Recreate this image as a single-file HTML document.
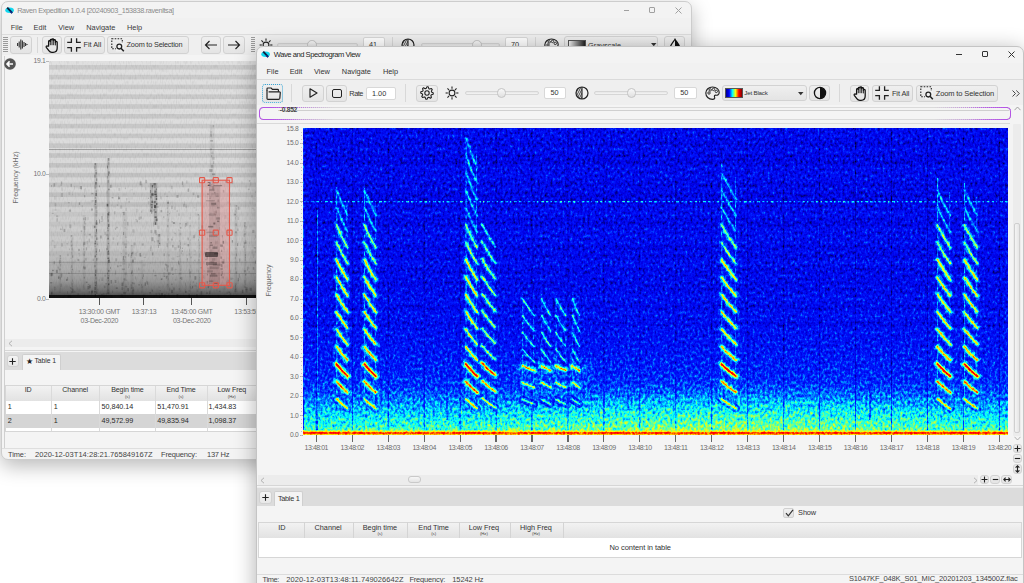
<!DOCTYPE html><html><head><meta charset="utf-8"><style>
html,body{margin:0;padding:0;}
body{width:1024px;height:583px;overflow:hidden;position:relative;background:#ffffff;font-family:"Liberation Sans",sans-serif;}
.t{position:absolute;line-height:1;white-space:nowrap;}
.r{position:absolute;display:block;}
</style></head><body>
<div class="r" style="left:0.5px;top:0.5px;width:691.5px;height:459.5px;border-radius:7px;background:#f3f3f3;box-shadow:0 6px 20px rgba(0,0,0,0.28);border:1px solid #cdcdcd;box-sizing:border-box;"></div>
<div class="r" style="left:1.50px;top:18.00px;width:689.00px;height:16.00px;background:#f1f1f1;"></div>
<div class="r" style="left:1.50px;top:34.00px;width:689.00px;height:1.00px;background:#dcdcdc;"></div>
<div class="r" style="left:1.50px;top:35.00px;width:689.00px;height:20.00px;background:#efefef;"></div>
<div class="r" style="left:1.50px;top:55.00px;width:689.00px;height:393.00px;background:#f4f4f4;"></div>
<div class="r" style="left:1.50px;top:448.00px;width:689.00px;height:1.00px;background:#dedede;"></div>
<svg class="r" style="left:5px;top:7px;" width="10" height="7" viewBox="0 0 10 7"><ellipse cx="4.6" cy="3.3" rx="4.3" ry="2.7" fill="#12d8f0"/><path d="M2.2,0.6 L7.2,5.8" stroke="#102040" stroke-width="1.9"/><path d="M5.5,4.2 L7,6.2" stroke="#0a2a8a" stroke-width="1.6"/></svg>
<div class="t" style="top:6.53px;font-size:7.3px;color:#8c8c8c;letter-spacing:-0.349px;left:17.20px;">Raven Expedition 1.0.4 [20240903_153838.ravenltsa]</div>
<div class="r" style="left:623.80px;top:9.60px;width:5.70px;height:1.00px;background:#a0a0a0;"></div>
<div class="r" style="left:649.00px;top:7.00px;width:6.00px;height:6.00px;background:transparent;border:1px solid #a0a0a0;border-radius:1px;box-sizing:border-box;"></div>
<svg class="r" style="left:675px;top:7px;" width="7" height="7" viewBox="0 0 7 7"><path d="M0.5,0.5 L6.5,6.5 M6.5,0.5 L0.5,6.5" stroke="#a0a0a0" stroke-width="1"/></svg>
<div class="t" style="top:23.68px;font-size:7.4px;color:#3a3a3a;left:10.80px;">File</div>
<div class="t" style="top:23.68px;font-size:7.4px;color:#3a3a3a;left:33.60px;">Edit</div>
<div class="t" style="top:23.68px;font-size:7.4px;color:#3a3a3a;left:58.30px;">View</div>
<div class="t" style="top:23.68px;font-size:7.4px;color:#3a3a3a;left:86.20px;">Navigate</div>
<div class="t" style="top:23.68px;font-size:7.4px;color:#3a3a3a;left:127.00px;">Help</div>
<svg class="r" style="left:3px;top:37px;" width="5" height="16" viewBox="0 0 5 16"><rect x="0" y="0" width="5" height="1" fill="#9a9a9a"/><rect x="0" y="2" width="5" height="1" fill="#9a9a9a"/><rect x="0" y="4" width="5" height="1" fill="#9a9a9a"/><rect x="0" y="6" width="5" height="1" fill="#9a9a9a"/><rect x="0" y="8" width="5" height="1" fill="#9a9a9a"/><rect x="0" y="10" width="5" height="1" fill="#9a9a9a"/><rect x="0" y="12" width="5" height="1" fill="#9a9a9a"/><rect x="0" y="14" width="5" height="1" fill="#9a9a9a"/></svg>
<div class="r" style="left:10.00px;top:36.00px;width:21.50px;height:17.50px;background:linear-gradient(#efefef,#e4e4e4);border:1px solid #d2d2d2;border-radius:3px;box-sizing:border-box;"></div>
<svg class="r" style="left:14.5px;top:39px;" width="13" height="11" viewBox="0 0 13 11"><path d="M1,5.5 V5.5 M2.6,4 V7 M4.2,2.5 V8.5 M5.8,0.5 V10.5 M7.4,1.5 V9.5 M9,3 V8 M10.6,4 V7 M12,5 V6" stroke="#333" stroke-width="1.1"/></svg>
<div class="r" style="left:37.00px;top:37.00px;width:1.00px;height:16.00px;background:#d8d8d8;"></div>
<div class="r" style="left:42.00px;top:36.00px;width:19.50px;height:17.50px;background:linear-gradient(#efefef,#e4e4e4);border:1px solid #d2d2d2;border-radius:3px;box-sizing:border-box;"></div>
<svg class="r" style="left:45px;top:37.5px;" width="14" height="15" viewBox="0 0 14 15"><path d="M3.6,8.2 L3.6,3.4 C3.6,2.3 5.3,2.3 5.3,3.4 L5.3,2.1 C5.3,1 7,1 7,2.1 L7,1.7 C7,0.6 8.7,0.6 8.7,1.7 L8.7,2.5 C8.7,1.4 10.4,1.4 10.4,2.5 L10.4,4.2 C10.4,3.2 12.2,3.2 12.2,4.3 L12.2,10 C12.2,12.6 10.5,14.3 8.1,14.3 L6.8,14.3 C5.4,14.3 4.5,13.7 3.8,12.7 L1.3,9.4 C0.7,8.5 1.7,7.5 2.6,8.2 Z" fill="none" stroke="#111" stroke-width="1.25" stroke-linejoin="round"/><path d="M5.3,3.2 V7.2 M7,2 V7.2 M8.7,2.4 V7.2 M10.4,4 V7.4" stroke="#111" stroke-width="0.9"/></svg>
<div class="r" style="left:63.50px;top:36.00px;width:41.00px;height:17.50px;background:linear-gradient(#efefef,#e4e4e4);border:1px solid #d2d2d2;border-radius:3px;box-sizing:border-box;"></div>
<svg class="r" style="left:66.5px;top:38px;" width="14" height="14" viewBox="0 0 14 14"><path d="M4.4,0.3 V4.4 H0.2 M9.6,0.3 V4.4 H13.8 M4.4,13.7 V9.6 H0.2 M9.6,13.7 V9.6 H13.8" fill="none" stroke="#222" stroke-width="1.3"/></svg>
<div class="t" style="top:41.13px;font-size:7.3px;color:#333;left:83.50px;">Fit All</div>
<div class="r" style="left:107.00px;top:36.00px;width:82.00px;height:17.50px;background:linear-gradient(#efefef,#e4e4e4);border:1px solid #d2d2d2;border-radius:3px;box-sizing:border-box;"></div>
<svg class="r" style="left:110.5px;top:38px;" width="14" height="14" viewBox="0 0 14 14"><rect x="0.8" y="0.8" width="10.5" height="10" fill="none" stroke="#222" stroke-width="1.1" stroke-dasharray="1.6 1.3"/><rect x="5" y="5" width="8" height="8.5" fill="#f0f0f0"/><circle cx="8.3" cy="8.6" r="2.4" fill="none" stroke="#222" stroke-width="1.3"/><path d="M10,10.3 L12.8,13.2" stroke="#222" stroke-width="1.6"/></svg>
<div class="t" style="top:41.13px;font-size:7.3px;color:#333;letter-spacing:-0.18px;left:126.60px;">Zoom to Selection</div>
<div class="r" style="left:200.50px;top:36.00px;width:20.50px;height:17.50px;background:linear-gradient(#efefef,#e4e4e4);border:1px solid #d2d2d2;border-radius:3px;box-sizing:border-box;"></div>
<svg class="r" style="left:203.5px;top:40px;" width="14" height="10" viewBox="0 0 14 10"><path d="M13,5 H1.5 M5.5,1 L1.5,5 L5.5,9" fill="none" stroke="#222" stroke-width="1.2"/></svg>
<div class="r" style="left:223.00px;top:36.00px;width:21.50px;height:17.50px;background:linear-gradient(#efefef,#e4e4e4);border:1px solid #d2d2d2;border-radius:3px;box-sizing:border-box;"></div>
<svg class="r" style="left:226.5px;top:40px;" width="14" height="10" viewBox="0 0 14 10"><path d="M1,5 H12.5 M8.5,1 L12.5,5 L8.5,9" fill="none" stroke="#222" stroke-width="1.2"/></svg>
<svg class="r" style="left:250.5px;top:37px;" width="5" height="16" viewBox="0 0 5 16"><rect x="0" y="0" width="4" height="1" fill="#9a9a9a"/><rect x="0" y="2" width="4" height="1" fill="#9a9a9a"/><rect x="0" y="4" width="4" height="1" fill="#9a9a9a"/><rect x="0" y="6" width="4" height="1" fill="#9a9a9a"/><rect x="0" y="8" width="4" height="1" fill="#9a9a9a"/><rect x="0" y="10" width="4" height="1" fill="#9a9a9a"/><rect x="0" y="12" width="4" height="1" fill="#9a9a9a"/><rect x="0" y="14" width="4" height="1" fill="#9a9a9a"/></svg>
<svg class="r" style="left:258.5px;top:37.5px;" width="14" height="14" viewBox="0 0 14 14"><circle cx="7" cy="7" r="2.9" fill="none" stroke="#222" stroke-width="1.1"/><path d="M11.20,7.00 L13.40,7.00" stroke="#222" stroke-width="1.1"/><path d="M9.97,9.97 L11.53,11.53" stroke="#222" stroke-width="1.1"/><path d="M7.00,11.20 L7.00,13.40" stroke="#222" stroke-width="1.1"/><path d="M4.03,9.97 L2.47,11.53" stroke="#222" stroke-width="1.1"/><path d="M2.80,7.00 L0.60,7.00" stroke="#222" stroke-width="1.1"/><path d="M4.03,4.03 L2.47,2.47" stroke="#222" stroke-width="1.1"/><path d="M7.00,2.80 L7.00,0.60" stroke="#222" stroke-width="1.1"/><path d="M9.97,4.03 L11.53,2.47" stroke="#222" stroke-width="1.1"/></svg>
<div class="r" style="left:277.00px;top:42.80px;width:81.00px;height:4.00px;background:linear-gradient(#e6e6e6,#f4f4f4);border:1px solid #d6d6d6;border-radius:3px;box-sizing:border-box;"></div>
<div class="r" style="left:307.20px;top:40.00px;width:9.60px;height:9.60px;background:linear-gradient(#f8f8f8,#e0e0e0);border:1px solid #c4c4c4;border-radius:50%;box-sizing:border-box;"></div>
<div class="r" style="left:363.00px;top:36.50px;width:22.00px;height:16.50px;background:#fff;border:1px solid #d8d8d8;border-radius:2px;box-sizing:border-box;"></div>
<div class="t" style="top:41.08px;font-size:7.3px;color:#333;left:369.00px;">41</div>
<div class="r" style="left:392.00px;top:37.00px;width:1.00px;height:16.00px;background:#d8d8d8;"></div>
<svg class="r" style="left:400.5px;top:37.5px;" width="14" height="14" viewBox="0 0 14 14"><defs><clipPath id="hc400.5"><path d="M7,1.3 A5.7,5.7 0 0 0 7,12.7 Z"/></clipPath></defs><circle cx="7" cy="7" r="6" fill="none" stroke="#222" stroke-width="1.2"/><path d="M7,1 V13" stroke="#222" stroke-width="1.1"/><g clip-path="url(#hc400.5)"><path d="M-2,13 L4,1" stroke="#222" stroke-width="0.8"/><path d="M0,13 L6,1" stroke="#222" stroke-width="0.8"/><path d="M2,13 L8,1" stroke="#222" stroke-width="0.8"/><path d="M4,13 L10,1" stroke="#222" stroke-width="0.8"/><path d="M6,13 L12,1" stroke="#222" stroke-width="0.8"/></g></svg>
<div class="r" style="left:420.60px;top:42.80px;width:79.40px;height:4.00px;background:linear-gradient(#e6e6e6,#f4f4f4);border:1px solid #d6d6d6;border-radius:3px;box-sizing:border-box;"></div>
<div class="r" style="left:472.20px;top:40.00px;width:9.60px;height:9.60px;background:linear-gradient(#f8f8f8,#e0e0e0);border:1px solid #c4c4c4;border-radius:50%;box-sizing:border-box;"></div>
<div class="r" style="left:505.00px;top:36.50px;width:22.50px;height:16.50px;background:#fff;border:1px solid #d8d8d8;border-radius:2px;box-sizing:border-box;"></div>
<div class="t" style="top:41.08px;font-size:7.3px;color:#333;left:511.00px;">70</div>
<div class="r" style="left:534.70px;top:37.00px;width:1.00px;height:16.00px;background:#d8d8d8;"></div>
<svg class="r" style="left:543.5px;top:38px;" width="15" height="14" viewBox="0 0 15 14"><path d="M7.5,1 C11.5,1 14.2,3.6 14.2,6.6 C14.2,8.8 12.4,9.4 11,9.2 C9.6,9 9,10 9.6,11.2 C10.2,12.6 9.2,13.3 7.5,13.3 C3.6,13.3 0.8,10.5 0.8,7 C0.8,3.6 3.8,1 7.5,1Z" fill="none" stroke="#222" stroke-width="1.15"/><circle cx="4" cy="7" r="1.2" fill="none" stroke="#222" stroke-width="0.9"/><circle cx="5.2" cy="3.9" r="1.2" fill="none" stroke="#222" stroke-width="0.9"/><circle cx="8.5" cy="3.4" r="1.2" fill="none" stroke="#222" stroke-width="0.9"/><circle cx="11.3" cy="5.4" r="1.2" fill="none" stroke="#222" stroke-width="0.9"/></svg>
<div class="r" style="left:564.00px;top:36.00px;width:94.00px;height:17.50px;background:linear-gradient(#efefef,#e4e4e4);border:1px solid #d2d2d2;border-radius:3px;box-sizing:border-box;"></div>
<div class="r" style="left:567.50px;top:39.50px;width:18.00px;height:11.00px;background:linear-gradient(90deg,#f4f4f4,#202020);border:1px solid #555;box-sizing:border-box;"></div>
<div class="t" style="top:41.93px;font-size:7.3px;color:#333;letter-spacing:0.017px;left:588.00px;">Grayscale</div>
<svg class="r" style="left:651px;top:43px;" width="6" height="4" viewBox="0 0 6 4"><path d="M0,0 H5.5 L2.75,3.2Z" fill="#333"/></svg>
<div class="r" style="left:663.70px;top:36.00px;width:21.00px;height:17.50px;background:linear-gradient(#efefef,#e4e4e4);border:1px solid #d2d2d2;border-radius:3px;box-sizing:border-box;"></div>
<svg class="r" style="left:668.5px;top:38px;" width="12" height="14" viewBox="0 0 12 14"><path d="M6,1.2 C4.8,3.4 1.4,6.6 1.4,9.3 C1.4,11.8 3.5,13.4 6,13.4 C8.5,13.4 10.6,11.8 10.6,9.3 C10.6,6.6 7.2,3.4 6,1.2Z" fill="none" stroke="#111" stroke-width="1.2"/><path d="M6,1.2 C7.2,3.4 10.6,6.6 10.6,9.3 C10.6,11.8 8.5,13.4 6,13.4Z" fill="#111"/></svg>
<div class="r" style="left:4.00px;top:56.00px;width:1.00px;height:392.00px;background:#d0d0d0;"></div>
<svg class="r" style="left:4px;top:58px;" width="12" height="12" viewBox="0 0 12 12"><circle cx="6" cy="6" r="5.8" fill="#555"/><path d="M9,6 H3.2 M5.6,3.4 L3,6 L5.6,8.6" fill="none" stroke="#fff" stroke-width="1.6"/></svg>
<div class="t" style="top:57.78px;font-size:6.8px;color:#747474;letter-spacing:-0.3px;right:978.50px;">19.1</div>
<div class="t" style="top:170.58px;font-size:6.8px;color:#747474;letter-spacing:-0.3px;right:978.50px;">10.0</div>
<div class="t" style="top:295.58px;font-size:6.8px;color:#747474;letter-spacing:-0.3px;right:978.50px;">0.0</div>
<div class="r" style="left:46.30px;top:60.80px;width:3.20px;height:0.90px;background:#b8b8b8;"></div>
<div class="r" style="left:46.30px;top:173.60px;width:3.20px;height:0.90px;background:#b8b8b8;"></div>
<div class="r" style="left:46.30px;top:298.60px;width:3.20px;height:0.90px;background:#b8b8b8;"></div>
<div class="t" style="top:174.18px;font-size:7.0px;color:#6a6a6a;letter-spacing:0.019px;left:-284.80px;width:600px;text-align:center;transform:rotate(-90deg);">Frequency (kHz)</div>
<svg class="r" style="left:49px;top:61px;" width="207" height="237" viewBox="0 0 207 237"><defs><linearGradient id="gg" x1="0" y1="0" x2="0" y2="1"><stop offset="0" stop-color="#e0e0e0"/><stop offset="0.35" stop-color="#dcdcdc"/><stop offset="0.5" stop-color="#d6d6d6"/><stop offset="0.78" stop-color="#c8c8c8"/><stop offset="0.86" stop-color="#b4b4b4"/><stop offset="0.93" stop-color="#969696"/><stop offset="0.97" stop-color="#707070"/><stop offset="1" stop-color="#404040"/></linearGradient><filter id="gn" x="0" y="0" width="1" height="1" color-interpolation-filters="sRGB"><feTurbulence type="fractalNoise" baseFrequency="0.8 0.25" numOctaves="1" seed="11" result="n"/><feColorMatrix in="n" type="matrix" values="0 0 0 0 0  0 0 0 0 0  0 0 0 0 0  -0.16 0 0 0 0.085" result="a"/><feComposite in="a" in2="SourceGraphic" operator="in"/></filter></defs><rect x="0" y="0" width="207" height="237" fill="url(#gg)"/><rect x="0" y="4.0" width="207" height="4.6" fill="#000" fill-opacity="0.095"/><rect x="0" y="13.8" width="207" height="4.6" fill="#000" fill-opacity="0.095"/><rect x="0" y="23.6" width="207" height="4.6" fill="#000" fill-opacity="0.095"/><rect x="0" y="33.4" width="207" height="4.6" fill="#000" fill-opacity="0.095"/><rect x="0" y="43.2" width="207" height="4.6" fill="#000" fill-opacity="0.095"/><rect x="0" y="53.0" width="207" height="4.6" fill="#000" fill-opacity="0.095"/><rect x="0" y="62.8" width="207" height="4.6" fill="#000" fill-opacity="0.095"/><rect x="0" y="72.6" width="207" height="4.6" fill="#000" fill-opacity="0.095"/><rect x="0" y="82.4" width="207" height="4.6" fill="#000" fill-opacity="0.095"/><rect x="0" y="92.2" width="207" height="4.6" fill="#000" fill-opacity="0.095"/><rect x="0" y="102.0" width="207" height="4.6" fill="#000" fill-opacity="0.095"/><rect x="0" y="111.8" width="207" height="4.6" fill="#000" fill-opacity="0.095"/><rect x="0" y="121.6" width="207" height="4.6" fill="#000" fill-opacity="0.095"/><rect x="0" y="131.4" width="207" height="4.6" fill="#000" fill-opacity="0.095"/><rect x="0" y="141.2" width="207" height="4.6" fill="#000" fill-opacity="0.095"/><rect x="0" y="151.0" width="207" height="4.6" fill="#000" fill-opacity="0.045"/><rect x="0" y="160.8" width="207" height="4.6" fill="#000" fill-opacity="0.045"/><rect x="0" y="170.6" width="207" height="4.6" fill="#000" fill-opacity="0.045"/><rect x="0" y="180.4" width="207" height="4.6" fill="#000" fill-opacity="0.045"/><rect x="0" y="190.2" width="207" height="4.6" fill="#000" fill-opacity="0.045"/><rect x="0" y="200.0" width="207" height="4.6" fill="#000" fill-opacity="0.045"/><rect x="0" y="88" width="207" height="0.9" fill="#000" fill-opacity="0.3"/><rect x="0" y="201" width="207" height="0.8" fill="#000" fill-opacity="0.15"/><rect x="0" y="212" width="207" height="0.8" fill="#000" fill-opacity="0.2"/><rect x="0" y="234" width="207" height="3" fill="#111"/><rect x="45.3" y="102" width="3.0" height="131" fill="#000" fill-opacity="0.11"/><rect x="45.7" y="102.0" width="1.1" height="2.3" fill="#000" fill-opacity="0.31"/><rect x="45.2" y="105.3" width="1.3" height="2.8" fill="#000" fill-opacity="0.16"/><rect x="46.1" y="108.8" width="1.6" height="1.1" fill="#000" fill-opacity="0.16"/><rect x="46.3" y="110.8" width="1.8" height="2.6" fill="#000" fill-opacity="0.20"/><rect x="45.5" y="113.6" width="0.9" height="2.9" fill="#000" fill-opacity="0.34"/><rect x="47.0" y="117.4" width="1.4" height="2.6" fill="#000" fill-opacity="0.21"/><rect x="46.0" y="120.9" width="1.8" height="2.7" fill="#000" fill-opacity="0.30"/><rect x="45.8" y="123.6" width="0.9" height="1.5" fill="#000" fill-opacity="0.13"/><rect x="45.6" y="125.5" width="1.2" height="2.3" fill="#000" fill-opacity="0.17"/><rect x="46.8" y="129.2" width="1.0" height="2.3" fill="#000" fill-opacity="0.15"/><rect x="46.4" y="132.0" width="1.5" height="3.0" fill="#000" fill-opacity="0.34"/><rect x="45.7" y="136.2" width="1.2" height="1.5" fill="#000" fill-opacity="0.16"/><rect x="45.8" y="139.0" width="1.6" height="2.8" fill="#000" fill-opacity="0.36"/><rect x="45.6" y="142.5" width="1.5" height="1.5" fill="#000" fill-opacity="0.26"/><rect x="45.8" y="145.4" width="2.0" height="1.8" fill="#000" fill-opacity="0.13"/><rect x="45.8" y="147.2" width="1.8" height="1.2" fill="#000" fill-opacity="0.12"/><rect x="46.5" y="149.0" width="2.0" height="3.0" fill="#000" fill-opacity="0.10"/><rect x="46.5" y="153.1" width="1.1" height="2.4" fill="#000" fill-opacity="0.13"/><rect x="47.1" y="159.3" width="1.0" height="1.5" fill="#000" fill-opacity="0.34"/><rect x="46.8" y="161.3" width="1.0" height="2.3" fill="#000" fill-opacity="0.25"/><rect x="45.2" y="164.8" width="1.2" height="2.1" fill="#000" fill-opacity="0.36"/><rect x="47.1" y="168.1" width="0.9" height="2.7" fill="#000" fill-opacity="0.37"/><rect x="46.5" y="170.9" width="1.7" height="2.0" fill="#000" fill-opacity="0.14"/><rect x="45.7" y="173.6" width="1.8" height="2.1" fill="#000" fill-opacity="0.16"/><rect x="47.2" y="176.5" width="1.2" height="2.5" fill="#000" fill-opacity="0.28"/><rect x="45.9" y="179.6" width="1.1" height="2.0" fill="#000" fill-opacity="0.26"/><rect x="45.5" y="182.0" width="1.6" height="1.4" fill="#000" fill-opacity="0.35"/><rect x="45.4" y="184.7" width="1.6" height="1.1" fill="#000" fill-opacity="0.14"/><rect x="46.5" y="187.3" width="1.7" height="2.1" fill="#000" fill-opacity="0.15"/><rect x="46.6" y="189.6" width="1.4" height="1.9" fill="#000" fill-opacity="0.29"/><rect x="46.9" y="192.9" width="1.2" height="1.2" fill="#000" fill-opacity="0.17"/><rect x="45.7" y="194.4" width="1.1" height="1.9" fill="#000" fill-opacity="0.36"/><rect x="47.4" y="197.0" width="0.9" height="2.7" fill="#000" fill-opacity="0.33"/><rect x="45.3" y="204.2" width="1.3" height="2.0" fill="#000" fill-opacity="0.21"/><rect x="45.9" y="213.2" width="1.0" height="2.1" fill="#000" fill-opacity="0.37"/><rect x="46.5" y="216.2" width="0.9" height="2.1" fill="#000" fill-opacity="0.24"/><rect x="45.5" y="221.0" width="1.6" height="1.4" fill="#000" fill-opacity="0.13"/><rect x="45.9" y="223.7" width="1.5" height="1.5" fill="#000" fill-opacity="0.26"/><rect x="45.4" y="226.0" width="1.7" height="2.9" fill="#000" fill-opacity="0.21"/><rect x="45.1" y="229.9" width="1.7" height="1.6" fill="#000" fill-opacity="0.23"/><rect x="45.8" y="233.0" width="1.1" height="3.0" fill="#000" fill-opacity="0.36"/><rect x="57.8" y="97" width="2.8" height="136" fill="#000" fill-opacity="0.13"/><rect x="59.3" y="97.0" width="1.0" height="2.8" fill="#000" fill-opacity="0.35"/><rect x="59.4" y="100.7" width="0.8" height="3.0" fill="#000" fill-opacity="0.22"/><rect x="58.0" y="104.6" width="0.9" height="2.9" fill="#000" fill-opacity="0.30"/><rect x="59.3" y="110.4" width="1.3" height="2.3" fill="#000" fill-opacity="0.40"/><rect x="59.3" y="112.9" width="0.8" height="1.8" fill="#000" fill-opacity="0.33"/><rect x="57.7" y="115.1" width="1.2" height="2.5" fill="#000" fill-opacity="0.14"/><rect x="58.5" y="118.9" width="1.6" height="2.8" fill="#000" fill-opacity="0.17"/><rect x="59.1" y="127.7" width="1.6" height="1.5" fill="#000" fill-opacity="0.25"/><rect x="57.7" y="142.8" width="1.6" height="2.6" fill="#000" fill-opacity="0.41"/><rect x="59.3" y="150.8" width="1.1" height="1.0" fill="#000" fill-opacity="0.44"/><rect x="58.4" y="152.2" width="1.8" height="2.3" fill="#000" fill-opacity="0.43"/><rect x="57.9" y="154.7" width="1.8" height="2.9" fill="#000" fill-opacity="0.16"/><rect x="58.5" y="158.3" width="1.4" height="2.5" fill="#000" fill-opacity="0.25"/><rect x="58.9" y="163.1" width="1.5" height="2.9" fill="#000" fill-opacity="0.34"/><rect x="58.3" y="166.5" width="1.1" height="1.1" fill="#000" fill-opacity="0.40"/><rect x="58.4" y="168.7" width="1.2" height="1.6" fill="#000" fill-opacity="0.22"/><rect x="58.7" y="173.4" width="1.1" height="2.8" fill="#000" fill-opacity="0.12"/><rect x="58.4" y="176.6" width="1.5" height="1.9" fill="#000" fill-opacity="0.27"/><rect x="58.8" y="181.9" width="1.3" height="1.3" fill="#000" fill-opacity="0.23"/><rect x="58.1" y="184.5" width="1.0" height="2.5" fill="#000" fill-opacity="0.13"/><rect x="59.1" y="189.4" width="1.0" height="1.8" fill="#000" fill-opacity="0.28"/><rect x="58.9" y="191.6" width="1.6" height="2.3" fill="#000" fill-opacity="0.16"/><rect x="58.3" y="196.7" width="1.6" height="1.1" fill="#000" fill-opacity="0.38"/><rect x="59.0" y="198.8" width="1.8" height="3.0" fill="#000" fill-opacity="0.32"/><rect x="59.0" y="209.2" width="1.4" height="1.5" fill="#000" fill-opacity="0.29"/><rect x="58.2" y="211.7" width="1.1" height="1.5" fill="#000" fill-opacity="0.23"/><rect x="58.8" y="214.0" width="1.5" height="1.3" fill="#000" fill-opacity="0.14"/><rect x="58.6" y="215.9" width="1.0" height="2.1" fill="#000" fill-opacity="0.42"/><rect x="59.1" y="222.4" width="1.2" height="1.8" fill="#000" fill-opacity="0.40"/><rect x="58.6" y="228.2" width="1.0" height="2.2" fill="#000" fill-opacity="0.13"/><rect x="58.7" y="231.0" width="1.0" height="2.4" fill="#000" fill-opacity="0.16"/><rect x="73.7" y="151" width="4.0" height="81" fill="#000" fill-opacity="0.06"/><rect x="73.3" y="151.0" width="2.0" height="1.1" fill="#000" fill-opacity="0.15"/><rect x="74.0" y="152.3" width="1.6" height="1.9" fill="#000" fill-opacity="0.10"/><rect x="75.4" y="158.3" width="0.8" height="1.5" fill="#000" fill-opacity="0.20"/><rect x="75.7" y="166.4" width="1.1" height="1.0" fill="#000" fill-opacity="0.13"/><rect x="75.9" y="175.6" width="2.3" height="1.1" fill="#000" fill-opacity="0.11"/><rect x="75.1" y="182.3" width="3.0" height="2.2" fill="#000" fill-opacity="0.10"/><rect x="76.0" y="185.2" width="1.6" height="1.7" fill="#000" fill-opacity="0.17"/><rect x="75.9" y="191.3" width="2.4" height="2.4" fill="#000" fill-opacity="0.09"/><rect x="75.5" y="194.9" width="1.8" height="2.1" fill="#000" fill-opacity="0.09"/><rect x="73.6" y="198.2" width="2.7" height="2.7" fill="#000" fill-opacity="0.12"/><rect x="73.4" y="201.8" width="2.7" height="1.8" fill="#000" fill-opacity="0.08"/><rect x="73.0" y="207.5" width="2.9" height="1.6" fill="#000" fill-opacity="0.16"/><rect x="74.5" y="217.3" width="2.0" height="2.2" fill="#000" fill-opacity="0.16"/><rect x="73.9" y="220.0" width="1.4" height="2.4" fill="#000" fill-opacity="0.08"/><rect x="75.9" y="224.9" width="2.4" height="1.4" fill="#000" fill-opacity="0.13"/><rect x="74.1" y="226.7" width="1.3" height="1.2" fill="#000" fill-opacity="0.05"/><rect x="74.3" y="231.1" width="2.7" height="2.4" fill="#000" fill-opacity="0.18"/><rect x="21.8" y="174" width="2.5" height="57" fill="#000" fill-opacity="0.06"/><rect x="21.9" y="174.0" width="0.9" height="1.9" fill="#000" fill-opacity="0.19"/><rect x="22.8" y="176.7" width="0.9" height="2.6" fill="#000" fill-opacity="0.06"/><rect x="21.7" y="179.5" width="1.5" height="2.1" fill="#000" fill-opacity="0.16"/><rect x="22.3" y="182.6" width="1.2" height="2.6" fill="#000" fill-opacity="0.12"/><rect x="22.5" y="186.4" width="1.2" height="3.0" fill="#000" fill-opacity="0.16"/><rect x="21.9" y="190.8" width="1.3" height="1.4" fill="#000" fill-opacity="0.08"/><rect x="22.1" y="192.4" width="1.2" height="1.0" fill="#000" fill-opacity="0.08"/><rect x="23.0" y="194.4" width="1.3" height="2.4" fill="#000" fill-opacity="0.17"/><rect x="22.3" y="204.2" width="0.9" height="2.7" fill="#000" fill-opacity="0.16"/><rect x="22.7" y="207.7" width="1.3" height="1.6" fill="#000" fill-opacity="0.19"/><rect x="22.5" y="210.0" width="0.8" height="2.0" fill="#000" fill-opacity="0.10"/><rect x="23.0" y="218.5" width="0.8" height="2.3" fill="#000" fill-opacity="0.12"/><rect x="22.6" y="221.8" width="1.2" height="2.8" fill="#000" fill-opacity="0.12"/><rect x="22.9" y="224.8" width="1.3" height="1.7" fill="#000" fill-opacity="0.10"/><rect x="22.2" y="230.3" width="1.0" height="2.1" fill="#000" fill-opacity="0.20"/><rect x="33.8" y="154" width="2.5" height="75" fill="#000" fill-opacity="0.06"/><rect x="34.3" y="157.0" width="0.9" height="2.1" fill="#000" fill-opacity="0.16"/><rect x="35.0" y="160.0" width="1.2" height="2.5" fill="#000" fill-opacity="0.12"/><rect x="34.5" y="165.8" width="1.2" height="1.5" fill="#000" fill-opacity="0.06"/><rect x="35.1" y="168.7" width="0.9" height="2.8" fill="#000" fill-opacity="0.12"/><rect x="35.0" y="172.6" width="1.4" height="2.0" fill="#000" fill-opacity="0.09"/><rect x="34.3" y="181.2" width="1.5" height="2.6" fill="#000" fill-opacity="0.17"/><rect x="34.2" y="187.3" width="1.2" height="2.0" fill="#000" fill-opacity="0.13"/><rect x="34.8" y="190.1" width="0.9" height="1.9" fill="#000" fill-opacity="0.14"/><rect x="34.6" y="192.3" width="1.3" height="2.6" fill="#000" fill-opacity="0.17"/><rect x="34.6" y="199.3" width="1.2" height="2.0" fill="#000" fill-opacity="0.18"/><rect x="33.9" y="205.1" width="1.3" height="2.4" fill="#000" fill-opacity="0.12"/><rect x="34.7" y="215.7" width="1.3" height="1.8" fill="#000" fill-opacity="0.18"/><rect x="117.8" y="139" width="2.5" height="90" fill="#000" fill-opacity="0.05"/><rect x="118.5" y="140.5" width="1.2" height="1.7" fill="#000" fill-opacity="0.15"/><rect x="117.8" y="146.3" width="1.0" height="1.9" fill="#000" fill-opacity="0.15"/><rect x="118.2" y="149.6" width="1.1" height="2.4" fill="#000" fill-opacity="0.13"/><rect x="117.9" y="152.9" width="1.4" height="1.8" fill="#000" fill-opacity="0.10"/><rect x="118.5" y="157.8" width="1.5" height="3.0" fill="#000" fill-opacity="0.09"/><rect x="118.0" y="164.1" width="1.4" height="2.2" fill="#000" fill-opacity="0.15"/><rect x="118.6" y="177.2" width="1.1" height="2.3" fill="#000" fill-opacity="0.15"/><rect x="118.6" y="204.3" width="1.3" height="2.1" fill="#000" fill-opacity="0.13"/><rect x="117.8" y="207.6" width="1.0" height="2.9" fill="#000" fill-opacity="0.16"/><rect x="119.1" y="211.3" width="0.8" height="2.8" fill="#000" fill-opacity="0.17"/><rect x="118.0" y="214.6" width="1.5" height="1.8" fill="#000" fill-opacity="0.11"/><rect x="118.7" y="216.6" width="1.1" height="2.8" fill="#000" fill-opacity="0.15"/><rect x="118.3" y="222.8" width="1.1" height="1.8" fill="#000" fill-opacity="0.17"/><rect x="118.8" y="224.7" width="1.5" height="1.7" fill="#000" fill-opacity="0.06"/><rect x="185.6" y="144" width="2.8" height="87" fill="#000" fill-opacity="0.07"/><rect x="187.2" y="144.0" width="0.9" height="1.8" fill="#000" fill-opacity="0.15"/><rect x="187.1" y="146.8" width="0.8" height="2.3" fill="#000" fill-opacity="0.11"/><rect x="185.7" y="149.3" width="1.6" height="2.1" fill="#000" fill-opacity="0.10"/><rect x="185.3" y="152.7" width="1.7" height="1.7" fill="#000" fill-opacity="0.22"/><rect x="186.8" y="154.6" width="1.0" height="1.3" fill="#000" fill-opacity="0.06"/><rect x="185.9" y="155.9" width="1.1" height="2.6" fill="#000" fill-opacity="0.07"/><rect x="186.6" y="162.3" width="0.9" height="2.6" fill="#000" fill-opacity="0.24"/><rect x="186.2" y="170.3" width="1.5" height="2.0" fill="#000" fill-opacity="0.23"/><rect x="186.3" y="186.7" width="1.1" height="1.9" fill="#000" fill-opacity="0.14"/><rect x="187.0" y="192.6" width="0.9" height="2.7" fill="#000" fill-opacity="0.21"/><rect x="185.8" y="196.1" width="1.1" height="2.2" fill="#000" fill-opacity="0.13"/><rect x="185.8" y="206.3" width="1.5" height="2.2" fill="#000" fill-opacity="0.08"/><rect x="185.9" y="222.3" width="1.5" height="1.5" fill="#000" fill-opacity="0.12"/><rect x="185.8" y="223.9" width="1.2" height="2.7" fill="#000" fill-opacity="0.18"/><rect x="186.1" y="226.6" width="1.2" height="2.5" fill="#000" fill-opacity="0.13"/><rect x="185.8" y="230.2" width="0.9" height="2.6" fill="#000" fill-opacity="0.09"/><rect x="194.8" y="161" width="2.5" height="66" fill="#000" fill-opacity="0.06"/><rect x="195.3" y="161.0" width="1.3" height="2.3" fill="#000" fill-opacity="0.12"/><rect x="195.1" y="163.8" width="1.1" height="2.5" fill="#000" fill-opacity="0.15"/><rect x="195.6" y="167.0" width="1.1" height="2.3" fill="#000" fill-opacity="0.05"/><rect x="195.3" y="169.8" width="1.0" height="1.4" fill="#000" fill-opacity="0.05"/><rect x="195.4" y="172.3" width="1.3" height="1.4" fill="#000" fill-opacity="0.18"/><rect x="195.3" y="181.6" width="0.8" height="1.8" fill="#000" fill-opacity="0.17"/><rect x="195.4" y="187.2" width="1.2" height="2.7" fill="#000" fill-opacity="0.11"/><rect x="195.6" y="190.4" width="0.9" height="1.7" fill="#000" fill-opacity="0.07"/><rect x="195.8" y="192.8" width="1.3" height="2.8" fill="#000" fill-opacity="0.17"/><rect x="195.8" y="196.0" width="1.2" height="1.3" fill="#000" fill-opacity="0.15"/><rect x="195.7" y="197.5" width="1.3" height="2.5" fill="#000" fill-opacity="0.12"/><rect x="195.2" y="207.5" width="1.0" height="1.1" fill="#000" fill-opacity="0.06"/><rect x="196.1" y="209.4" width="0.8" height="1.6" fill="#000" fill-opacity="0.06"/><rect x="195.5" y="218.9" width="1.4" height="2.8" fill="#000" fill-opacity="0.10"/><rect x="196.2" y="222.4" width="0.9" height="1.3" fill="#000" fill-opacity="0.10"/><rect x="195.4" y="224.8" width="1.0" height="2.0" fill="#000" fill-opacity="0.12"/><rect x="81.5" y="184" width="3.0" height="48" fill="#000" fill-opacity="0.06"/><rect x="82.2" y="184.0" width="1.1" height="1.3" fill="#000" fill-opacity="0.10"/><rect x="81.5" y="194.3" width="1.5" height="2.7" fill="#000" fill-opacity="0.10"/><rect x="83.1" y="198.5" width="1.5" height="2.4" fill="#000" fill-opacity="0.10"/><rect x="81.9" y="211.4" width="1.0" height="1.7" fill="#000" fill-opacity="0.19"/><rect x="83.2" y="213.9" width="0.9" height="1.5" fill="#000" fill-opacity="0.07"/><rect x="82.6" y="221.1" width="1.8" height="1.8" fill="#000" fill-opacity="0.17"/><rect x="81.7" y="223.1" width="1.6" height="1.9" fill="#000" fill-opacity="0.12"/><rect x="81.9" y="225.4" width="1.4" height="2.5" fill="#000" fill-opacity="0.17"/><rect x="83.0" y="228.6" width="1.9" height="2.7" fill="#000" fill-opacity="0.12"/><rect x="82.7" y="231.7" width="2.0" height="1.8" fill="#000" fill-opacity="0.17"/><rect x="129.8" y="169" width="2.5" height="62" fill="#000" fill-opacity="0.05"/><rect x="130.8" y="171.8" width="1.4" height="2.1" fill="#000" fill-opacity="0.08"/><rect x="129.9" y="179.0" width="0.8" height="1.9" fill="#000" fill-opacity="0.10"/><rect x="131.2" y="181.3" width="0.8" height="3.0" fill="#000" fill-opacity="0.13"/><rect x="131.0" y="185.3" width="1.0" height="2.6" fill="#000" fill-opacity="0.12"/><rect x="130.0" y="188.1" width="0.8" height="2.4" fill="#000" fill-opacity="0.08"/><rect x="129.8" y="194.6" width="1.0" height="1.2" fill="#000" fill-opacity="0.09"/><rect x="130.4" y="197.0" width="1.4" height="1.9" fill="#000" fill-opacity="0.05"/><rect x="130.6" y="199.7" width="1.1" height="1.5" fill="#000" fill-opacity="0.07"/><rect x="129.6" y="201.8" width="1.5" height="2.3" fill="#000" fill-opacity="0.10"/><rect x="130.1" y="211.9" width="1.4" height="1.5" fill="#000" fill-opacity="0.12"/><rect x="129.8" y="227.1" width="0.9" height="1.6" fill="#000" fill-opacity="0.14"/><rect x="9.8" y="194" width="2.5" height="38" fill="#000" fill-opacity="0.05"/><rect x="10.9" y="194.0" width="1.0" height="2.5" fill="#000" fill-opacity="0.14"/><rect x="10.7" y="197.0" width="1.4" height="1.2" fill="#000" fill-opacity="0.14"/><rect x="11.1" y="198.8" width="1.1" height="2.9" fill="#000" fill-opacity="0.10"/><rect x="10.9" y="203.0" width="1.2" height="2.5" fill="#000" fill-opacity="0.10"/><rect x="10.1" y="207.5" width="1.3" height="2.2" fill="#000" fill-opacity="0.05"/><rect x="10.6" y="216.2" width="1.4" height="2.3" fill="#000" fill-opacity="0.15"/><rect x="91.8" y="199" width="2.5" height="33" fill="#000" fill-opacity="0.05"/><rect x="93.0" y="216.2" width="1.2" height="1.7" fill="#000" fill-opacity="0.14"/><rect x="92.0" y="223.0" width="0.9" height="2.0" fill="#000" fill-opacity="0.13"/><rect x="92.4" y="225.0" width="1.4" height="2.1" fill="#000" fill-opacity="0.11"/><rect x="100.8" y="122" width="3.5" height="29" fill="#000" fill-opacity="0.16"/><rect x="102.8" y="124.1" width="1.4" height="1.9" fill="#000" fill-opacity="0.43"/><rect x="101.1" y="129.0" width="1.0" height="2.8" fill="#000" fill-opacity="0.25"/><rect x="102.3" y="132.3" width="2.4" height="2.4" fill="#000" fill-opacity="0.45"/><rect x="101.5" y="135.1" width="1.0" height="2.3" fill="#000" fill-opacity="0.36"/><rect x="102.4" y="139.7" width="1.8" height="2.3" fill="#000" fill-opacity="0.37"/><rect x="101.7" y="143.2" width="1.9" height="1.1" fill="#000" fill-opacity="0.40"/><rect x="102.0" y="145.4" width="1.6" height="1.8" fill="#000" fill-opacity="0.29"/><rect x="101.0" y="148.7" width="2.0" height="2.0" fill="#000" fill-opacity="0.22"/><rect x="102.2" y="150.8" width="1.1" height="1.9" fill="#000" fill-opacity="0.29"/><rect x="104.8" y="122" width="3.5" height="42" fill="#000" fill-opacity="0.16"/><rect x="104.3" y="122.0" width="2.5" height="2.5" fill="#000" fill-opacity="0.31"/><rect x="105.2" y="125.3" width="1.3" height="1.6" fill="#000" fill-opacity="0.23"/><rect x="106.8" y="127.4" width="1.2" height="1.8" fill="#000" fill-opacity="0.25"/><rect x="105.4" y="129.6" width="2.1" height="2.2" fill="#000" fill-opacity="0.35"/><rect x="105.3" y="132.5" width="2.4" height="1.6" fill="#000" fill-opacity="0.49"/><rect x="106.6" y="134.5" width="1.6" height="1.7" fill="#000" fill-opacity="0.40"/><rect x="106.7" y="136.9" width="1.5" height="2.1" fill="#000" fill-opacity="0.42"/><rect x="104.9" y="140.1" width="1.8" height="1.7" fill="#000" fill-opacity="0.37"/><rect x="107.1" y="142.0" width="1.3" height="2.0" fill="#000" fill-opacity="0.40"/><rect x="105.0" y="144.1" width="2.2" height="3.0" fill="#000" fill-opacity="0.48"/><rect x="104.5" y="148.2" width="1.7" height="1.4" fill="#000" fill-opacity="0.24"/><rect x="105.6" y="150.1" width="1.8" height="1.9" fill="#000" fill-opacity="0.30"/><rect x="105.5" y="155.4" width="2.2" height="1.6" fill="#000" fill-opacity="0.41"/><rect x="106.7" y="157.5" width="1.9" height="2.6" fill="#000" fill-opacity="0.38"/><rect x="106.0" y="161.3" width="0.8" height="2.5" fill="#000" fill-opacity="0.49"/><rect x="108.5" y="173" width="3.0" height="12" fill="#000" fill-opacity="0.10"/><rect x="109.3" y="173.0" width="1.7" height="2.6" fill="#000" fill-opacity="0.18"/><rect x="108.3" y="179.0" width="1.9" height="2.4" fill="#000" fill-opacity="0.15"/><rect x="109.9" y="181.8" width="1.3" height="1.3" fill="#000" fill-opacity="0.29"/><rect x="108.9" y="184.4" width="1.0" height="2.5" fill="#000" fill-opacity="0.20"/><rect x="160.8" y="64" width="4.5" height="60" fill="#000" fill-opacity="0.06"/><rect x="163.8" y="64.0" width="1.3" height="2.1" fill="#000" fill-opacity="0.11"/><rect x="161.5" y="70.1" width="1.3" height="2.4" fill="#000" fill-opacity="0.14"/><rect x="161.2" y="72.8" width="1.6" height="2.9" fill="#000" fill-opacity="0.17"/><rect x="161.3" y="79.1" width="2.6" height="1.5" fill="#000" fill-opacity="0.22"/><rect x="160.9" y="87.3" width="2.1" height="1.9" fill="#000" fill-opacity="0.14"/><rect x="162.1" y="90.6" width="2.5" height="2.4" fill="#000" fill-opacity="0.09"/><rect x="162.2" y="94.0" width="0.9" height="2.1" fill="#000" fill-opacity="0.17"/><rect x="163.4" y="96.2" width="2.3" height="2.5" fill="#000" fill-opacity="0.12"/><rect x="164.0" y="100.2" width="1.3" height="2.8" fill="#000" fill-opacity="0.10"/><rect x="161.9" y="103.9" width="2.4" height="2.8" fill="#000" fill-opacity="0.17"/><rect x="160.3" y="108.1" width="3.2" height="2.8" fill="#000" fill-opacity="0.21"/><rect x="163.0" y="112.4" width="3.3" height="1.8" fill="#000" fill-opacity="0.21"/><rect x="164.1" y="115.6" width="1.1" height="1.0" fill="#000" fill-opacity="0.10"/><rect x="162.6" y="118.1" width="3.3" height="2.1" fill="#000" fill-opacity="0.13"/><rect x="161.1" y="120.4" width="2.0" height="1.2" fill="#000" fill-opacity="0.08"/><rect x="160.4" y="122.8" width="2.8" height="2.6" fill="#000" fill-opacity="0.20"/><rect x="148.9" y="154" width="2.2" height="75" fill="#000" fill-opacity="0.05"/><rect x="149.4" y="156.8" width="0.9" height="2.3" fill="#000" fill-opacity="0.07"/><rect x="149.5" y="166.4" width="1.0" height="1.2" fill="#000" fill-opacity="0.14"/><rect x="149.2" y="168.7" width="1.2" height="1.6" fill="#000" fill-opacity="0.11"/><rect x="149.6" y="170.7" width="1.1" height="1.3" fill="#000" fill-opacity="0.09"/><rect x="149.9" y="175.7" width="1.1" height="1.4" fill="#000" fill-opacity="0.06"/><rect x="149.0" y="177.8" width="1.0" height="2.4" fill="#000" fill-opacity="0.10"/><rect x="149.6" y="181.0" width="0.9" height="2.1" fill="#000" fill-opacity="0.06"/><rect x="149.9" y="183.4" width="1.0" height="2.2" fill="#000" fill-opacity="0.10"/><rect x="149.9" y="186.4" width="1.0" height="1.9" fill="#000" fill-opacity="0.12"/><rect x="150.2" y="192.4" width="0.8" height="1.1" fill="#000" fill-opacity="0.14"/><rect x="149.8" y="193.6" width="1.0" height="2.9" fill="#000" fill-opacity="0.13"/><rect x="149.3" y="197.9" width="1.2" height="2.3" fill="#000" fill-opacity="0.14"/><rect x="149.0" y="209.1" width="0.8" height="2.5" fill="#000" fill-opacity="0.08"/><rect x="150.1" y="215.8" width="0.9" height="1.5" fill="#000" fill-opacity="0.12"/><rect x="149.9" y="217.5" width="1.1" height="2.6" fill="#000" fill-opacity="0.05"/><rect x="149.7" y="220.4" width="1.0" height="1.2" fill="#000" fill-opacity="0.05"/><rect x="150.0" y="222.7" width="0.9" height="1.8" fill="#000" fill-opacity="0.06"/><rect x="139.9" y="164" width="2.2" height="67" fill="#000" fill-opacity="0.04"/><rect x="140.8" y="164.0" width="0.9" height="1.6" fill="#000" fill-opacity="0.07"/><rect x="140.8" y="178.2" width="1.0" height="1.8" fill="#000" fill-opacity="0.08"/><rect x="140.2" y="188.4" width="0.9" height="2.1" fill="#000" fill-opacity="0.10"/><rect x="140.1" y="191.9" width="1.1" height="2.7" fill="#000" fill-opacity="0.07"/><rect x="141.0" y="203.9" width="1.2" height="2.9" fill="#000" fill-opacity="0.06"/><rect x="140.1" y="208.3" width="1.0" height="2.0" fill="#000" fill-opacity="0.11"/><rect x="140.3" y="211.1" width="1.0" height="2.6" fill="#000" fill-opacity="0.07"/><rect x="140.4" y="214.5" width="1.2" height="2.0" fill="#000" fill-opacity="0.11"/><rect x="141.1" y="220.4" width="0.9" height="1.4" fill="#000" fill-opacity="0.09"/><rect x="140.9" y="222.5" width="1.0" height="1.3" fill="#000" fill-opacity="0.08"/><rect x="141.0" y="224.8" width="1.1" height="2.4" fill="#000" fill-opacity="0.09"/><rect x="133.2" y="186.7" width="0.8" height="1.2" fill="#000" fill-opacity="0.21"/><rect x="138.7" y="127.5" width="1.4" height="3.3" fill="#000" fill-opacity="0.21"/><rect x="146.7" y="221.7" width="1.5" height="1.0" fill="#000" fill-opacity="0.11"/><rect x="138.4" y="176.6" width="1.5" height="2.8" fill="#000" fill-opacity="0.14"/><rect x="114.6" y="236.9" width="1.5" height="1.0" fill="#000" fill-opacity="0.09"/><rect x="4.5" y="122.2" width="1.7" height="3.4" fill="#000" fill-opacity="0.20"/><rect x="23.0" y="133.2" width="1.0" height="1.3" fill="#000" fill-opacity="0.08"/><rect x="168.9" y="188.7" width="1.4" height="1.8" fill="#000" fill-opacity="0.11"/><rect x="117.4" y="203.4" width="1.1" height="4.0" fill="#000" fill-opacity="0.18"/><rect x="135.7" y="142.9" width="1.9" height="3.6" fill="#000" fill-opacity="0.06"/><rect x="114.9" y="206.5" width="0.8" height="1.2" fill="#000" fill-opacity="0.07"/><rect x="90.4" y="192.1" width="1.6" height="3.4" fill="#000" fill-opacity="0.21"/><rect x="109.8" y="232.6" width="1.1" height="1.1" fill="#000" fill-opacity="0.21"/><rect x="99.0" y="136.7" width="0.9" height="1.1" fill="#000" fill-opacity="0.23"/><rect x="117.1" y="134.9" width="2.1" height="1.1" fill="#000" fill-opacity="0.10"/><rect x="121.9" y="124.8" width="1.8" height="3.3" fill="#000" fill-opacity="0.12"/><rect x="34.5" y="233.7" width="2.0" height="1.7" fill="#000" fill-opacity="0.12"/><rect x="69.3" y="135.3" width="1.0" height="3.3" fill="#000" fill-opacity="0.24"/><rect x="104.2" y="161.6" width="0.9" height="3.9" fill="#000" fill-opacity="0.13"/><rect x="71.2" y="144.4" width="2.1" height="3.3" fill="#000" fill-opacity="0.12"/><rect x="7.1" y="154.3" width="2.2" height="1.8" fill="#000" fill-opacity="0.14"/><rect x="194.9" y="209.1" width="1.8" height="2.3" fill="#000" fill-opacity="0.17"/><rect x="128.4" y="233.2" width="1.8" height="3.4" fill="#000" fill-opacity="0.06"/><rect x="147.6" y="228.3" width="1.8" height="2.9" fill="#000" fill-opacity="0.10"/><rect x="2.1" y="231.8" width="1.3" height="1.9" fill="#000" fill-opacity="0.09"/><rect x="39.6" y="230.0" width="1.6" height="2.3" fill="#000" fill-opacity="0.12"/><rect x="73.9" y="236.3" width="1.6" height="1.3" fill="#000" fill-opacity="0.10"/><rect x="61.1" y="205.8" width="0.9" height="2.2" fill="#000" fill-opacity="0.22"/><rect x="202.5" y="133.9" width="1.0" height="2.7" fill="#000" fill-opacity="0.12"/><rect x="63.0" y="229.5" width="0.9" height="2.5" fill="#000" fill-opacity="0.13"/><rect x="100.8" y="201.7" width="1.2" height="1.2" fill="#000" fill-opacity="0.09"/><rect x="123.3" y="175.6" width="0.9" height="1.6" fill="#000" fill-opacity="0.10"/><rect x="69.4" y="126.9" width="1.9" height="2.9" fill="#000" fill-opacity="0.11"/><rect x="169.0" y="211.4" width="2.2" height="3.6" fill="#000" fill-opacity="0.07"/><rect x="196.1" y="212.9" width="1.2" height="1.6" fill="#000" fill-opacity="0.23"/><rect x="61.0" y="123.7" width="1.5" height="3.1" fill="#000" fill-opacity="0.16"/><rect x="78.5" y="220.7" width="1.4" height="3.4" fill="#000" fill-opacity="0.06"/><rect x="123.0" y="183.9" width="1.8" height="2.6" fill="#000" fill-opacity="0.15"/><rect x="96.1" y="126.2" width="1.4" height="3.1" fill="#000" fill-opacity="0.10"/><rect x="169.7" y="166.1" width="1.4" height="3.4" fill="#000" fill-opacity="0.14"/><rect x="50.9" y="174.5" width="1.8" height="3.0" fill="#000" fill-opacity="0.20"/><rect x="205.1" y="233.9" width="1.4" height="2.4" fill="#000" fill-opacity="0.14"/><rect x="143.5" y="131.5" width="1.9" height="2.6" fill="#000" fill-opacity="0.11"/><rect x="111.6" y="135.5" width="0.9" height="2.9" fill="#000" fill-opacity="0.19"/><rect x="74.1" y="171.1" width="0.9" height="2.9" fill="#000" fill-opacity="0.24"/><rect x="83.3" y="168.3" width="2.2" height="3.3" fill="#000" fill-opacity="0.13"/><rect x="54.3" y="236.8" width="1.5" height="2.5" fill="#000" fill-opacity="0.16"/><rect x="92.8" y="182.4" width="1.9" height="2.2" fill="#000" fill-opacity="0.16"/><rect x="72.1" y="192.0" width="0.9" height="1.1" fill="#000" fill-opacity="0.12"/><rect x="24.9" y="124.8" width="1.0" height="3.8" fill="#000" fill-opacity="0.10"/><rect x="43.6" y="197.6" width="1.5" height="2.4" fill="#000" fill-opacity="0.13"/><rect x="66.7" y="165.5" width="1.9" height="1.9" fill="#000" fill-opacity="0.06"/><rect x="134.5" y="142.7" width="1.0" height="3.0" fill="#000" fill-opacity="0.24"/><rect x="36.9" y="220.6" width="1.6" height="1.5" fill="#000" fill-opacity="0.23"/><rect x="84.4" y="221.7" width="1.7" height="1.6" fill="#000" fill-opacity="0.13"/><rect x="127.5" y="236.2" width="1.6" height="1.6" fill="#000" fill-opacity="0.12"/><rect x="43.4" y="164.4" width="1.9" height="3.3" fill="#000" fill-opacity="0.05"/><rect x="180.6" y="232.2" width="1.3" height="1.6" fill="#000" fill-opacity="0.13"/><rect x="178.7" y="218.8" width="1.7" height="2.6" fill="#000" fill-opacity="0.16"/><rect x="121.9" y="177.5" width="2.0" height="2.0" fill="#000" fill-opacity="0.16"/><rect x="146.4" y="148.2" width="1.7" height="1.9" fill="#000" fill-opacity="0.06"/><rect x="25.3" y="229.9" width="1.1" height="1.9" fill="#000" fill-opacity="0.18"/><rect x="87.2" y="190.7" width="1.3" height="1.4" fill="#000" fill-opacity="0.08"/><rect x="143.8" y="174.2" width="2.2" height="2.9" fill="#000" fill-opacity="0.15"/><rect x="29.9" y="193.4" width="1.4" height="1.9" fill="#000" fill-opacity="0.05"/><rect x="3.0" y="208.8" width="1.9" height="1.4" fill="#000" fill-opacity="0.23"/><rect x="103.0" y="191.4" width="1.4" height="3.1" fill="#000" fill-opacity="0.21"/><rect x="18.0" y="193.5" width="1.9" height="1.1" fill="#000" fill-opacity="0.10"/><rect x="111.7" y="217.6" width="1.4" height="1.5" fill="#000" fill-opacity="0.19"/><rect x="114.2" y="155.4" width="1.0" height="1.3" fill="#000" fill-opacity="0.20"/><rect x="76.6" y="146.7" width="0.9" height="3.5" fill="#000" fill-opacity="0.18"/><rect x="204.9" y="186.2" width="2.0" height="1.3" fill="#000" fill-opacity="0.19"/><rect x="206.9" y="215.3" width="1.3" height="2.3" fill="#000" fill-opacity="0.20"/><rect x="205.8" y="199.6" width="1.1" height="3.3" fill="#000" fill-opacity="0.20"/><rect x="73.2" y="180.7" width="1.7" height="3.1" fill="#000" fill-opacity="0.07"/><rect x="43.6" y="229.5" width="0.9" height="1.6" fill="#000" fill-opacity="0.11"/><rect x="112.0" y="217.0" width="1.8" height="2.0" fill="#000" fill-opacity="0.10"/><rect x="177.8" y="218.3" width="1.8" height="4.0" fill="#000" fill-opacity="0.06"/><rect x="162.9" y="124.6" width="2.2" height="3.8" fill="#000" fill-opacity="0.21"/><rect x="179.4" y="230.4" width="1.8" height="1.7" fill="#000" fill-opacity="0.21"/><rect x="140.3" y="156.1" width="1.6" height="2.5" fill="#000" fill-opacity="0.09"/><rect x="94.1" y="202.5" width="2.0" height="2.9" fill="#000" fill-opacity="0.06"/><rect x="58.3" y="190.1" width="1.3" height="3.8" fill="#000" fill-opacity="0.23"/><rect x="1.5" y="212.2" width="1.8" height="3.3" fill="#000" fill-opacity="0.19"/><rect x="137.8" y="197.2" width="0.9" height="2.1" fill="#000" fill-opacity="0.15"/><rect x="89.5" y="223.0" width="1.2" height="1.6" fill="#000" fill-opacity="0.21"/><rect x="120.1" y="211.1" width="1.5" height="2.7" fill="#000" fill-opacity="0.11"/><rect x="11.0" y="167.6" width="1.9" height="1.3" fill="#000" fill-opacity="0.13"/><rect x="177.7" y="230.6" width="0.8" height="2.3" fill="#000" fill-opacity="0.23"/><rect x="142.8" y="224.3" width="1.7" height="1.4" fill="#000" fill-opacity="0.07"/><rect x="57.4" y="129.5" width="1.2" height="3.0" fill="#000" fill-opacity="0.11"/><rect x="35.1" y="134.1" width="1.2" height="2.2" fill="#000" fill-opacity="0.18"/><rect x="136.0" y="221.5" width="0.8" height="3.1" fill="#000" fill-opacity="0.14"/><rect x="47.6" y="230.0" width="0.8" height="3.0" fill="#000" fill-opacity="0.18"/><rect x="204.6" y="147.7" width="1.0" height="2.3" fill="#000" fill-opacity="0.05"/><rect x="151.5" y="206.1" width="1.2" height="1.3" fill="#000" fill-opacity="0.22"/><rect x="160.3" y="229.7" width="1.0" height="3.3" fill="#000" fill-opacity="0.24"/><rect x="110.3" y="229.2" width="1.7" height="1.0" fill="#000" fill-opacity="0.13"/><rect x="130.4" y="161.8" width="1.4" height="1.5" fill="#000" fill-opacity="0.18"/><rect x="18.9" y="141.1" width="1.9" height="1.3" fill="#000" fill-opacity="0.16"/><rect x="199.4" y="206.0" width="1.0" height="1.9" fill="#000" fill-opacity="0.10"/><rect x="115.0" y="233.3" width="1.7" height="2.8" fill="#000" fill-opacity="0.20"/><rect x="175.7" y="166.4" width="1.2" height="3.0" fill="#000" fill-opacity="0.14"/><rect x="155.1" y="190.9" width="0.9" height="1.9" fill="#000" fill-opacity="0.22"/><rect x="102.9" y="126.0" width="1.5" height="1.3" fill="#000" fill-opacity="0.16"/><rect x="202.4" y="188.5" width="2.1" height="4.0" fill="#000" fill-opacity="0.07"/><rect x="118.1" y="140.9" width="1.8" height="2.1" fill="#000" fill-opacity="0.19"/><rect x="159.7" y="126.0" width="0.9" height="1.1" fill="#000" fill-opacity="0.09"/><rect x="13.5" y="235.7" width="1.5" height="3.4" fill="#000" fill-opacity="0.17"/><rect x="86.6" y="192.0" width="0.9" height="3.1" fill="#000" fill-opacity="0.15"/><rect x="58.2" y="176.9" width="1.5" height="1.9" fill="#000" fill-opacity="0.08"/><rect x="111.5" y="149.1" width="1.7" height="2.2" fill="#000" fill-opacity="0.21"/><rect x="14.6" y="167.8" width="1.8" height="3.1" fill="#000" fill-opacity="0.21"/><rect x="18.8" y="234.8" width="1.4" height="2.3" fill="#000" fill-opacity="0.16"/><rect x="153.8" y="214.1" width="1.0" height="3.2" fill="#000" fill-opacity="0.18"/><rect x="34.7" y="164.9" width="1.5" height="3.9" fill="#000" fill-opacity="0.20"/><rect x="35.4" y="162.1" width="1.9" height="1.4" fill="#000" fill-opacity="0.09"/><rect x="159.9" y="136.9" width="1.9" height="1.1" fill="#000" fill-opacity="0.09"/><rect x="147.7" y="234.5" width="0.9" height="2.7" fill="#000" fill-opacity="0.13"/><rect x="103.9" y="208.6" width="1.3" height="2.7" fill="#000" fill-opacity="0.09"/><rect x="119.2" y="232.1" width="1.1" height="3.2" fill="#000" fill-opacity="0.14"/><rect x="178.8" y="235.5" width="1.5" height="1.7" fill="#000" fill-opacity="0.12"/><rect x="192.8" y="228.7" width="1.6" height="3.6" fill="#000" fill-opacity="0.22"/><rect x="87.4" y="159.2" width="1.4" height="2.0" fill="#000" fill-opacity="0.18"/><rect x="17.0" y="217.9" width="1.5" height="2.1" fill="#000" fill-opacity="0.22"/><rect x="166.7" y="226.3" width="2.1" height="3.9" fill="#000" fill-opacity="0.05"/><rect x="59.2" y="196.4" width="1.3" height="3.5" fill="#000" fill-opacity="0.15"/><rect x="42.3" y="236.9" width="1.2" height="2.7" fill="#000" fill-opacity="0.16"/><rect x="122.9" y="196.6" width="1.9" height="2.5" fill="#000" fill-opacity="0.08"/><rect x="157.7" y="134.7" width="0.8" height="1.7" fill="#000" fill-opacity="0.12"/><rect x="72.4" y="221.6" width="2.0" height="3.5" fill="#000" fill-opacity="0.23"/><rect x="136.4" y="237.0" width="1.8" height="3.5" fill="#000" fill-opacity="0.06"/><rect x="50.1" y="188.3" width="0.9" height="2.5" fill="#000" fill-opacity="0.24"/><rect x="20.2" y="163.4" width="2.1" height="3.8" fill="#000" fill-opacity="0.14"/><rect x="77.7" y="165.0" width="0.9" height="3.9" fill="#000" fill-opacity="0.06"/><rect x="169.9" y="229.9" width="1.6" height="1.2" fill="#000" fill-opacity="0.13"/><rect x="49.8" y="124.4" width="1.2" height="1.8" fill="#000" fill-opacity="0.20"/><rect x="152.5" y="165.0" width="1.2" height="2.0" fill="#000" fill-opacity="0.05"/><rect x="161.7" y="224.3" width="1.0" height="2.8" fill="#000" fill-opacity="0.07"/><rect x="84.7" y="196.3" width="2.2" height="2.6" fill="#000" fill-opacity="0.08"/><rect x="55.6" y="214.2" width="1.0" height="1.4" fill="#000" fill-opacity="0.18"/><rect x="144.6" y="146.3" width="2.0" height="1.1" fill="#000" fill-opacity="0.11"/><rect x="52.1" y="232.9" width="1.5" height="2.1" fill="#000" fill-opacity="0.18"/><rect x="205.1" y="219.0" width="1.4" height="1.1" fill="#000" fill-opacity="0.13"/><rect x="52.5" y="158.1" width="1.9" height="2.4" fill="#000" fill-opacity="0.07"/><rect x="172.1" y="236.8" width="1.0" height="3.9" fill="#000" fill-opacity="0.20"/><rect x="130.8" y="207.3" width="1.6" height="2.9" fill="#000" fill-opacity="0.09"/><rect x="5.5" y="148.4" width="2.1" height="1.2" fill="#000" fill-opacity="0.13"/><rect x="187.4" y="230.3" width="1.3" height="3.5" fill="#000" fill-opacity="0.05"/><rect x="35.6" y="196.9" width="2.0" height="2.7" fill="#000" fill-opacity="0.12"/><rect x="141.7" y="236.1" width="1.1" height="1.5" fill="#000" fill-opacity="0.08"/><rect x="183.0" y="217.1" width="1.7" height="1.1" fill="#000" fill-opacity="0.09"/><rect x="85.9" y="215.5" width="0.9" height="2.7" fill="#000" fill-opacity="0.10"/><rect x="42.1" y="229.7" width="1.5" height="3.7" fill="#000" fill-opacity="0.17"/><rect x="164.7" y="150.0" width="1.9" height="4.0" fill="#000" fill-opacity="0.11"/><rect x="100.8" y="186.4" width="1.5" height="3.7" fill="#000" fill-opacity="0.12"/><rect x="66.7" y="226.3" width="2.1" height="1.7" fill="#000" fill-opacity="0.20"/><rect x="205.3" y="234.8" width="1.9" height="2.6" fill="#000" fill-opacity="0.24"/><rect x="21.6" y="122.8" width="1.2" height="3.0" fill="#000" fill-opacity="0.20"/><rect x="12.5" y="132.0" width="1.1" height="4.0" fill="#000" fill-opacity="0.21"/><rect x="74.1" y="150.7" width="2.0" height="3.5" fill="#000" fill-opacity="0.08"/><rect x="167.1" y="180.0" width="2.1" height="3.1" fill="#000" fill-opacity="0.05"/><rect x="196.2" y="165.0" width="1.6" height="2.7" fill="#000" fill-opacity="0.08"/><rect x="182.6" y="120.5" width="1.2" height="2.5" fill="#000" fill-opacity="0.14"/><rect x="48.9" y="232.9" width="1.5" height="1.7" fill="#000" fill-opacity="0.04"/><rect x="42.5" y="131.9" width="1.8" height="1.4" fill="#000" fill-opacity="0.22"/><rect x="67.7" y="143.5" width="1.6" height="1.1" fill="#000" fill-opacity="0.22"/><rect x="175.4" y="154.2" width="2.1" height="3.6" fill="#000" fill-opacity="0.11"/><rect x="82.5" y="128.0" width="1.2" height="1.3" fill="#000" fill-opacity="0.07"/><rect x="196.4" y="228.1" width="2.1" height="3.4" fill="#000" fill-opacity="0.17"/><rect x="200.6" y="226.7" width="2.1" height="3.1" fill="#000" fill-opacity="0.20"/><rect x="122.3" y="222.5" width="1.2" height="1.5" fill="#000" fill-opacity="0.18"/><rect x="151.1" y="230.4" width="2.1" height="3.8" fill="#000" fill-opacity="0.12"/><rect x="199.8" y="119.4" width="1.6" height="1.1" fill="#000" fill-opacity="0.22"/><rect x="46.5" y="123.9" width="2.1" height="2.7" fill="#000" fill-opacity="0.07"/><rect x="50.0" y="158.5" width="1.0" height="3.9" fill="#000" fill-opacity="0.22"/><rect x="147.0" y="233.0" width="2.0" height="2.9" fill="#000" fill-opacity="0.13"/><rect x="52.4" y="218.5" width="1.2" height="1.2" fill="#000" fill-opacity="0.06"/><rect x="80.5" y="237.0" width="2.2" height="3.2" fill="#000" fill-opacity="0.22"/><rect x="79.0" y="193.0" width="0.9" height="2.6" fill="#000" fill-opacity="0.14"/><rect x="135.1" y="140.4" width="1.0" height="3.1" fill="#000" fill-opacity="0.05"/><rect x="61.8" y="143.3" width="2.1" height="2.0" fill="#000" fill-opacity="0.05"/><rect x="78.3" y="227.1" width="1.6" height="3.2" fill="#000" fill-opacity="0.22"/><rect x="123.4" y="232.7" width="1.5" height="2.8" fill="#000" fill-opacity="0.05"/><rect x="35.0" y="127.9" width="1.0" height="3.7" fill="#000" fill-opacity="0.06"/><rect x="40.1" y="224.1" width="1.8" height="3.1" fill="#000" fill-opacity="0.19"/><rect x="59.0" y="218.5" width="0.9" height="1.7" fill="#000" fill-opacity="0.15"/><rect x="32.6" y="144.2" width="1.4" height="2.1" fill="#000" fill-opacity="0.10"/><rect x="124.6" y="170.5" width="0.8" height="1.6" fill="#000" fill-opacity="0.07"/><rect x="17.9" y="215.9" width="1.2" height="3.5" fill="#000" fill-opacity="0.12"/><rect x="137.2" y="193.5" width="1.6" height="1.3" fill="#000" fill-opacity="0.08"/><rect x="77.1" y="137.1" width="1.2" height="2.3" fill="#000" fill-opacity="0.13"/><rect x="56.3" y="222.2" width="1.9" height="1.2" fill="#000" fill-opacity="0.17"/><rect x="71.8" y="233.2" width="2.2" height="2.6" fill="#000" fill-opacity="0.16"/><rect x="174.2" y="185.2" width="1.4" height="3.5" fill="#000" fill-opacity="0.15"/><rect x="98.8" y="140.0" width="1.5" height="3.6" fill="#000" fill-opacity="0.06"/><rect x="148.1" y="134.3" width="2.1" height="2.5" fill="#000" fill-opacity="0.20"/><rect x="128.8" y="168.3" width="1.9" height="1.4" fill="#000" fill-opacity="0.07"/><rect x="201.3" y="121.1" width="1.0" height="3.4" fill="#000" fill-opacity="0.12"/><rect x="90.7" y="120.4" width="1.7" height="4.0" fill="#000" fill-opacity="0.21"/><rect x="188.6" y="219.2" width="0.9" height="3.7" fill="#000" fill-opacity="0.12"/><rect x="68.2" y="204.4" width="1.4" height="1.8" fill="#000" fill-opacity="0.21"/><rect x="129.3" y="152.3" width="1.4" height="2.6" fill="#000" fill-opacity="0.12"/><rect x="122.1" y="228.8" width="2.1" height="3.3" fill="#000" fill-opacity="0.22"/><rect x="21.8" y="184.0" width="1.5" height="1.9" fill="#000" fill-opacity="0.11"/><rect x="79.9" y="202.9" width="1.7" height="2.5" fill="#000" fill-opacity="0.05"/><rect x="30.6" y="217.5" width="1.8" height="2.8" fill="#000" fill-opacity="0.05"/><rect x="69.3" y="136.4" width="1.8" height="1.7" fill="#000" fill-opacity="0.22"/><rect x="5.2" y="135.2" width="1.2" height="3.5" fill="#000" fill-opacity="0.10"/><rect x="144.4" y="193.1" width="2.0" height="1.3" fill="#000" fill-opacity="0.07"/><rect x="92.3" y="122.8" width="1.2" height="3.5" fill="#000" fill-opacity="0.12"/><rect x="39.7" y="172.8" width="2.0" height="1.6" fill="#000" fill-opacity="0.19"/><rect x="179.6" y="156.4" width="1.5" height="3.5" fill="#000" fill-opacity="0.07"/><rect x="105.4" y="213.9" width="2.0" height="1.4" fill="#000" fill-opacity="0.22"/><rect x="40.7" y="236.2" width="2.0" height="3.5" fill="#000" fill-opacity="0.09"/><rect x="190.1" y="197.5" width="1.2" height="3.1" fill="#000" fill-opacity="0.20"/><rect x="131.9" y="191.5" width="0.8" height="1.4" fill="#000" fill-opacity="0.11"/><rect x="37.6" y="179.8" width="1.6" height="3.6" fill="#000" fill-opacity="0.11"/><rect x="185.3" y="227.6" width="1.8" height="3.2" fill="#000" fill-opacity="0.10"/><rect x="34.6" y="205.7" width="2.2" height="2.7" fill="#000" fill-opacity="0.21"/><rect x="140.6" y="172.5" width="1.4" height="1.8" fill="#000" fill-opacity="0.04"/><rect x="159.1" y="153.3" width="2.1" height="1.0" fill="#000" fill-opacity="0.17"/><rect x="2.7" y="178.9" width="1.9" height="1.8" fill="#000" fill-opacity="0.10"/><rect x="133.4" y="123.9" width="1.3" height="2.3" fill="#000" fill-opacity="0.11"/><rect x="97.1" y="219.8" width="2.0" height="3.0" fill="#000" fill-opacity="0.12"/><rect x="106.4" y="232.1" width="2.0" height="3.0" fill="#000" fill-opacity="0.11"/><rect x="126.5" y="172.5" width="1.0" height="1.9" fill="#000" fill-opacity="0.05"/><rect x="133.0" y="120.4" width="1.2" height="3.6" fill="#000" fill-opacity="0.18"/><rect x="62.6" y="136.0" width="1.9" height="1.4" fill="#000" fill-opacity="0.22"/><rect x="166.3" y="149.5" width="1.7" height="2.8" fill="#000" fill-opacity="0.18"/><rect x="136.0" y="162.0" width="1.2" height="4.0" fill="#000" fill-opacity="0.12"/><rect x="8.3" y="205.5" width="1.6" height="3.1" fill="#000" fill-opacity="0.08"/><rect x="46.8" y="161.2" width="1.9" height="2.6" fill="#000" fill-opacity="0.22"/><rect x="105.5" y="169.1" width="2.0" height="3.5" fill="#000" fill-opacity="0.22"/><rect x="21.1" y="226.2" width="1.2" height="1.4" fill="#000" fill-opacity="0.20"/><rect x="38.7" y="155.9" width="1.3" height="3.0" fill="#000" fill-opacity="0.06"/><rect x="154.3" y="209.2" width="1.9" height="1.9" fill="#000" fill-opacity="0.11"/><rect x="61.6" y="219.0" width="1.5" height="3.6" fill="#000" fill-opacity="0.21"/><rect x="195.5" y="181.2" width="2.0" height="1.2" fill="#000" fill-opacity="0.14"/><rect x="79.6" y="139.9" width="0.9" height="1.9" fill="#000" fill-opacity="0.21"/><rect x="42.3" y="229.6" width="1.6" height="2.2" fill="#000" fill-opacity="0.22"/><rect x="66.2" y="197.3" width="1.9" height="3.1" fill="#000" fill-opacity="0.14"/><rect x="37.4" y="174.8" width="0.8" height="2.9" fill="#000" fill-opacity="0.09"/><rect x="35.7" y="156.1" width="1.5" height="3.3" fill="#000" fill-opacity="0.19"/><rect x="127.6" y="233.1" width="1.4" height="2.9" fill="#000" fill-opacity="0.23"/><rect x="8.8" y="206.0" width="1.3" height="1.6" fill="#000" fill-opacity="0.04"/><rect x="172.6" y="212.7" width="1.7" height="1.6" fill="#000" fill-opacity="0.17"/><rect x="143.9" y="220.1" width="1.0" height="2.0" fill="#000" fill-opacity="0.12"/><rect x="35.4" y="180.6" width="1.2" height="3.5" fill="#000" fill-opacity="0.10"/><rect x="123.9" y="161.0" width="2.0" height="2.0" fill="#000" fill-opacity="0.24"/><rect x="186.7" y="210.5" width="1.1" height="2.1" fill="#000" fill-opacity="0.23"/><rect x="84.1" y="131.8" width="1.8" height="1.7" fill="#000" fill-opacity="0.07"/><rect x="122.5" y="160.1" width="1.3" height="1.5" fill="#000" fill-opacity="0.17"/><rect x="181.6" y="235.8" width="1.5" height="1.8" fill="#000" fill-opacity="0.05"/><rect x="137.4" y="119.4" width="0.8" height="3.0" fill="#000" fill-opacity="0.18"/><rect x="79.3" y="202.2" width="1.5" height="2.6" fill="#000" fill-opacity="0.07"/><rect x="130.8" y="165.8" width="1.7" height="1.9" fill="#000" fill-opacity="0.17"/><rect x="125.8" y="218.1" width="2.0" height="1.4" fill="#000" fill-opacity="0.06"/><rect x="25.3" y="162.4" width="0.9" height="1.3" fill="#000" fill-opacity="0.08"/><rect x="55.2" y="224.6" width="1.1" height="2.6" fill="#000" fill-opacity="0.18"/><rect x="9.1" y="215.5" width="1.1" height="2.5" fill="#000" fill-opacity="0.23"/><rect x="1.6" y="211.8" width="2.1" height="3.0" fill="#000" fill-opacity="0.21"/><rect x="31.7" y="169.5" width="1.5" height="1.3" fill="#000" fill-opacity="0.18"/><rect x="53.7" y="232.2" width="2.2" height="1.7" fill="#000" fill-opacity="0.10"/><rect x="21.6" y="196.5" width="0.9" height="1.5" fill="#000" fill-opacity="0.10"/><rect x="65.4" y="150.1" width="0.9" height="3.2" fill="#000" fill-opacity="0.19"/><rect x="176.5" y="235.4" width="1.0" height="3.0" fill="#000" fill-opacity="0.11"/><rect x="129.1" y="199.7" width="0.9" height="3.6" fill="#000" fill-opacity="0.20"/><rect x="83.6" y="226.0" width="1.2" height="3.9" fill="#000" fill-opacity="0.12"/><rect x="165.8" y="142.5" width="1.9" height="2.9" fill="#000" fill-opacity="0.06"/><rect x="13.1" y="165.6" width="1.0" height="3.8" fill="#000" fill-opacity="0.12"/><rect x="166.3" y="180.3" width="1.1" height="3.0" fill="#000" fill-opacity="0.12"/><rect x="6.9" y="208.8" width="2.0" height="3.1" fill="#000" fill-opacity="0.23"/><rect x="190.6" y="230.1" width="1.4" height="1.3" fill="#000" fill-opacity="0.05"/><rect x="65.7" y="218.9" width="1.7" height="3.1" fill="#000" fill-opacity="0.19"/><rect x="117.4" y="182.2" width="1.7" height="3.9" fill="#000" fill-opacity="0.11"/><rect x="145.3" y="189.2" width="1.7" height="1.3" fill="#000" fill-opacity="0.09"/><rect x="140.3" y="210.2" width="2.0" height="2.2" fill="#000" fill-opacity="0.15"/><rect x="12.2" y="120.5" width="1.0" height="2.9" fill="#000" fill-opacity="0.21"/><rect x="180.1" y="142.3" width="1.5" height="1.2" fill="#000" fill-opacity="0.09"/><rect x="11.4" y="123.4" width="1.7" height="1.7" fill="#000" fill-opacity="0.12"/><rect x="95.6" y="221.4" width="1.4" height="3.4" fill="#000" fill-opacity="0.21"/><rect x="25.5" y="198.6" width="1.7" height="2.5" fill="#000" fill-opacity="0.06"/><rect x="115.8" y="202.7" width="0.9" height="1.0" fill="#000" fill-opacity="0.16"/><rect x="63.7" y="176.4" width="1.1" height="2.5" fill="#000" fill-opacity="0.17"/><rect x="75.8" y="126.7" width="1.1" height="1.2" fill="#000" fill-opacity="0.13"/><rect x="128.7" y="184.4" width="1.7" height="2.4" fill="#000" fill-opacity="0.18"/><rect x="157.4" y="231.3" width="1.3" height="1.7" fill="#000" fill-opacity="0.21"/><rect x="61.1" y="124.4" width="1.8" height="2.6" fill="#000" fill-opacity="0.05"/><rect x="29.9" y="227.6" width="1.8" height="3.2" fill="#000" fill-opacity="0.06"/><rect x="39.6" y="177.6" width="1.4" height="3.8" fill="#000" fill-opacity="0.13"/><rect x="148.7" y="153.1" width="1.4" height="1.3" fill="#000" fill-opacity="0.23"/><rect x="122.3" y="144.6" width="1.4" height="3.3" fill="#000" fill-opacity="0.17"/><rect x="28.7" y="125.7" width="1.5" height="2.5" fill="#000" fill-opacity="0.05"/><rect x="173.8" y="129.1" width="1.5" height="2.4" fill="#000" fill-opacity="0.22"/><rect x="120.2" y="226.5" width="1.0" height="3.2" fill="#000" fill-opacity="0.12"/><rect x="182.8" y="179.0" width="1.3" height="2.5" fill="#000" fill-opacity="0.24"/><rect x="158.0" y="132.2" width="2.1" height="1.8" fill="#000" fill-opacity="0.23"/><rect x="28.5" y="197.9" width="1.8" height="2.2" fill="#000" fill-opacity="0.19"/><rect x="145.5" y="215.1" width="1.8" height="3.6" fill="#000" fill-opacity="0.23"/><rect x="42.4" y="174.6" width="1.2" height="2.9" fill="#000" fill-opacity="0.11"/><rect x="203.2" y="169.0" width="2.1" height="3.0" fill="#000" fill-opacity="0.14"/><rect x="67.4" y="165.9" width="1.3" height="1.3" fill="#000" fill-opacity="0.14"/><rect x="138.4" y="183.0" width="1.8" height="2.3" fill="#000" fill-opacity="0.21"/><rect x="175.5" y="216.5" width="1.5" height="3.4" fill="#000" fill-opacity="0.05"/><rect x="139.1" y="229.0" width="1.9" height="1.6" fill="#000" fill-opacity="0.07"/><rect x="52.6" y="216.4" width="1.8" height="3.5" fill="#000" fill-opacity="0.10"/><rect x="7.7" y="157.3" width="0.9" height="3.4" fill="#000" fill-opacity="0.21"/><rect x="179.2" y="159.3" width="1.6" height="3.2" fill="#000" fill-opacity="0.09"/><rect x="165.6" y="152.7" width="1.7" height="1.9" fill="#000" fill-opacity="0.23"/><rect x="198.1" y="205.6" width="1.2" height="3.9" fill="#000" fill-opacity="0.15"/><rect x="52.8" y="236.7" width="1.9" height="2.9" fill="#000" fill-opacity="0.21"/><rect x="188.8" y="145.7" width="1.7" height="3.1" fill="#000" fill-opacity="0.19"/><rect x="125.3" y="186.1" width="2.2" height="3.3" fill="#000" fill-opacity="0.10"/><rect x="141.6" y="226.5" width="1.0" height="1.6" fill="#000" fill-opacity="0.14"/><rect x="89.3" y="206.7" width="1.0" height="2.7" fill="#000" fill-opacity="0.16"/><rect x="69.1" y="219.5" width="1.0" height="3.1" fill="#000" fill-opacity="0.07"/><rect x="11.5" y="212.7" width="1.7" height="3.8" fill="#000" fill-opacity="0.17"/><rect x="119.0" y="193.3" width="1.9" height="2.1" fill="#000" fill-opacity="0.10"/><rect x="38.9" y="222.8" width="1.5" height="1.2" fill="#000" fill-opacity="0.12"/><rect x="19.9" y="187.4" width="1.1" height="1.7" fill="#000" fill-opacity="0.11"/><rect x="46.0" y="208.6" width="1.5" height="3.3" fill="#000" fill-opacity="0.24"/><rect x="203.1" y="146.7" width="1.7" height="1.0" fill="#000" fill-opacity="0.13"/><rect x="127.4" y="134.0" width="2.1" height="2.9" fill="#000" fill-opacity="0.18"/><rect x="189.7" y="212.9" width="1.3" height="3.8" fill="#000" fill-opacity="0.15"/><rect x="188.7" y="216.8" width="1.3" height="3.5" fill="#000" fill-opacity="0.20"/><rect x="10.0" y="198.8" width="1.1" height="3.7" fill="#000" fill-opacity="0.14"/><rect x="35.5" y="127.0" width="1.6" height="3.9" fill="#000" fill-opacity="0.04"/><rect x="139.1" y="234.4" width="2.0" height="3.3" fill="#000" fill-opacity="0.12"/><rect x="111.8" y="232.0" width="2.2" height="3.1" fill="#000" fill-opacity="0.20"/><rect x="194.6" y="172.6" width="1.0" height="3.2" fill="#000" fill-opacity="0.13"/><rect x="19.0" y="211.7" width="1.9" height="1.2" fill="#000" fill-opacity="0.15"/><rect x="47.9" y="182.4" width="1.3" height="1.8" fill="#000" fill-opacity="0.17"/><rect x="4.5" y="200.3" width="1.5" height="3.0" fill="#000" fill-opacity="0.17"/><rect x="156.7" y="176.5" width="1.8" height="2.8" fill="#000" fill-opacity="0.05"/><rect x="22.9" y="130.3" width="1.2" height="3.4" fill="#000" fill-opacity="0.06"/><rect x="91.2" y="155.5" width="1.7" height="2.2" fill="#000" fill-opacity="0.13"/><rect x="29.1" y="187.8" width="1.9" height="2.2" fill="#000" fill-opacity="0.15"/><rect x="30.7" y="125.1" width="2.1" height="3.0" fill="#000" fill-opacity="0.20"/><rect x="77.9" y="160.8" width="1.6" height="3.8" fill="#000" fill-opacity="0.15"/><rect x="2.0" y="230.7" width="1.6" height="2.8" fill="#000" fill-opacity="0.23"/><rect x="155.1" y="214.6" width="1.3" height="3.7" fill="#000" fill-opacity="0.12"/><rect x="106.6" y="172.7" width="1.1" height="1.5" fill="#000" fill-opacity="0.21"/><rect x="38.4" y="225.0" width="2.0" height="3.4" fill="#000" fill-opacity="0.21"/><rect x="205.8" y="129.6" width="1.6" height="2.4" fill="#000" fill-opacity="0.10"/><rect x="21.2" y="234.3" width="1.5" height="3.2" fill="#000" fill-opacity="0.11"/><rect x="136.0" y="230.3" width="1.7" height="1.3" fill="#000" fill-opacity="0.22"/><rect x="93.8" y="213.2" width="1.2" height="2.8" fill="#000" fill-opacity="0.16"/><rect x="76.1" y="183.6" width="1.4" height="1.9" fill="#000" fill-opacity="0.04"/><rect x="46.6" y="220.3" width="1.4" height="3.2" fill="#000" fill-opacity="0.21"/><rect x="152.0" y="229.9" width="1.4" height="3.6" fill="#000" fill-opacity="0.11"/><rect x="114.6" y="214.5" width="1.6" height="1.5" fill="#000" fill-opacity="0.21"/><rect x="29.8" y="141.3" width="1.2" height="2.6" fill="#000" fill-opacity="0.22"/><rect x="16.5" y="233.8" width="1.5" height="1.1" fill="#000" fill-opacity="0.05"/><rect x="84.5" y="181.5" width="2.1" height="2.8" fill="#000" fill-opacity="0.15"/><rect x="206.7" y="186.5" width="1.9" height="2.4" fill="#000" fill-opacity="0.11"/><rect x="160.1" y="222.5" width="1.2" height="3.2" fill="#000" fill-opacity="0.13"/><rect x="82.7" y="190.8" width="1.7" height="2.5" fill="#000" fill-opacity="0.21"/><rect x="127.5" y="149.3" width="1.5" height="1.5" fill="#000" fill-opacity="0.13"/><rect x="196.4" y="226.3" width="2.2" height="3.0" fill="#000" fill-opacity="0.19"/><rect x="74.9" y="194.2" width="1.5" height="1.7" fill="#000" fill-opacity="0.05"/><rect x="9.8" y="207.6" width="2.1" height="1.6" fill="#000" fill-opacity="0.11"/><rect x="94.7" y="195.9" width="2.2" height="1.1" fill="#000" fill-opacity="0.10"/><rect x="108.4" y="164.5" width="2.0" height="3.5" fill="#000" fill-opacity="0.09"/><rect x="36.8" y="186.4" width="1.3" height="3.0" fill="#000" fill-opacity="0.17"/><rect x="107.4" y="144.9" width="2.1" height="2.1" fill="#000" fill-opacity="0.14"/><rect x="179.8" y="209.4" width="1.5" height="2.5" fill="#000" fill-opacity="0.16"/><rect x="29.6" y="191.9" width="0.9" height="1.5" fill="#000" fill-opacity="0.17"/><rect x="39.5" y="223.5" width="1.8" height="2.1" fill="#000" fill-opacity="0.06"/><rect x="168.1" y="221.8" width="1.5" height="3.2" fill="#000" fill-opacity="0.14"/><rect x="34.2" y="223.6" width="0.8" height="3.5" fill="#000" fill-opacity="0.05"/><rect x="34.2" y="182.6" width="0.9" height="2.9" fill="#000" fill-opacity="0.15"/><rect x="54.2" y="234.9" width="2.1" height="1.5" fill="#000" fill-opacity="0.16"/><rect x="4.8" y="183.9" width="1.7" height="3.2" fill="#000" fill-opacity="0.10"/><rect x="93.5" y="233.2" width="2.0" height="4.0" fill="#000" fill-opacity="0.07"/><rect x="124.8" y="145.7" width="1.9" height="3.4" fill="#000" fill-opacity="0.08"/><rect x="55.5" y="170.8" width="1.3" height="3.2" fill="#000" fill-opacity="0.13"/><rect x="48.3" y="180.3" width="1.0" height="2.2" fill="#000" fill-opacity="0.08"/><rect x="104.9" y="141.1" width="1.0" height="2.3" fill="#000" fill-opacity="0.06"/><rect x="127.6" y="195.1" width="1.9" height="1.1" fill="#000" fill-opacity="0.14"/><rect x="100.3" y="231.1" width="1.6" height="1.4" fill="#000" fill-opacity="0.21"/><rect x="160.6" y="135.2" width="1.5" height="2.9" fill="#000" fill-opacity="0.11"/><rect x="110.1" y="235.5" width="1.9" height="1.7" fill="#000" fill-opacity="0.20"/><rect x="122.3" y="206.3" width="1.9" height="3.2" fill="#000" fill-opacity="0.18"/><rect x="28.6" y="232.4" width="1.1" height="2.4" fill="#000" fill-opacity="0.21"/><rect x="181.6" y="216.7" width="1.1" height="2.2" fill="#000" fill-opacity="0.18"/><rect x="120.1" y="151.9" width="0.8" height="1.4" fill="#000" fill-opacity="0.17"/><rect x="66.1" y="166.8" width="1.0" height="2.1" fill="#000" fill-opacity="0.17"/><rect x="177.1" y="219.6" width="1.3" height="2.3" fill="#000" fill-opacity="0.10"/><rect x="156.5" y="167.9" width="1.9" height="2.2" fill="#000" fill-opacity="0.14"/><rect x="115.3" y="207.5" width="1.2" height="1.8" fill="#000" fill-opacity="0.11"/><rect x="152.6" y="164.3" width="1.7" height="3.6" fill="#000" fill-opacity="0.19"/><rect x="145.1" y="198.7" width="1.1" height="1.5" fill="#000" fill-opacity="0.12"/><rect x="114.4" y="211.0" width="1.8" height="3.1" fill="#000" fill-opacity="0.07"/><rect x="2.1" y="124.3" width="1.0" height="1.3" fill="#000" fill-opacity="0.23"/><rect x="14.2" y="200.0" width="0.9" height="1.7" fill="#000" fill-opacity="0.05"/><rect x="203.8" y="205.9" width="1.5" height="2.8" fill="#000" fill-opacity="0.18"/><rect x="195.8" y="179.4" width="1.7" height="3.5" fill="#000" fill-opacity="0.13"/><rect x="136.3" y="224.4" width="1.2" height="3.4" fill="#000" fill-opacity="0.05"/><rect x="107.3" y="179.1" width="1.0" height="1.7" fill="#000" fill-opacity="0.05"/><rect x="1.1" y="221.0" width="2.2" height="1.5" fill="#000" fill-opacity="0.20"/><rect x="82.4" y="209.4" width="1.5" height="2.8" fill="#000" fill-opacity="0.19"/><rect x="19.6" y="234.2" width="2.0" height="1.9" fill="#000" fill-opacity="0.22"/><rect x="199.4" y="210.0" width="1.6" height="1.8" fill="#000" fill-opacity="0.08"/><rect x="119.4" y="130.0" width="1.4" height="1.8" fill="#000" fill-opacity="0.06"/><rect x="61.6" y="234.0" width="1.9" height="3.8" fill="#000" fill-opacity="0.23"/><rect x="168.5" y="138.5" width="1.8" height="2.7" fill="#000" fill-opacity="0.23"/><rect x="159.6" y="184.0" width="2.1" height="3.3" fill="#000" fill-opacity="0.13"/><rect x="121.9" y="197.0" width="1.0" height="1.1" fill="#000" fill-opacity="0.05"/><rect x="205.8" y="174.4" width="1.1" height="3.0" fill="#000" fill-opacity="0.10"/><rect x="107.4" y="125.8" width="2.0" height="1.0" fill="#000" fill-opacity="0.09"/><rect x="139.8" y="232.7" width="0.9" height="3.5" fill="#000" fill-opacity="0.23"/><rect x="73.8" y="195.0" width="1.2" height="3.7" fill="#000" fill-opacity="0.23"/><rect x="188.4" y="167.5" width="1.1" height="2.5" fill="#000" fill-opacity="0.19"/><rect x="43.6" y="139.1" width="1.1" height="1.6" fill="#000" fill-opacity="0.16"/><rect x="23.0" y="228.2" width="1.7" height="3.8" fill="#000" fill-opacity="0.17"/><rect x="158.4" y="177.2" width="0.9" height="2.6" fill="#000" fill-opacity="0.14"/><rect x="102.4" y="176.2" width="2.1" height="4.0" fill="#000" fill-opacity="0.21"/><rect x="203.8" y="193.2" width="1.2" height="3.7" fill="#000" fill-opacity="0.08"/><rect x="12.2" y="182.2" width="1.5" height="3.4" fill="#000" fill-opacity="0.15"/><rect x="82.1" y="191.8" width="1.0" height="3.1" fill="#000" fill-opacity="0.24"/><rect x="95.8" y="165.3" width="0.8" height="3.1" fill="#000" fill-opacity="0.08"/><rect x="68.0" y="181.6" width="1.2" height="2.8" fill="#000" fill-opacity="0.15"/><rect x="98.1" y="221.2" width="1.3" height="2.8" fill="#000" fill-opacity="0.14"/><rect x="145.3" y="223.6" width="2.0" height="2.1" fill="#000" fill-opacity="0.10"/><rect x="28.0" y="226.3" width="1.1" height="2.7" fill="#000" fill-opacity="0.06"/><rect x="49.6" y="218.1" width="1.3" height="2.3" fill="#000" fill-opacity="0.07"/><rect x="31.8" y="125.2" width="1.0" height="3.4" fill="#000" fill-opacity="0.14"/><rect x="176.0" y="119.2" width="1.8" height="2.6" fill="#000" fill-opacity="0.20"/><rect x="116.8" y="215.0" width="1.4" height="2.7" fill="#000" fill-opacity="0.18"/><rect x="168.6" y="234.7" width="1.7" height="2.4" fill="#000" fill-opacity="0.13"/><rect x="75.4" y="211.4" width="2.1" height="2.7" fill="#000" fill-opacity="0.09"/><rect x="26.0" y="236.5" width="2.1" height="3.6" fill="#000" fill-opacity="0.08"/><rect x="134.7" y="182.3" width="1.9" height="1.5" fill="#000" fill-opacity="0.11"/><rect x="101.4" y="168.9" width="2.0" height="3.2" fill="#000" fill-opacity="0.12"/><rect x="131.1" y="216.4" width="1.0" height="1.4" fill="#000" fill-opacity="0.20"/><rect x="131.0" y="211.1" width="2.0" height="2.7" fill="#000" fill-opacity="0.05"/><rect x="48.0" y="227.7" width="1.2" height="2.0" fill="#000" fill-opacity="0.09"/><rect x="56.9" y="172.9" width="2.0" height="2.3" fill="#000" fill-opacity="0.11"/><rect x="199.9" y="180.8" width="1.1" height="2.2" fill="#000" fill-opacity="0.04"/><rect x="137.4" y="161.1" width="1.8" height="3.8" fill="#000" fill-opacity="0.06"/><rect x="22.2" y="227.3" width="2.0" height="1.2" fill="#000" fill-opacity="0.15"/><rect x="82.8" y="236.3" width="0.9" height="3.3" fill="#000" fill-opacity="0.09"/><rect x="135.9" y="228.3" width="1.2" height="3.7" fill="#000" fill-opacity="0.09"/><rect x="130.1" y="216.6" width="2.0" height="1.4" fill="#000" fill-opacity="0.05"/><rect x="178.2" y="170.3" width="1.5" height="2.0" fill="#000" fill-opacity="0.23"/><rect x="57.1" y="186.9" width="2.2" height="2.3" fill="#000" fill-opacity="0.18"/><rect x="124.1" y="226.5" width="1.7" height="2.9" fill="#000" fill-opacity="0.15"/><rect x="132.7" y="189.1" width="1.3" height="1.9" fill="#000" fill-opacity="0.15"/><rect x="92.0" y="149.6" width="1.2" height="2.1" fill="#000" fill-opacity="0.10"/><rect x="169.0" y="237.0" width="1.3" height="3.5" fill="#000" fill-opacity="0.13"/><rect x="191.0" y="236.9" width="1.5" height="3.8" fill="#000" fill-opacity="0.04"/><rect x="61.3" y="200.6" width="0.8" height="1.7" fill="#000" fill-opacity="0.11"/><rect x="116.5" y="202.8" width="1.0" height="2.2" fill="#000" fill-opacity="0.19"/><rect x="78.9" y="205.3" width="1.4" height="1.8" fill="#000" fill-opacity="0.09"/><rect x="188.5" y="155.6" width="1.8" height="3.4" fill="#000" fill-opacity="0.10"/><rect x="167.6" y="158.8" width="2.0" height="2.2" fill="#000" fill-opacity="0.08"/><rect x="132.2" y="216.1" width="1.2" height="2.9" fill="#000" fill-opacity="0.16"/><rect x="5.0" y="225.6" width="1.5" height="1.1" fill="#000" fill-opacity="0.08"/><rect x="56.5" y="232.1" width="1.8" height="3.1" fill="#000" fill-opacity="0.09"/><rect x="102.7" y="228.6" width="1.2" height="2.0" fill="#000" fill-opacity="0.20"/><rect x="96.5" y="118.8" width="1.3" height="3.4" fill="#000" fill-opacity="0.21"/><rect x="12.5" y="126.4" width="0.9" height="3.3" fill="#000" fill-opacity="0.13"/><rect x="174.4" y="225.2" width="2.0" height="3.5" fill="#000" fill-opacity="0.06"/><rect x="52.3" y="155.1" width="1.4" height="3.3" fill="#000" fill-opacity="0.19"/><rect x="95.9" y="236.0" width="1.5" height="3.3" fill="#000" fill-opacity="0.24"/><rect x="141.4" y="195.5" width="1.3" height="1.9" fill="#000" fill-opacity="0.17"/><rect x="194.1" y="235.6" width="1.2" height="2.6" fill="#000" fill-opacity="0.17"/><rect x="183.8" y="224.7" width="1.1" height="3.6" fill="#000" fill-opacity="0.06"/><rect x="67.8" y="174.5" width="1.2" height="1.5" fill="#000" fill-opacity="0.06"/><rect x="2.8" y="151.9" width="1.9" height="1.1" fill="#000" fill-opacity="0.14"/><rect x="77.5" y="179.6" width="1.0" height="1.3" fill="#000" fill-opacity="0.06"/><rect x="192.8" y="176.5" width="1.7" height="4.0" fill="#000" fill-opacity="0.05"/><rect x="145.5" y="172.9" width="1.0" height="3.4" fill="#000" fill-opacity="0.09"/><rect x="163.4" y="121.5" width="1.9" height="3.3" fill="#000" fill-opacity="0.13"/><rect x="143.0" y="225.2" width="1.0" height="2.1" fill="#000" fill-opacity="0.22"/><rect x="91.1" y="193.9" width="1.8" height="1.9" fill="#000" fill-opacity="0.08"/><rect x="72.6" y="225.7" width="1.2" height="3.2" fill="#000" fill-opacity="0.21"/><rect x="115.2" y="132.4" width="1.0" height="1.2" fill="#000" fill-opacity="0.10"/><rect x="76.6" y="218.7" width="1.7" height="1.0" fill="#000" fill-opacity="0.12"/><rect x="4.9" y="225.8" width="1.9" height="3.6" fill="#000" fill-opacity="0.09"/><rect x="136.6" y="162.0" width="1.3" height="2.6" fill="#000" fill-opacity="0.14"/><rect x="114.6" y="192.4" width="1.3" height="2.8" fill="#000" fill-opacity="0.17"/><rect x="108.8" y="231.6" width="2.0" height="1.2" fill="#000" fill-opacity="0.07"/><rect x="42.6" y="138.9" width="0.9" height="2.5" fill="#000" fill-opacity="0.15"/><rect x="136.5" y="144.7" width="1.8" height="2.6" fill="#000" fill-opacity="0.09"/><rect x="125.8" y="207.9" width="2.1" height="1.2" fill="#000" fill-opacity="0.08"/><rect x="184.3" y="193.2" width="1.9" height="1.2" fill="#000" fill-opacity="0.05"/><rect x="194.3" y="184.6" width="1.3" height="2.2" fill="#000" fill-opacity="0.18"/><rect x="55.8" y="146.7" width="0.9" height="1.1" fill="#000" fill-opacity="0.10"/><rect x="198.9" y="127.6" width="1.8" height="1.3" fill="#000" fill-opacity="0.15"/><rect x="109.4" y="225.5" width="1.7" height="1.7" fill="#000" fill-opacity="0.08"/><rect x="86.5" y="157.9" width="1.7" height="1.3" fill="#000" fill-opacity="0.11"/><rect x="138.0" y="197.2" width="1.0" height="3.6" fill="#000" fill-opacity="0.08"/><rect x="70.5" y="204.0" width="2.2" height="1.5" fill="#000" fill-opacity="0.13"/><rect x="65.9" y="209.5" width="1.3" height="4.0" fill="#000" fill-opacity="0.11"/><rect x="89.7" y="155.7" width="1.7" height="3.2" fill="#000" fill-opacity="0.15"/><rect x="158.7" y="223.3" width="1.2" height="3.8" fill="#000" fill-opacity="0.23"/><rect x="82.8" y="198.6" width="2.2" height="3.2" fill="#000" fill-opacity="0.16"/><rect x="205.6" y="189.9" width="1.2" height="1.9" fill="#000" fill-opacity="0.08"/><rect x="5.5" y="141.7" width="1.8" height="3.5" fill="#000" fill-opacity="0.10"/><rect x="115.6" y="185.2" width="1.0" height="3.8" fill="#000" fill-opacity="0.05"/><rect x="29.5" y="209.1" width="1.6" height="2.1" fill="#000" fill-opacity="0.09"/><rect x="19.9" y="148.6" width="2.1" height="2.2" fill="#000" fill-opacity="0.19"/><rect x="164.3" y="161.7" width="2.0" height="1.5" fill="#000" fill-opacity="0.18"/><rect x="188.0" y="182.2" width="1.2" height="2.8" fill="#000" fill-opacity="0.19"/><rect x="17.2" y="182.2" width="1.9" height="1.2" fill="#000" fill-opacity="0.11"/><rect x="86.8" y="147.7" width="2.0" height="3.6" fill="#000" fill-opacity="0.09"/><rect x="125.1" y="171.8" width="1.9" height="1.0" fill="#000" fill-opacity="0.12"/><rect x="9.5" y="214.5" width="1.0" height="2.6" fill="#000" fill-opacity="0.14"/><rect x="11.4" y="222.7" width="1.4" height="3.2" fill="#000" fill-opacity="0.13"/><rect x="105.0" y="179.7" width="1.2" height="1.7" fill="#000" fill-opacity="0.12"/><rect x="18.0" y="230.0" width="0.9" height="2.7" fill="#000" fill-opacity="0.12"/><rect x="104.4" y="233.2" width="1.0" height="3.3" fill="#000" fill-opacity="0.07"/><rect x="101.5" y="184.5" width="1.1" height="3.0" fill="#000" fill-opacity="0.16"/><rect x="51.7" y="159.9" width="1.9" height="1.2" fill="#000" fill-opacity="0.10"/><rect x="19.5" y="130.9" width="1.4" height="3.0" fill="#000" fill-opacity="0.11"/><rect x="123.3" y="212.9" width="1.2" height="1.1" fill="#000" fill-opacity="0.24"/><rect x="205.0" y="176.8" width="1.0" height="2.3" fill="#000" fill-opacity="0.05"/><rect x="42.1" y="147.5" width="1.9" height="2.1" fill="#000" fill-opacity="0.21"/><rect x="153.1" y="119.2" width="27.4" height="105.1" fill="#e09090" fill-opacity="0.42"/><rect x="160.0" y="125.0" width="11" height="98" fill="#000" fill-opacity="0.1"/><rect x="164.5" y="124.0" width="8.6" height="1.2" fill="#000" fill-opacity="0.27"/><rect x="163.7" y="126.5" width="1.7" height="1.0" fill="#000" fill-opacity="0.09"/><rect x="160.3" y="127.8" width="5.1" height="2.1" fill="#000" fill-opacity="0.19"/><rect x="165.3" y="131.0" width="1.0" height="1.3" fill="#000" fill-opacity="0.23"/><rect x="162.4" y="132.3" width="7.3" height="1.3" fill="#000" fill-opacity="0.09"/><rect x="166.7" y="134.6" width="3.0" height="1.0" fill="#000" fill-opacity="0.23"/><rect x="157.0" y="139.0" width="8.8" height="1.5" fill="#000" fill-opacity="0.15"/><rect x="162.2" y="141.7" width="4.9" height="2.1" fill="#000" fill-opacity="0.28"/><rect x="162.3" y="143.8" width="3.5" height="1.5" fill="#000" fill-opacity="0.11"/><rect x="167.9" y="145.8" width="2.7" height="1.7" fill="#000" fill-opacity="0.19"/><rect x="160.3" y="152.3" width="5.4" height="2.6" fill="#000" fill-opacity="0.11"/><rect x="167.2" y="156.3" width="3.9" height="2.3" fill="#000" fill-opacity="0.21"/><rect x="168.2" y="159.6" width="2.1" height="1.5" fill="#000" fill-opacity="0.28"/><rect x="164.4" y="161.5" width="1.9" height="2.1" fill="#000" fill-opacity="0.26"/><rect x="159.2" y="164.9" width="5.1" height="1.6" fill="#000" fill-opacity="0.30"/><rect x="157.3" y="170.6" width="8.6" height="1.6" fill="#000" fill-opacity="0.15"/><rect x="160.2" y="173.6" width="8.0" height="2.5" fill="#000" fill-opacity="0.17"/><rect x="161.3" y="181.0" width="1.7" height="1.5" fill="#000" fill-opacity="0.25"/><rect x="161.2" y="183.5" width="2.7" height="1.5" fill="#000" fill-opacity="0.23"/><rect x="163.5" y="185.5" width="4.9" height="2.4" fill="#000" fill-opacity="0.24"/><rect x="161.3" y="188.5" width="1.9" height="2.7" fill="#000" fill-opacity="0.09"/><rect x="165.1" y="192.3" width="4.2" height="1.0" fill="#000" fill-opacity="0.30"/><rect x="162.9" y="197.1" width="3.5" height="2.7" fill="#000" fill-opacity="0.13"/><rect x="161.4" y="200.4" width="3.9" height="1.1" fill="#000" fill-opacity="0.21"/><rect x="163.6" y="202.6" width="8.0" height="2.2" fill="#000" fill-opacity="0.19"/><rect x="160.7" y="205.5" width="9.0" height="2.7" fill="#000" fill-opacity="0.17"/><rect x="158.0" y="209.3" width="6.0" height="2.1" fill="#000" fill-opacity="0.14"/><rect x="162.0" y="212.0" width="4.6" height="1.6" fill="#000" fill-opacity="0.21"/><rect x="160.8" y="213.7" width="7.6" height="2.0" fill="#000" fill-opacity="0.24"/><rect x="159.9" y="219.5" width="4.5" height="1.3" fill="#000" fill-opacity="0.21"/><rect x="165.3" y="221.8" width="2.9" height="1.4" fill="#000" fill-opacity="0.28"/><rect x="172.8" y="174.0" width="1.1" height="2.4" fill="#000" fill-opacity="0.17"/><rect x="173.5" y="179.8" width="1.6" height="2.9" fill="#000" fill-opacity="0.28"/><rect x="171.2" y="183.5" width="2.7" height="2.3" fill="#000" fill-opacity="0.24"/><rect x="172.1" y="188.7" width="1.1" height="2.3" fill="#000" fill-opacity="0.22"/><rect x="171.4" y="195.5" width="1.7" height="2.2" fill="#000" fill-opacity="0.22"/><rect x="173.5" y="198.0" width="2.0" height="2.1" fill="#000" fill-opacity="0.11"/><rect x="172.7" y="200.3" width="2.7" height="2.3" fill="#000" fill-opacity="0.27"/><rect x="171.7" y="203.1" width="1.7" height="2.8" fill="#000" fill-opacity="0.23"/><rect x="171.3" y="206.8" width="2.5" height="2.4" fill="#000" fill-opacity="0.19"/><rect x="172.4" y="210.1" width="1.5" height="2.9" fill="#000" fill-opacity="0.18"/><rect x="171.7" y="213.1" width="1.4" height="1.9" fill="#000" fill-opacity="0.24"/><rect x="172.7" y="215.3" width="2.3" height="2.1" fill="#000" fill-opacity="0.12"/><rect x="157.4" y="187.5" width="1.9" height="1.3" fill="#000" fill-opacity="0.12"/><rect x="155.8" y="192.7" width="2.2" height="1.0" fill="#000" fill-opacity="0.18"/><rect x="157.4" y="194.9" width="1.5" height="3.0" fill="#000" fill-opacity="0.15"/><rect x="156.2" y="197.9" width="2.5" height="1.4" fill="#000" fill-opacity="0.13"/><rect x="157.7" y="203.8" width="1.5" height="1.4" fill="#000" fill-opacity="0.19"/><rect x="158.1" y="206.4" width="2.2" height="2.3" fill="#000" fill-opacity="0.13"/><rect x="157.8" y="209.2" width="2.4" height="2.6" fill="#000" fill-opacity="0.09"/><rect x="157.9" y="212.8" width="1.3" height="1.6" fill="#000" fill-opacity="0.17"/><rect x="157.5" y="219.9" width="1.7" height="2.7" fill="#000" fill-opacity="0.18"/><rect x="156.0" y="191.0" width="13" height="5" fill="#000" fill-opacity="0.5" rx="1"/><rect x="157.0" y="201.0" width="11" height="3" fill="#000" fill-opacity="0.25"/></svg>
<svg class="r" style="left:49px;top:61px;" width="207" height="237" viewBox="0 0 207 237"><rect width="207" height="237" fill="#000" filter="url(#gn)"/></svg>
<svg class="r" style="left:199px;top:177px;" width="34" height="112" viewBox="0 0 34 112"><rect x="3.1" y="3.2" width="27.4" height="105.1" fill="none" stroke="#e4584a" stroke-width="1.1"/><rect x="0.5" y="0.6" width="5.2" height="5.2" rx="0.8" fill="none" stroke="#e4584a" stroke-width="1.1"/><rect x="0.5" y="53.1" width="5.2" height="5.2" rx="0.8" fill="none" stroke="#e4584a" stroke-width="1.1"/><rect x="0.5" y="105.7" width="5.2" height="5.2" rx="0.8" fill="none" stroke="#e4584a" stroke-width="1.1"/><rect x="14.2" y="0.6" width="5.2" height="5.2" rx="0.8" fill="none" stroke="#e4584a" stroke-width="1.1"/><rect x="14.2" y="53.1" width="5.2" height="5.2" rx="0.8" fill="none" stroke="#e4584a" stroke-width="1.1"/><rect x="14.2" y="105.7" width="5.2" height="5.2" rx="0.8" fill="none" stroke="#e4584a" stroke-width="1.1"/><rect x="27.9" y="0.6" width="5.2" height="5.2" rx="0.8" fill="none" stroke="#e4584a" stroke-width="1.1"/><rect x="27.9" y="53.1" width="5.2" height="5.2" rx="0.8" fill="none" stroke="#e4584a" stroke-width="1.1"/><rect x="27.9" y="105.7" width="5.2" height="5.2" rx="0.8" fill="none" stroke="#e4584a" stroke-width="1.1"/></svg>
<div class="t" style="top:181.73px;font-size:5.5px;color:#333;left:207.50px;">2</div>
<div class="r" style="left:98.90px;top:298.00px;width:1.20px;height:7.00px;background:#555;"></div>
<div class="r" style="left:143.10px;top:298.00px;width:1.20px;height:7.00px;background:#555;"></div>
<div class="r" style="left:191.20px;top:298.00px;width:1.20px;height:7.00px;background:#555;"></div>
<div class="r" style="left:246.10px;top:298.00px;width:1.20px;height:7.00px;background:#555;"></div>
<div class="t" style="top:308.08px;font-size:7.0px;color:#747474;letter-spacing:-0.277px;left:-200.60px;width:600px;text-align:center;">13:30:00 GMT</div>
<div class="t" style="top:317.48px;font-size:7.0px;color:#747474;letter-spacing:-0.247px;left:-200.60px;width:600px;text-align:center;">03-Dec-2020</div>
<div class="t" style="top:308.08px;font-size:7.0px;color:#747474;letter-spacing:-0.321px;left:-156.00px;width:600px;text-align:center;">13:37:13</div>
<div class="t" style="top:308.08px;font-size:7.0px;color:#747474;letter-spacing:-0.277px;left:-108.20px;width:600px;text-align:center;">13:45:00 GMT</div>
<div class="t" style="top:317.48px;font-size:7.0px;color:#747474;letter-spacing:-0.247px;left:-108.20px;width:600px;text-align:center;">03-Dec-2020</div>
<div class="t" style="top:308.08px;font-size:7.0px;color:#747474;letter-spacing:-0.321px;left:-53.30px;width:600px;text-align:center;">13:53:55</div>
<div class="r" style="left:5.00px;top:338.80px;width:252.00px;height:8.20px;background:#ececec;"></div>
<svg class="r" style="left:7.5px;top:340px;" width="5" height="7" viewBox="0 0 5 7"><path d="M4,0.8 L1,3.5 L4,6.2" fill="none" stroke="#aaa" stroke-width="0.9"/></svg>
<div class="r" style="left:5.00px;top:349.50px;width:252.00px;height:0.80px;background:#d6d6d6;"></div>
<div class="r" style="left:5.00px;top:351.70px;width:252.00px;height:17.90px;background:#dcdcdc;"></div>
<div class="r" style="left:6.50px;top:355.40px;width:12.50px;height:11.80px;background:linear-gradient(#efefef,#e4e4e4);border:1px solid #d2d2d2;border-radius:3px;box-sizing:border-box;background:linear-gradient(#f4f4f4,#e8e8e8);"></div>
<svg class="r" style="left:9.3px;top:357.8px;" width="7" height="7" viewBox="0 0 7 7"><path d="M3.5,0.3 V6.7 M0.3,3.5 H6.7" stroke="#222" stroke-width="1.1"/></svg>
<div class="r" style="left:22.00px;top:354.00px;width:38.50px;height:16.00px;background:#f4f4f4;border:1px solid #cfcfcf;border-bottom:none;border-radius:2px 2px 0 0;box-sizing:border-box;"></div>
<div class="t" style="top:358.03px;font-size:7.5px;color:#222;left:25.50px;">&#9733;</div>
<div class="t" style="top:358.33px;font-size:6.9px;color:#333;letter-spacing:-0.12px;left:34.50px;">Table 1</div>
<div class="r" style="left:5.00px;top:385.00px;width:252.00px;height:15.70px;background:linear-gradient(#f2f2f2,#e2e2e2);border-top:1px solid #d6d6d6;box-sizing:border-box;"></div>
<div class="r" style="left:5.00px;top:400.70px;width:252.00px;height:13.30px;background:#ffffff;"></div>
<div class="r" style="left:5.00px;top:414.00px;width:252.00px;height:13.80px;background:#d5d5d5;"></div>
<div class="r" style="left:5.00px;top:427.80px;width:252.00px;height:2.80px;background:#ffffff;"></div>
<div class="r" style="left:5.00px;top:430.60px;width:252.00px;height:0.80px;background:#d6d6d6;"></div>
<div class="r" style="left:5.00px;top:385.00px;width:0.80px;height:46.00px;background:#d6d6d6;"></div>
<div class="r" style="left:51.20px;top:385.50px;width:0.80px;height:45.50px;background:#dadada;"></div>
<div class="r" style="left:99.10px;top:385.50px;width:0.80px;height:45.50px;background:#dadada;"></div>
<div class="r" style="left:155.10px;top:385.50px;width:0.80px;height:45.50px;background:#dadada;"></div>
<div class="r" style="left:206.60px;top:385.50px;width:0.80px;height:45.50px;background:#dadada;"></div>
<div class="t" style="top:387.23px;font-size:7.1px;color:#333;letter-spacing:-0.1px;left:-271.80px;width:600px;text-align:center;">ID</div>
<div class="t" style="top:387.23px;font-size:7.1px;color:#333;letter-spacing:-0.1px;left:-224.80px;width:600px;text-align:center;">Channel</div>
<div class="t" style="top:387.23px;font-size:7.1px;color:#333;letter-spacing:-0.1px;left:-172.60px;width:600px;text-align:center;">Begin time</div>
<div class="t" style="top:387.23px;font-size:7.1px;color:#333;letter-spacing:-0.1px;left:-119.00px;width:600px;text-align:center;">End Time</div>
<div class="t" style="top:387.23px;font-size:7.1px;color:#333;letter-spacing:-0.1px;left:-68.20px;width:600px;text-align:center;">Low Freq</div>
<div class="t" style="top:395.39px;font-size:4.2px;color:#444;left:-172.60px;width:600px;text-align:center;">(s)</div>
<div class="t" style="top:395.39px;font-size:4.2px;color:#444;left:-119.00px;width:600px;text-align:center;">(s)</div>
<div class="t" style="top:395.39px;font-size:4.2px;color:#444;left:-68.20px;width:600px;text-align:center;">(Hz)</div>
<div class="t" style="top:403.28px;font-size:7.2px;color:#2a2a2a;letter-spacing:-0.05px;left:7.80px;">1</div>
<div class="t" style="top:403.28px;font-size:7.2px;color:#2a2a2a;letter-spacing:-0.05px;left:53.80px;">1</div>
<div class="t" style="top:403.28px;font-size:7.2px;color:#2a2a2a;letter-spacing:-0.05px;left:101.60px;">50,840.14</div>
<div class="t" style="top:403.28px;font-size:7.2px;color:#2a2a2a;letter-spacing:-0.05px;left:157.20px;">51,470.91</div>
<div class="t" style="top:403.28px;font-size:7.2px;color:#2a2a2a;letter-spacing:-0.05px;left:208.60px;">1,434.83</div>
<div class="t" style="top:416.78px;font-size:7.2px;color:#2a2a2a;letter-spacing:-0.05px;left:7.80px;">2</div>
<div class="t" style="top:416.78px;font-size:7.2px;color:#2a2a2a;letter-spacing:-0.05px;left:53.80px;">1</div>
<div class="t" style="top:416.78px;font-size:7.2px;color:#2a2a2a;letter-spacing:-0.05px;left:101.60px;">49,572.99</div>
<div class="t" style="top:416.78px;font-size:7.2px;color:#2a2a2a;letter-spacing:-0.05px;left:157.20px;">49,835.94</div>
<div class="t" style="top:416.78px;font-size:7.2px;color:#2a2a2a;letter-spacing:-0.05px;left:208.60px;">1,098.37</div>
<div class="t" style="top:450.58px;font-size:7.4px;color:#444;letter-spacing:-0.056px;left:8.00px;">Time:</div>
<div class="t" style="top:450.53px;font-size:7.5px;color:#444;letter-spacing:0.04px;left:35.00px;">2020-12-03T14:28:21.765849167Z</div>
<div class="t" style="top:450.53px;font-size:7.5px;color:#444;letter-spacing:-0.169px;left:161.00px;">Frequency:</div>
<div class="t" style="top:450.53px;font-size:7.5px;color:#444;letter-spacing:-0.253px;left:207.00px;">137 Hz</div>
<div class="r" style="left:256px;top:46px;width:768px;height:560px;border-radius:7px 7px 0 0;background:#f3f3f3;box-shadow:0 4px 22px rgba(0,0,0,0.32);border:1px solid #c4c4c4;box-sizing:border-box;"></div>
<div class="r" style="left:257.00px;top:62.50px;width:766.00px;height:16.50px;background:#f1f1f1;"></div>
<div class="r" style="left:257.00px;top:79.00px;width:766.00px;height:1.00px;background:#dadada;"></div>
<div class="r" style="left:257.00px;top:80.00px;width:766.00px;height:25.30px;background:#efefef;"></div>
<div class="r" style="left:257.00px;top:105.30px;width:766.00px;height:477.70px;background:#f4f4f4;"></div>
<svg class="r" style="left:261px;top:51px;" width="10" height="7" viewBox="0 0 10 7"><ellipse cx="4.6" cy="3.3" rx="4.3" ry="2.7" fill="#12d8f0"/><path d="M2.2,0.6 L7.2,5.8" stroke="#102040" stroke-width="1.9"/><path d="M5.5,4.2 L7,6.2" stroke="#0a2a8a" stroke-width="1.6"/></svg>
<div class="t" style="top:50.83px;font-size:7.6px;color:#1e1e1e;letter-spacing:-0.471px;left:273.80px;">Wave and Spectrogram View</div>
<div class="r" style="left:955.70px;top:53.80px;width:6.50px;height:1.00px;background:#333;"></div>
<div class="r" style="left:981.50px;top:51.00px;width:6.30px;height:6.30px;background:transparent;border:1px solid #333;border-radius:1px;box-sizing:border-box;"></div>
<svg class="r" style="left:1007.8px;top:51px;" width="7" height="7" viewBox="0 0 7 7"><path d="M0.5,0.5 L6.5,6.5 M6.5,0.5 L0.5,6.5" stroke="#333" stroke-width="1"/></svg>
<div class="t" style="top:67.88px;font-size:7.4px;color:#333;left:266.60px;">File</div>
<div class="t" style="top:67.88px;font-size:7.4px;color:#333;left:289.70px;">Edit</div>
<div class="t" style="top:67.88px;font-size:7.4px;color:#333;left:314.00px;">View</div>
<div class="t" style="top:67.88px;font-size:7.4px;color:#333;left:341.80px;">Navigate</div>
<div class="t" style="top:67.88px;font-size:7.4px;color:#333;left:382.90px;">Help</div>
<div class="r" style="left:262.00px;top:84.00px;width:21.00px;height:18.50px;background:linear-gradient(#efefef,#e4e4e4);border:1px solid #d2d2d2;border-radius:3px;box-sizing:border-box;border:1px dotted #3aa8d8;"></div>
<svg class="r" style="left:265.5px;top:87px;" width="15" height="13" viewBox="0 0 15 13"><path d="M1,3 V11.5 C1,12 1.4,12.3 1.9,12.3 H12.6 C13.2,12.3 13.6,12 13.8,11.4 L14.3,5.8 C14.4,5.2 14,4.8 13.4,4.8 H2.6" fill="none" stroke="#222" stroke-width="1.2"/><path d="M1,3.5 V1.8 C1,1.2 1.4,1 1.9,1 H5.2 L6.4,2.3 H11.6 C12.1,2.3 12.4,2.6 12.4,3.1 V4.8" fill="none" stroke="#222" stroke-width="1.2"/></svg>
<div class="r" style="left:291.00px;top:84.00px;width:1.00px;height:18.00px;background:#d8d8d8;"></div>
<div class="r" style="left:302.40px;top:84.50px;width:21.30px;height:17.00px;background:linear-gradient(#efefef,#e4e4e4);border:1px solid #d2d2d2;border-radius:3px;box-sizing:border-box;"></div>
<svg class="r" style="left:309px;top:88px;" width="9" height="10" viewBox="0 0 9 10"><path d="M1,0.8 L8,5 L1,9.2Z" fill="none" stroke="#222" stroke-width="1.2" stroke-linejoin="round"/></svg>
<div class="r" style="left:326.40px;top:84.50px;width:20.60px;height:17.00px;background:linear-gradient(#efefef,#e4e4e4);border:1px solid #d2d2d2;border-radius:3px;box-sizing:border-box;"></div>
<div class="r" style="left:332.00px;top:88.50px;width:9.50px;height:9.30px;background:transparent;border:1.3px solid #222;border-radius:2px;box-sizing:border-box;"></div>
<div class="t" style="top:89.53px;font-size:7.3px;color:#333;letter-spacing:-0.44px;left:349.30px;">Rate</div>
<div class="r" style="left:366.00px;top:86.80px;width:30.00px;height:13.10px;background:#fff;border:1px solid #d8d8d8;border-radius:2px;box-sizing:border-box;"></div>
<div class="t" style="top:89.68px;font-size:7.3px;color:#333;left:372.00px;">1.00</div>
<div class="r" style="left:405.00px;top:84.00px;width:1.00px;height:18.00px;background:#d8d8d8;"></div>
<div class="r" style="left:416.30px;top:84.50px;width:21.30px;height:17.00px;background:linear-gradient(#efefef,#e4e4e4);border:1px solid #d2d2d2;border-radius:3px;box-sizing:border-box;"></div>
<svg class="r" style="left:420px;top:86px;" width="14" height="14" viewBox="0 0 14 14"><polygon points="13.30,7.00 13.18,8.23 11.34,8.80 10.91,9.61 11.45,11.45 10.50,12.24 8.80,11.34 7.92,11.61 7.00,13.30 5.77,13.18 5.20,11.34 4.39,10.91 2.55,11.45 1.76,10.50 2.66,8.80 2.39,7.92 0.70,7.00 0.82,5.77 2.66,5.20 3.09,4.39 2.55,2.55 3.50,1.76 5.20,2.66 6.08,2.39 7.00,0.70 8.23,0.82 8.80,2.66 9.61,3.09 11.45,2.55 12.24,3.50 11.34,5.20 11.61,6.08" fill="none" stroke="#222" stroke-width="1.1" stroke-linejoin="round"/><circle cx="7" cy="7" r="2.2" fill="none" stroke="#222" stroke-width="1.1"/></svg>
<svg class="r" style="left:445.3px;top:86.3px;" width="14" height="14" viewBox="0 0 14 14"><circle cx="7" cy="7" r="2.9" fill="none" stroke="#222" stroke-width="1.1"/><path d="M11.20,7.00 L13.40,7.00" stroke="#222" stroke-width="1.1"/><path d="M9.97,9.97 L11.53,11.53" stroke="#222" stroke-width="1.1"/><path d="M7.00,11.20 L7.00,13.40" stroke="#222" stroke-width="1.1"/><path d="M4.03,9.97 L2.47,11.53" stroke="#222" stroke-width="1.1"/><path d="M2.80,7.00 L0.60,7.00" stroke="#222" stroke-width="1.1"/><path d="M4.03,4.03 L2.47,2.47" stroke="#222" stroke-width="1.1"/><path d="M7.00,2.80 L7.00,0.60" stroke="#222" stroke-width="1.1"/><path d="M9.97,4.03 L11.53,2.47" stroke="#222" stroke-width="1.1"/></svg>
<div class="r" style="left:464.50px;top:91.20px;width:74.00px;height:4.00px;background:linear-gradient(#e6e6e6,#f4f4f4);border:1px solid #d6d6d6;border-radius:3px;box-sizing:border-box;"></div>
<div class="r" style="left:496.80px;top:88.40px;width:9.60px;height:9.60px;background:linear-gradient(#f8f8f8,#e0e0e0);border:1px solid #c4c4c4;border-radius:50%;box-sizing:border-box;"></div>
<div class="r" style="left:544.40px;top:87.20px;width:22.10px;height:11.80px;background:#fff;border:1px solid #d8d8d8;border-radius:2px;box-sizing:border-box;"></div>
<div class="t" style="top:89.43px;font-size:7.3px;color:#333;left:550.40px;">50</div>
<svg class="r" style="left:575.3px;top:86.3px;" width="14" height="14" viewBox="0 0 14 14"><defs><clipPath id="hc575.3"><path d="M7,1.3 A5.7,5.7 0 0 0 7,12.7 Z"/></clipPath></defs><circle cx="7" cy="7" r="6" fill="none" stroke="#222" stroke-width="1.2"/><path d="M7,1 V13" stroke="#222" stroke-width="1.1"/><g clip-path="url(#hc575.3)"><path d="M-2,13 L4,1" stroke="#222" stroke-width="0.8"/><path d="M0,13 L6,1" stroke="#222" stroke-width="0.8"/><path d="M2,13 L8,1" stroke="#222" stroke-width="0.8"/><path d="M4,13 L10,1" stroke="#222" stroke-width="0.8"/><path d="M6,13 L12,1" stroke="#222" stroke-width="0.8"/></g></svg>
<div class="r" style="left:593.80px;top:91.20px;width:74.10px;height:4.00px;background:linear-gradient(#e6e6e6,#f4f4f4);border:1px solid #d6d6d6;border-radius:3px;box-sizing:border-box;"></div>
<div class="r" style="left:626.90px;top:88.40px;width:9.60px;height:9.60px;background:linear-gradient(#f8f8f8,#e0e0e0);border:1px solid #c4c4c4;border-radius:50%;box-sizing:border-box;"></div>
<div class="r" style="left:674.30px;top:87.20px;width:22.50px;height:11.80px;background:#fff;border:1px solid #d8d8d8;border-radius:2px;box-sizing:border-box;"></div>
<div class="t" style="top:89.43px;font-size:7.3px;color:#333;left:680.30px;">50</div>
<svg class="r" style="left:704.6px;top:86.3px;" width="15" height="14" viewBox="0 0 15 14"><path d="M7.5,1 C11.5,1 14.2,3.6 14.2,6.6 C14.2,8.8 12.4,9.4 11,9.2 C9.6,9 9,10 9.6,11.2 C10.2,12.6 9.2,13.3 7.5,13.3 C3.6,13.3 0.8,10.5 0.8,7 C0.8,3.6 3.8,1 7.5,1Z" fill="none" stroke="#222" stroke-width="1.15"/><circle cx="4" cy="7" r="1.2" fill="none" stroke="#222" stroke-width="0.9"/><circle cx="5.2" cy="3.9" r="1.2" fill="none" stroke="#222" stroke-width="0.9"/><circle cx="8.5" cy="3.4" r="1.2" fill="none" stroke="#222" stroke-width="0.9"/><circle cx="11.3" cy="5.4" r="1.2" fill="none" stroke="#222" stroke-width="0.9"/></svg>
<div class="r" style="left:721.50px;top:85.00px;width:85.10px;height:16.00px;background:linear-gradient(#efefef,#e4e4e4);border:1px solid #d2d2d2;border-radius:3px;box-sizing:border-box;"></div>
<div class="r" style="left:725.30px;top:88.00px;width:17.40px;height:10.00px;background:linear-gradient(90deg,#00008f,#0000ff,#00ffff,#ffff00,#ff0000,#800000);border:1px solid #555;box-sizing:border-box;"></div>
<div class="t" style="top:90.08px;font-size:6.2px;color:#333;letter-spacing:-0.2px;left:744.30px;">Jet Black</div>
<svg class="r" style="left:797.5px;top:91.5px;" width="6" height="4" viewBox="0 0 6 4"><path d="M0,0 H5.5 L2.75,3.2Z" fill="#333"/></svg>
<div class="r" style="left:809.00px;top:85.00px;width:21.40px;height:16.00px;background:linear-gradient(#efefef,#e4e4e4);border:1px solid #d2d2d2;border-radius:3px;box-sizing:border-box;"></div>
<svg class="r" style="left:812.8px;top:86.3px;" width="14" height="14" viewBox="0 0 14 14"><circle cx="7" cy="7" r="5.6" fill="none" stroke="#111" stroke-width="1.3"/><path d="M7,1.4 A5.6,5.6 0 0 1 7,12.6Z" fill="#111"/></svg>
<div class="r" style="left:839.00px;top:84.00px;width:1.00px;height:18.00px;background:#d8d8d8;"></div>
<div class="r" style="left:850.30px;top:84.50px;width:19.00px;height:17.00px;background:linear-gradient(#efefef,#e4e4e4);border:1px solid #d2d2d2;border-radius:3px;box-sizing:border-box;"></div>
<svg class="r" style="left:852.6px;top:86.3px;" width="14" height="15" viewBox="0 0 14 15"><path d="M3.6,8.2 L3.6,3.4 C3.6,2.3 5.3,2.3 5.3,3.4 L5.3,2.1 C5.3,1 7,1 7,2.1 L7,1.7 C7,0.6 8.7,0.6 8.7,1.7 L8.7,2.5 C8.7,1.4 10.4,1.4 10.4,2.5 L10.4,4.2 C10.4,3.2 12.2,3.2 12.2,4.3 L12.2,10 C12.2,12.6 10.5,14.3 8.1,14.3 L6.8,14.3 C5.4,14.3 4.5,13.7 3.8,12.7 L1.3,9.4 C0.7,8.5 1.7,7.5 2.6,8.2 Z" fill="none" stroke="#111" stroke-width="1.25" stroke-linejoin="round"/><path d="M5.3,3.2 V7.2 M7,2 V7.2 M8.7,2.4 V7.2 M10.4,4 V7.4" stroke="#111" stroke-width="0.9"/></svg>
<div class="r" style="left:871.80px;top:84.50px;width:41.20px;height:17.00px;background:linear-gradient(#efefef,#e4e4e4);border:1px solid #d2d2d2;border-radius:3px;box-sizing:border-box;"></div>
<svg class="r" style="left:875px;top:86.4px;" width="14" height="14" viewBox="0 0 14 14"><path d="M4.4,0.3 V4.4 H0.2 M9.6,0.3 V4.4 H13.8 M4.4,13.7 V9.6 H0.2 M9.6,13.7 V9.6 H13.8" fill="none" stroke="#222" stroke-width="1.3"/></svg>
<div class="t" style="top:89.78px;font-size:7.4px;color:#333;letter-spacing:-0.082px;left:891.90px;">Fit All</div>
<div class="r" style="left:915.80px;top:84.50px;width:82.60px;height:17.00px;background:linear-gradient(#efefef,#e4e4e4);border:1px solid #d2d2d2;border-radius:3px;box-sizing:border-box;"></div>
<svg class="r" style="left:919.5px;top:86.3px;" width="14" height="14" viewBox="0 0 14 14"><rect x="0.8" y="0.8" width="10.5" height="10" fill="none" stroke="#222" stroke-width="1.1" stroke-dasharray="1.6 1.3"/><rect x="5" y="5" width="8" height="8.5" fill="#f0f0f0"/><circle cx="8.3" cy="8.6" r="2.4" fill="none" stroke="#222" stroke-width="1.3"/><path d="M10,10.3 L12.8,13.2" stroke="#222" stroke-width="1.6"/></svg>
<div class="t" style="top:89.63px;font-size:7.5px;color:#333;letter-spacing:-0.115px;left:935.70px;">Zoom to Selection</div>
<svg class="r" style="left:1011.5px;top:90px;" width="8" height="7" viewBox="0 0 8 7"><path d="M0.5,0.5 L3.5,3.5 L0.5,6.5 M4.3,0.5 L7.3,3.5 L4.3,6.5" fill="none" stroke="#444" stroke-width="1"/></svg>
<div class="r" style="left:259.00px;top:106.50px;width:752.00px;height:13.80px;background:transparent;border:1px solid #dadada;border-radius:4px;box-sizing:border-box;"></div>
<div class="r" style="left:259.00px;top:106.50px;width:752.00px;height:13.80px;background:transparent;border:1.7px dotted #b455e4;border-radius:4px;box-sizing:border-box;-webkit-mask-image:linear-gradient(90deg,#000 0px,#000 30px,transparent 75px,transparent 675px,#000 730px,#000 752px);"></div>
<div class="r" style="left:259.00px;top:106.50px;width:752.00px;height:13.80px;background:transparent;border:1.2px solid #b455e4;border-radius:4px;box-sizing:border-box;-webkit-mask-image:linear-gradient(90deg,#000 0px,#000 12px,transparent 40px,transparent 710px,#000 745px,#000 752px);"></div>
<div class="r" style="left:278.00px;top:110.00px;width:731.00px;height:0.80px;background:#cfcfcf;"></div>
<div class="t" style="top:107.38px;font-size:6.6px;color:#444;letter-spacing:-0.25px;left:279.80px;font-weight:bold;">-0.852</div>
<svg class="r" style="left:1014px;top:106px;" width="7" height="5" viewBox="0 0 7 5"><path d="M0.5,4.2 L3.5,1 L6.5,4.2" fill="none" stroke="#999" stroke-width="0.9"/></svg>
<div class="r" style="left:257.00px;top:122.70px;width:753.00px;height:0.90px;background:#d9d9d9;"></div>
<div class="r" style="left:257.00px;top:485.20px;width:766.00px;height:0.80px;background:#d6d6d6;"></div>
<div class="r" style="left:257.00px;top:488.00px;width:766.00px;height:17.50px;background:#dcdcdc;"></div>
<div class="r" style="left:257.00px;top:487.20px;width:766.00px;height:0.80px;background:#ececec;"></div>
<div class="t" style="top:431.93px;font-size:6.7px;color:#6c6c6c;letter-spacing:-0.3px;right:725.60px;">0.0</div>
<div class="r" style="left:299.50px;top:434.60px;width:3.00px;height:0.90px;background:#b0b0b0;"></div>
<div class="t" style="top:412.50px;font-size:6.7px;color:#6c6c6c;letter-spacing:-0.3px;right:725.60px;">1.0</div>
<div class="r" style="left:299.50px;top:415.17px;width:3.00px;height:0.90px;background:#b0b0b0;"></div>
<div class="t" style="top:393.07px;font-size:6.7px;color:#6c6c6c;letter-spacing:-0.3px;right:725.60px;">2.0</div>
<div class="r" style="left:299.50px;top:395.74px;width:3.00px;height:0.90px;background:#b0b0b0;"></div>
<div class="t" style="top:373.64px;font-size:6.7px;color:#6c6c6c;letter-spacing:-0.3px;right:725.60px;">3.0</div>
<div class="r" style="left:299.50px;top:376.31px;width:3.00px;height:0.90px;background:#b0b0b0;"></div>
<div class="t" style="top:354.21px;font-size:6.7px;color:#6c6c6c;letter-spacing:-0.3px;right:725.60px;">4.0</div>
<div class="r" style="left:299.50px;top:356.88px;width:3.00px;height:0.90px;background:#b0b0b0;"></div>
<div class="t" style="top:334.78px;font-size:6.7px;color:#6c6c6c;letter-spacing:-0.3px;right:725.60px;">5.0</div>
<div class="r" style="left:299.50px;top:337.45px;width:3.00px;height:0.90px;background:#b0b0b0;"></div>
<div class="t" style="top:315.35px;font-size:6.7px;color:#6c6c6c;letter-spacing:-0.3px;right:725.60px;">6.0</div>
<div class="r" style="left:299.50px;top:318.02px;width:3.00px;height:0.90px;background:#b0b0b0;"></div>
<div class="t" style="top:295.92px;font-size:6.7px;color:#6c6c6c;letter-spacing:-0.3px;right:725.60px;">7.0</div>
<div class="r" style="left:299.50px;top:298.59px;width:3.00px;height:0.90px;background:#b0b0b0;"></div>
<div class="t" style="top:276.49px;font-size:6.7px;color:#6c6c6c;letter-spacing:-0.3px;right:725.60px;">8.0</div>
<div class="r" style="left:299.50px;top:279.16px;width:3.00px;height:0.90px;background:#b0b0b0;"></div>
<div class="t" style="top:257.06px;font-size:6.7px;color:#6c6c6c;letter-spacing:-0.3px;right:725.60px;">9.0</div>
<div class="r" style="left:299.50px;top:259.73px;width:3.00px;height:0.90px;background:#b0b0b0;"></div>
<div class="t" style="top:237.63px;font-size:6.7px;color:#6c6c6c;letter-spacing:-0.3px;right:725.60px;">10.0</div>
<div class="r" style="left:299.50px;top:240.30px;width:3.00px;height:0.90px;background:#b0b0b0;"></div>
<div class="t" style="top:218.20px;font-size:6.7px;color:#6c6c6c;letter-spacing:-0.3px;right:725.60px;">11.0</div>
<div class="r" style="left:299.50px;top:220.87px;width:3.00px;height:0.90px;background:#b0b0b0;"></div>
<div class="t" style="top:198.77px;font-size:6.7px;color:#6c6c6c;letter-spacing:-0.3px;right:725.60px;">12.0</div>
<div class="r" style="left:299.50px;top:201.44px;width:3.00px;height:0.90px;background:#b0b0b0;"></div>
<div class="t" style="top:179.34px;font-size:6.7px;color:#6c6c6c;letter-spacing:-0.3px;right:725.60px;">13.0</div>
<div class="r" style="left:299.50px;top:182.01px;width:3.00px;height:0.90px;background:#b0b0b0;"></div>
<div class="t" style="top:159.91px;font-size:6.7px;color:#6c6c6c;letter-spacing:-0.3px;right:725.60px;">14.0</div>
<div class="r" style="left:299.50px;top:162.58px;width:3.00px;height:0.90px;background:#b0b0b0;"></div>
<div class="t" style="top:140.48px;font-size:6.7px;color:#6c6c6c;letter-spacing:-0.3px;right:725.60px;">15.0</div>
<div class="r" style="left:299.50px;top:143.15px;width:3.00px;height:0.90px;background:#b0b0b0;"></div>
<div class="t" style="top:125.53px;font-size:6.7px;color:#6c6c6c;letter-spacing:-0.3px;right:725.60px;">15.8</div>
<div class="r" style="left:300.80px;top:434.70px;width:1.50px;height:0.60px;background:#c4c4c4;"></div>
<div class="r" style="left:300.80px;top:430.81px;width:1.50px;height:0.60px;background:#c4c4c4;"></div>
<div class="r" style="left:300.80px;top:426.93px;width:1.50px;height:0.60px;background:#c4c4c4;"></div>
<div class="r" style="left:300.80px;top:423.04px;width:1.50px;height:0.60px;background:#c4c4c4;"></div>
<div class="r" style="left:300.80px;top:419.16px;width:1.50px;height:0.60px;background:#c4c4c4;"></div>
<div class="r" style="left:300.80px;top:415.27px;width:1.50px;height:0.60px;background:#c4c4c4;"></div>
<div class="r" style="left:300.80px;top:411.38px;width:1.50px;height:0.60px;background:#c4c4c4;"></div>
<div class="r" style="left:300.80px;top:407.50px;width:1.50px;height:0.60px;background:#c4c4c4;"></div>
<div class="r" style="left:300.80px;top:403.61px;width:1.50px;height:0.60px;background:#c4c4c4;"></div>
<div class="r" style="left:300.80px;top:399.73px;width:1.50px;height:0.60px;background:#c4c4c4;"></div>
<div class="r" style="left:300.80px;top:395.84px;width:1.50px;height:0.60px;background:#c4c4c4;"></div>
<div class="r" style="left:300.80px;top:391.95px;width:1.50px;height:0.60px;background:#c4c4c4;"></div>
<div class="r" style="left:300.80px;top:388.07px;width:1.50px;height:0.60px;background:#c4c4c4;"></div>
<div class="r" style="left:300.80px;top:384.18px;width:1.50px;height:0.60px;background:#c4c4c4;"></div>
<div class="r" style="left:300.80px;top:380.30px;width:1.50px;height:0.60px;background:#c4c4c4;"></div>
<div class="r" style="left:300.80px;top:376.41px;width:1.50px;height:0.60px;background:#c4c4c4;"></div>
<div class="r" style="left:300.80px;top:372.52px;width:1.50px;height:0.60px;background:#c4c4c4;"></div>
<div class="r" style="left:300.80px;top:368.64px;width:1.50px;height:0.60px;background:#c4c4c4;"></div>
<div class="r" style="left:300.80px;top:364.75px;width:1.50px;height:0.60px;background:#c4c4c4;"></div>
<div class="r" style="left:300.80px;top:360.87px;width:1.50px;height:0.60px;background:#c4c4c4;"></div>
<div class="r" style="left:300.80px;top:356.98px;width:1.50px;height:0.60px;background:#c4c4c4;"></div>
<div class="r" style="left:300.80px;top:353.09px;width:1.50px;height:0.60px;background:#c4c4c4;"></div>
<div class="r" style="left:300.80px;top:349.21px;width:1.50px;height:0.60px;background:#c4c4c4;"></div>
<div class="r" style="left:300.80px;top:345.32px;width:1.50px;height:0.60px;background:#c4c4c4;"></div>
<div class="r" style="left:300.80px;top:341.44px;width:1.50px;height:0.60px;background:#c4c4c4;"></div>
<div class="r" style="left:300.80px;top:337.55px;width:1.50px;height:0.60px;background:#c4c4c4;"></div>
<div class="r" style="left:300.80px;top:333.66px;width:1.50px;height:0.60px;background:#c4c4c4;"></div>
<div class="r" style="left:300.80px;top:329.78px;width:1.50px;height:0.60px;background:#c4c4c4;"></div>
<div class="r" style="left:300.80px;top:325.89px;width:1.50px;height:0.60px;background:#c4c4c4;"></div>
<div class="r" style="left:300.80px;top:322.01px;width:1.50px;height:0.60px;background:#c4c4c4;"></div>
<div class="r" style="left:300.80px;top:318.12px;width:1.50px;height:0.60px;background:#c4c4c4;"></div>
<div class="r" style="left:300.80px;top:314.23px;width:1.50px;height:0.60px;background:#c4c4c4;"></div>
<div class="r" style="left:300.80px;top:310.35px;width:1.50px;height:0.60px;background:#c4c4c4;"></div>
<div class="r" style="left:300.80px;top:306.46px;width:1.50px;height:0.60px;background:#c4c4c4;"></div>
<div class="r" style="left:300.80px;top:302.58px;width:1.50px;height:0.60px;background:#c4c4c4;"></div>
<div class="r" style="left:300.80px;top:298.69px;width:1.50px;height:0.60px;background:#c4c4c4;"></div>
<div class="r" style="left:300.80px;top:294.80px;width:1.50px;height:0.60px;background:#c4c4c4;"></div>
<div class="r" style="left:300.80px;top:290.92px;width:1.50px;height:0.60px;background:#c4c4c4;"></div>
<div class="r" style="left:300.80px;top:287.03px;width:1.50px;height:0.60px;background:#c4c4c4;"></div>
<div class="r" style="left:300.80px;top:283.15px;width:1.50px;height:0.60px;background:#c4c4c4;"></div>
<div class="r" style="left:300.80px;top:279.26px;width:1.50px;height:0.60px;background:#c4c4c4;"></div>
<div class="r" style="left:300.80px;top:275.37px;width:1.50px;height:0.60px;background:#c4c4c4;"></div>
<div class="r" style="left:300.80px;top:271.49px;width:1.50px;height:0.60px;background:#c4c4c4;"></div>
<div class="r" style="left:300.80px;top:267.60px;width:1.50px;height:0.60px;background:#c4c4c4;"></div>
<div class="r" style="left:300.80px;top:263.72px;width:1.50px;height:0.60px;background:#c4c4c4;"></div>
<div class="r" style="left:300.80px;top:259.83px;width:1.50px;height:0.60px;background:#c4c4c4;"></div>
<div class="r" style="left:300.80px;top:255.94px;width:1.50px;height:0.60px;background:#c4c4c4;"></div>
<div class="r" style="left:300.80px;top:252.06px;width:1.50px;height:0.60px;background:#c4c4c4;"></div>
<div class="r" style="left:300.80px;top:248.17px;width:1.50px;height:0.60px;background:#c4c4c4;"></div>
<div class="r" style="left:300.80px;top:244.29px;width:1.50px;height:0.60px;background:#c4c4c4;"></div>
<div class="r" style="left:300.80px;top:240.40px;width:1.50px;height:0.60px;background:#c4c4c4;"></div>
<div class="r" style="left:300.80px;top:236.51px;width:1.50px;height:0.60px;background:#c4c4c4;"></div>
<div class="r" style="left:300.80px;top:232.63px;width:1.50px;height:0.60px;background:#c4c4c4;"></div>
<div class="r" style="left:300.80px;top:228.74px;width:1.50px;height:0.60px;background:#c4c4c4;"></div>
<div class="r" style="left:300.80px;top:224.86px;width:1.50px;height:0.60px;background:#c4c4c4;"></div>
<div class="r" style="left:300.80px;top:220.97px;width:1.50px;height:0.60px;background:#c4c4c4;"></div>
<div class="r" style="left:300.80px;top:217.08px;width:1.50px;height:0.60px;background:#c4c4c4;"></div>
<div class="r" style="left:300.80px;top:213.20px;width:1.50px;height:0.60px;background:#c4c4c4;"></div>
<div class="r" style="left:300.80px;top:209.31px;width:1.50px;height:0.60px;background:#c4c4c4;"></div>
<div class="r" style="left:300.80px;top:205.43px;width:1.50px;height:0.60px;background:#c4c4c4;"></div>
<div class="r" style="left:300.80px;top:201.54px;width:1.50px;height:0.60px;background:#c4c4c4;"></div>
<div class="r" style="left:300.80px;top:197.65px;width:1.50px;height:0.60px;background:#c4c4c4;"></div>
<div class="r" style="left:300.80px;top:193.77px;width:1.50px;height:0.60px;background:#c4c4c4;"></div>
<div class="r" style="left:300.80px;top:189.88px;width:1.50px;height:0.60px;background:#c4c4c4;"></div>
<div class="r" style="left:300.80px;top:186.00px;width:1.50px;height:0.60px;background:#c4c4c4;"></div>
<div class="r" style="left:300.80px;top:182.11px;width:1.50px;height:0.60px;background:#c4c4c4;"></div>
<div class="r" style="left:300.80px;top:178.22px;width:1.50px;height:0.60px;background:#c4c4c4;"></div>
<div class="r" style="left:300.80px;top:174.34px;width:1.50px;height:0.60px;background:#c4c4c4;"></div>
<div class="r" style="left:300.80px;top:170.45px;width:1.50px;height:0.60px;background:#c4c4c4;"></div>
<div class="r" style="left:300.80px;top:166.57px;width:1.50px;height:0.60px;background:#c4c4c4;"></div>
<div class="r" style="left:300.80px;top:162.68px;width:1.50px;height:0.60px;background:#c4c4c4;"></div>
<div class="r" style="left:300.80px;top:158.79px;width:1.50px;height:0.60px;background:#c4c4c4;"></div>
<div class="r" style="left:300.80px;top:154.91px;width:1.50px;height:0.60px;background:#c4c4c4;"></div>
<div class="r" style="left:300.80px;top:151.02px;width:1.50px;height:0.60px;background:#c4c4c4;"></div>
<div class="r" style="left:300.80px;top:147.14px;width:1.50px;height:0.60px;background:#c4c4c4;"></div>
<div class="r" style="left:300.80px;top:143.25px;width:1.50px;height:0.60px;background:#c4c4c4;"></div>
<div class="r" style="left:300.80px;top:139.36px;width:1.50px;height:0.60px;background:#c4c4c4;"></div>
<div class="r" style="left:300.80px;top:135.48px;width:1.50px;height:0.60px;background:#c4c4c4;"></div>
<div class="r" style="left:300.80px;top:131.59px;width:1.50px;height:0.60px;background:#c4c4c4;"></div>
<div class="t" style="top:277.48px;font-size:7.0px;color:#6a6a6a;letter-spacing:-0.15px;left:-31.70px;width:600px;text-align:center;transform:rotate(-90deg);">Frequency</div>
<div class="r" style="left:315.70px;top:435.00px;width:1.20px;height:6.50px;background:#666;"></div>
<div class="t" style="top:443.88px;font-size:7.0px;color:#6c6c6c;letter-spacing:-0.478px;left:16.30px;width:600px;text-align:center;">13:48:01</div>
<div class="r" style="left:351.65px;top:435.00px;width:1.20px;height:6.50px;background:#666;"></div>
<div class="t" style="top:443.88px;font-size:7.0px;color:#6c6c6c;letter-spacing:-0.478px;left:52.25px;width:600px;text-align:center;">13:48:02</div>
<div class="r" style="left:387.60px;top:435.00px;width:1.20px;height:6.50px;background:#666;"></div>
<div class="t" style="top:443.88px;font-size:7.0px;color:#6c6c6c;letter-spacing:-0.478px;left:88.20px;width:600px;text-align:center;">13:48:03</div>
<div class="r" style="left:423.55px;top:435.00px;width:1.20px;height:6.50px;background:#666;"></div>
<div class="t" style="top:443.88px;font-size:7.0px;color:#6c6c6c;letter-spacing:-0.478px;left:124.15px;width:600px;text-align:center;">13:48:04</div>
<div class="r" style="left:459.50px;top:435.00px;width:1.20px;height:6.50px;background:#666;"></div>
<div class="t" style="top:443.88px;font-size:7.0px;color:#6c6c6c;letter-spacing:-0.478px;left:160.10px;width:600px;text-align:center;">13:48:05</div>
<div class="r" style="left:495.45px;top:435.00px;width:1.20px;height:6.50px;background:#666;"></div>
<div class="t" style="top:443.88px;font-size:7.0px;color:#6c6c6c;letter-spacing:-0.478px;left:196.05px;width:600px;text-align:center;">13:48:06</div>
<div class="r" style="left:531.40px;top:435.00px;width:1.20px;height:6.50px;background:#666;"></div>
<div class="t" style="top:443.88px;font-size:7.0px;color:#6c6c6c;letter-spacing:-0.478px;left:232.00px;width:600px;text-align:center;">13:48:07</div>
<div class="r" style="left:567.35px;top:435.00px;width:1.20px;height:6.50px;background:#666;"></div>
<div class="t" style="top:443.88px;font-size:7.0px;color:#6c6c6c;letter-spacing:-0.478px;left:267.95px;width:600px;text-align:center;">13:48:08</div>
<div class="r" style="left:603.30px;top:435.00px;width:1.20px;height:6.50px;background:#666;"></div>
<div class="t" style="top:443.88px;font-size:7.0px;color:#6c6c6c;letter-spacing:-0.478px;left:303.90px;width:600px;text-align:center;">13:48:09</div>
<div class="r" style="left:639.25px;top:435.00px;width:1.20px;height:6.50px;background:#666;"></div>
<div class="t" style="top:443.88px;font-size:7.0px;color:#6c6c6c;letter-spacing:-0.478px;left:339.85px;width:600px;text-align:center;">13:48:10</div>
<div class="r" style="left:675.20px;top:435.00px;width:1.20px;height:6.50px;background:#666;"></div>
<div class="t" style="top:443.88px;font-size:7.0px;color:#6c6c6c;letter-spacing:-0.404px;left:375.80px;width:600px;text-align:center;">13:48:11</div>
<div class="r" style="left:711.15px;top:435.00px;width:1.20px;height:6.50px;background:#666;"></div>
<div class="t" style="top:443.88px;font-size:7.0px;color:#6c6c6c;letter-spacing:-0.478px;left:411.75px;width:600px;text-align:center;">13:48:12</div>
<div class="r" style="left:747.10px;top:435.00px;width:1.20px;height:6.50px;background:#666;"></div>
<div class="t" style="top:443.88px;font-size:7.0px;color:#6c6c6c;letter-spacing:-0.478px;left:447.70px;width:600px;text-align:center;">13:48:13</div>
<div class="r" style="left:783.05px;top:435.00px;width:1.20px;height:6.50px;background:#666;"></div>
<div class="t" style="top:443.88px;font-size:7.0px;color:#6c6c6c;letter-spacing:-0.478px;left:483.65px;width:600px;text-align:center;">13:48:14</div>
<div class="r" style="left:819.00px;top:435.00px;width:1.20px;height:6.50px;background:#666;"></div>
<div class="t" style="top:443.88px;font-size:7.0px;color:#6c6c6c;letter-spacing:-0.478px;left:519.60px;width:600px;text-align:center;">13:48:15</div>
<div class="r" style="left:854.95px;top:435.00px;width:1.20px;height:6.50px;background:#666;"></div>
<div class="t" style="top:443.88px;font-size:7.0px;color:#6c6c6c;letter-spacing:-0.478px;left:555.55px;width:600px;text-align:center;">13:48:16</div>
<div class="r" style="left:890.90px;top:435.00px;width:1.20px;height:6.50px;background:#666;"></div>
<div class="t" style="top:443.88px;font-size:7.0px;color:#6c6c6c;letter-spacing:-0.478px;left:591.50px;width:600px;text-align:center;">13:48:17</div>
<div class="r" style="left:926.85px;top:435.00px;width:1.20px;height:6.50px;background:#666;"></div>
<div class="t" style="top:443.88px;font-size:7.0px;color:#6c6c6c;letter-spacing:-0.478px;left:627.45px;width:600px;text-align:center;">13:48:18</div>
<div class="r" style="left:962.80px;top:435.00px;width:1.20px;height:6.50px;background:#666;"></div>
<div class="t" style="top:443.88px;font-size:7.0px;color:#6c6c6c;letter-spacing:-0.478px;left:663.40px;width:600px;text-align:center;">13:48:19</div>
<div class="r" style="left:998.75px;top:435.00px;width:1.20px;height:6.50px;background:#666;"></div>
<div class="t" style="top:443.88px;font-size:7.0px;color:#6c6c6c;letter-spacing:-0.478px;left:699.35px;width:600px;text-align:center;">13:48:20</div>
<div class="r" style="left:1012.80px;top:124.00px;width:8.20px;height:312.00px;background:#ececec;border-radius:1px;"></div>
<div class="r" style="left:1013.60px;top:223.00px;width:6.80px;height:210.00px;background:linear-gradient(90deg,#f4f4f4,#e6e6e6);border:1px solid #cfcfcf;border-radius:2px;box-sizing:border-box;"></div>
<svg class="r" style="left:1014px;top:435.5px;" width="7" height="5" viewBox="0 0 7 5"><path d="M0.5,0.8 L3.5,4 L6.5,0.8" fill="none" stroke="#aaa" stroke-width="0.9"/></svg>
<div class="r" style="left:1012.70px;top:443.50px;width:9.00px;height:9.00px;background:linear-gradient(#efefef,#e4e4e4);border:1px solid #d2d2d2;border-radius:3px;box-sizing:border-box;"></div>
<svg class="r" style="left:1013.7px;top:444.5px;" width="7" height="7" viewBox="0 0 7 7"><path d="M3.5,0.5 V6.5 M0.5,3.5 H6.5" stroke="#222" stroke-width="1.1"/></svg>
<div class="r" style="left:1012.70px;top:454.30px;width:9.00px;height:8.70px;background:linear-gradient(#efefef,#e4e4e4);border:1px solid #d2d2d2;border-radius:3px;box-sizing:border-box;"></div>
<svg class="r" style="left:1013.7px;top:455.3px;" width="7" height="7" viewBox="0 0 7 7"><path d="M0.8,3.5 H6.2" stroke="#222" stroke-width="1.1"/></svg>
<div class="r" style="left:1012.70px;top:464.40px;width:9.00px;height:9.90px;background:linear-gradient(#efefef,#e4e4e4);border:1px solid #d2d2d2;border-radius:3px;box-sizing:border-box;"></div>
<svg class="r" style="left:1013.7px;top:465.4px;" width="7" height="8" viewBox="0 0 7 8"><path d="M3.5,0.8 V7.2 M1.6,2.6 L3.5,0.8 L5.4,2.6 M1.6,5.4 L3.5,7.2 L5.4,5.4" fill="none" stroke="#222" stroke-width="1.1"/></svg>
<div class="r" style="left:258.00px;top:475.00px;width:720.00px;height:9.60px;background:#ececec;"></div>
<div class="r" style="left:407.80px;top:476.30px;width:13.70px;height:6.50px;background:linear-gradient(#f6f6f6,#e4e4e4);border:1px solid #c9c9c9;border-radius:3px;box-sizing:border-box;"></div>
<svg class="r" style="left:259.5px;top:476.5px;" width="5" height="7" viewBox="0 0 5 7"><path d="M4,0.8 L1,3.5 L4,6.2" fill="none" stroke="#aaa" stroke-width="0.9"/></svg>
<svg class="r" style="left:972.5px;top:476.5px;" width="5" height="7" viewBox="0 0 5 7"><path d="M1,0.8 L4,3.5 L1,6.2" fill="none" stroke="#aaa" stroke-width="0.9"/></svg>
<div class="r" style="left:979.60px;top:474.70px;width:9.80px;height:9.10px;background:linear-gradient(#efefef,#e4e4e4);border:1px solid #d2d2d2;border-radius:3px;box-sizing:border-box;"></div>
<svg class="r" style="left:981.0px;top:475.8px;" width="7" height="7" viewBox="0 0 7 7"><path d="M3.5,0.5 V6.5 M0.5,3.5 H6.5" stroke="#222" stroke-width="1.1"/></svg>
<div class="r" style="left:990.40px;top:474.70px;width:9.80px;height:9.10px;background:linear-gradient(#efefef,#e4e4e4);border:1px solid #d2d2d2;border-radius:3px;box-sizing:border-box;"></div>
<svg class="r" style="left:991.8px;top:475.8px;" width="7" height="7" viewBox="0 0 7 7"><path d="M0.8,3.5 H6.2" stroke="#222" stroke-width="1.1"/></svg>
<div class="r" style="left:1001.20px;top:474.70px;width:10.80px;height:9.10px;background:linear-gradient(#efefef,#e4e4e4);border:1px solid #d2d2d2;border-radius:3px;box-sizing:border-box;"></div>
<svg class="r" style="left:1002.6px;top:475.8px;" width="8" height="7" viewBox="0 0 8 7"><path d="M0.8,3.5 H7.2 M2.6,1.6 L0.8,3.5 L2.6,5.4 M5.4,1.6 L7.2,3.5 L5.4,5.4" fill="none" stroke="#222" stroke-width="1.1"/></svg>
<div class="r" style="left:258.80px;top:491.00px;width:13.20px;height:13.20px;background:linear-gradient(#efefef,#e4e4e4);border:1px solid #d2d2d2;border-radius:3px;box-sizing:border-box;background:linear-gradient(#f4f4f4,#e8e8e8);"></div>
<svg class="r" style="left:262px;top:494px;" width="7" height="7" viewBox="0 0 7 7"><path d="M3.5,0.3 V6.7 M0.3,3.5 H6.7" stroke="#222" stroke-width="1.1"/></svg>
<div class="r" style="left:274.00px;top:490.50px;width:29.20px;height:15.50px;background:#f4f4f4;border:1px solid #cfcfcf;border-bottom:none;border-radius:2px 2px 0 0;box-sizing:border-box;"></div>
<div class="t" style="top:494.63px;font-size:7.3px;color:#333;letter-spacing:-0.273px;left:277.90px;">Table 1</div>
<div class="r" style="left:783.20px;top:507.90px;width:11.10px;height:10.30px;background:linear-gradient(#f0f0f0,#e2e2e2);border:1px solid #d0d0d0;border-radius:2px;box-sizing:border-box;"></div>
<svg class="r" style="left:784.5px;top:509px;" width="9" height="8" viewBox="0 0 9 8"><path d="M1,4.2 L3.3,6.8 L8,0.8" fill="none" stroke="#333" stroke-width="1.2"/></svg>
<div class="t" style="top:509.28px;font-size:7.4px;color:#333;letter-spacing:-0.137px;left:798.10px;">Show</div>
<div class="r" style="left:258.20px;top:521.50px;width:763.40px;height:16.10px;background:linear-gradient(#f2f2f2,#e2e2e2);border:1px solid #d6d6d6;border-bottom:none;box-sizing:border-box;"></div>
<div class="r" style="left:304.30px;top:522.00px;width:0.80px;height:15.60px;background:#d4d4d4;"></div>
<div class="r" style="left:352.50px;top:522.00px;width:0.80px;height:15.60px;background:#d4d4d4;"></div>
<div class="r" style="left:407.00px;top:522.00px;width:0.80px;height:15.60px;background:#d4d4d4;"></div>
<div class="r" style="left:458.50px;top:522.00px;width:0.80px;height:15.60px;background:#d4d4d4;"></div>
<div class="r" style="left:509.80px;top:522.00px;width:0.80px;height:15.60px;background:#d4d4d4;"></div>
<div class="r" style="left:562.60px;top:522.00px;width:0.80px;height:15.60px;background:#d4d4d4;"></div>
<div class="r" style="left:258.20px;top:537.60px;width:763.40px;height:20.40px;background:#ffffff;border:1px solid #d6d6d6;border-top:none;box-sizing:border-box;"></div>
<div class="t" style="top:523.53px;font-size:7.3px;color:#333;letter-spacing:-0.052px;left:-18.20px;width:600px;text-align:center;">ID</div>
<div class="t" style="top:523.53px;font-size:7.3px;color:#333;letter-spacing:-0.032px;left:28.10px;width:600px;text-align:center;">Channel</div>
<div class="t" style="top:523.53px;font-size:7.3px;color:#333;letter-spacing:-0.027px;left:79.90px;width:600px;text-align:center;">Begin time</div>
<div class="t" style="top:523.53px;font-size:7.3px;color:#333;letter-spacing:-0.031px;left:133.60px;width:600px;text-align:center;">End Time</div>
<div class="t" style="top:523.53px;font-size:7.3px;color:#333;letter-spacing:-0.031px;left:183.90px;width:600px;text-align:center;">Low Freq</div>
<div class="t" style="top:523.53px;font-size:7.3px;color:#333;letter-spacing:-0.028px;left:236.00px;width:600px;text-align:center;">High Freq</div>
<div class="t" style="top:532.09px;font-size:4.2px;color:#444;left:79.90px;width:600px;text-align:center;">(s)</div>
<div class="t" style="top:532.09px;font-size:4.2px;color:#444;left:133.60px;width:600px;text-align:center;">(s)</div>
<div class="t" style="top:532.09px;font-size:4.2px;color:#444;left:183.90px;width:600px;text-align:center;">(Hz)</div>
<div class="t" style="top:532.09px;font-size:4.2px;color:#444;left:236.00px;width:600px;text-align:center;">(Hz)</div>
<div class="t" style="top:543.93px;font-size:7.5px;color:#333;letter-spacing:-0.058px;left:609.50px;">No content in table</div>
<div class="r" style="left:257.00px;top:573.80px;width:766.00px;height:0.80px;background:#dcdcdc;"></div>
<div class="t" style="top:575.58px;font-size:7.4px;color:#444;letter-spacing:-0.356px;left:262.50px;">Time:</div>
<div class="t" style="top:575.53px;font-size:7.5px;color:#444;letter-spacing:0.049px;left:286.30px;">2020-12-03T13:48:11.749026642Z</div>
<div class="t" style="top:575.53px;font-size:7.5px;color:#444;letter-spacing:-0.18px;left:409.40px;">Frequency:</div>
<div class="t" style="top:575.53px;font-size:7.5px;color:#444;letter-spacing:-0.115px;left:452.30px;">15242 Hz</div>
<div class="t" style="top:575.23px;font-size:7.5px;color:#444;letter-spacing:-0.114px;left:848.90px;">S1047KF_048K_S01_MIC_20201203_134500Z.flac</div>
<svg class="r" style="left:303px;top:128px;" width="705" height="307" viewBox="0 0 705 307"><defs><filter id="jet" x="0" y="0" width="1" height="1" color-interpolation-filters="sRGB"><feTurbulence type="fractalNoise" baseFrequency="0.4 0.3" numOctaves="2" seed="5" result="n"/><feColorMatrix in="n" type="matrix" values="1 0 0 0 0  1 0 0 0 0  1 0 0 0 0  0 0 0 0 1" result="gn"/><feComposite in="SourceGraphic" in2="gn" operator="arithmetic" k1="0" k2="1" k3="0.36" k4="-0.165" result="sum"/><feComponentTransfer in="sum"><feFuncR type="table" tableValues="0 0 0 0 0 0 0.5 1 1 1 1 1 0.5"/><feFuncG type="table" tableValues="0 0 0 0.1 0.5 1 1 1 0.75 0.25 0 0 0"/><feFuncB type="table" tableValues="0 0.55 0.9 1 1 1 0.5 0 0 0 0 0 0"/></feComponentTransfer></filter></defs><g filter="url(#jet)"><defs><linearGradient id="bg1" x1="0" y1="0" x2="0" y2="1"><stop offset="0" stop-color="rgb(44,44,44)"/><stop offset="0.6" stop-color="rgb(48,48,48)"/><stop offset="0.7" stop-color="rgb(52,52,52)"/><stop offset="0.8" stop-color="rgb(59,59,59)"/><stop offset="0.845" stop-color="rgb(65,65,65)"/><stop offset="0.875" stop-color="rgb(76,76,76)"/><stop offset="0.905" stop-color="rgb(88,88,88)"/><stop offset="0.94" stop-color="rgb(99,99,99)"/><stop offset="0.97" stop-color="rgb(108,108,108)"/><stop offset="0.99" stop-color="rgb(116,116,116)"/><stop offset="1" stop-color="rgb(116,116,116)"/></linearGradient><radialGradient id="hump" cx="0.5" cy="1" r="0.5"><stop offset="0" stop-color="rgb(255,255,255)" stop-opacity="0.11"/><stop offset="1" stop-color="rgb(255,255,255)" stop-opacity="0"/></radialGradient></defs><rect x="0" y="0" width="705" height="307" fill="url(#bg1)"/><rect x="150" y="190" width="560" height="117" fill="url(#hump)"/><ellipse cx="357" cy="302" rx="210" ry="62" fill="url(#hump)"/><rect x="0" y="0.0" width="705" height="3.9" fill="#fff" fill-opacity="0.011"/><rect x="0" y="5.6" width="705" height="4.7" fill="#fff" fill-opacity="0.014"/><rect x="0" y="14.9" width="705" height="2.3" fill="#000" fill-opacity="0.093"/><rect x="0" y="18.9" width="705" height="5.8" fill="#fff" fill-opacity="0.010"/><rect x="0" y="26.6" width="705" height="2.4" fill="#000" fill-opacity="0.096"/><rect x="0" y="31.6" width="705" height="5.0" fill="#000" fill-opacity="0.106"/><rect x="0" y="38.4" width="705" height="2.9" fill="#fff" fill-opacity="0.018"/><rect x="0" y="45.4" width="705" height="5.6" fill="#fff" fill-opacity="0.011"/><rect x="0" y="55.3" width="705" height="2.8" fill="#000" fill-opacity="0.103"/><rect x="0" y="59.3" width="705" height="3.5" fill="#fff" fill-opacity="0.009"/><rect x="0" y="64.8" width="705" height="4.9" fill="#000" fill-opacity="0.109"/><rect x="0" y="70.7" width="705" height="5.1" fill="#000" fill-opacity="0.104"/><rect x="0" y="77.6" width="705" height="2.0" fill="#000" fill-opacity="0.053"/><rect x="0" y="84.3" width="705" height="4.0" fill="#fff" fill-opacity="0.014"/><rect x="0" y="90.1" width="705" height="2.3" fill="#000" fill-opacity="0.087"/><rect x="0" y="93.7" width="705" height="4.3" fill="#000" fill-opacity="0.107"/><rect x="0" y="101.9" width="705" height="2.2" fill="#fff" fill-opacity="0.014"/><rect x="0" y="107.5" width="705" height="2.6" fill="#fff" fill-opacity="0.017"/><rect x="0" y="113.4" width="705" height="2.1" fill="#fff" fill-opacity="0.019"/><rect x="0" y="117.5" width="705" height="4.4" fill="#000" fill-opacity="0.094"/><rect x="0" y="126.3" width="705" height="4.1" fill="#000" fill-opacity="0.102"/><rect x="0" y="131.9" width="705" height="5.5" fill="#fff" fill-opacity="0.013"/><rect x="0" y="140.0" width="705" height="5.9" fill="#000" fill-opacity="0.070"/><rect x="0" y="149.4" width="705" height="2.0" fill="#000" fill-opacity="0.059"/><rect x="0" y="154.2" width="705" height="3.3" fill="#000" fill-opacity="0.065"/><rect x="0" y="159.6" width="705" height="4.1" fill="#000" fill-opacity="0.046"/><rect x="0" y="167.8" width="705" height="5.2" fill="#fff" fill-opacity="0.012"/><rect x="0" y="177.1" width="705" height="4.3" fill="#000" fill-opacity="0.073"/><rect x="0" y="183.3" width="705" height="5.9" fill="#fff" fill-opacity="0.014"/><rect x="0" y="194.0" width="705" height="4.2" fill="#000" fill-opacity="0.089"/><rect x="0" y="199.9" width="705" height="5.4" fill="#fff" fill-opacity="0.008"/><ellipse cx="252" cy="244" rx="40" ry="22" fill="rgb(255,255,255)" fill-opacity="0.04"/><rect x="12.8" y="0" width="1" height="303" fill="rgb(0,0,0)" fill-opacity="0.32"/><rect x="48.8" y="0" width="1" height="303" fill="rgb(0,0,0)" fill-opacity="0.32"/><rect x="84.7" y="0" width="1" height="303" fill="rgb(0,0,0)" fill-opacity="0.32"/><rect x="120.7" y="0" width="1" height="303" fill="rgb(0,0,0)" fill-opacity="0.32"/><rect x="156.6" y="0" width="1" height="303" fill="rgb(0,0,0)" fill-opacity="0.32"/><rect x="192.6" y="0" width="1" height="303" fill="rgb(0,0,0)" fill-opacity="0.32"/><rect x="228.5" y="0" width="1" height="303" fill="rgb(0,0,0)" fill-opacity="0.32"/><rect x="264.5" y="0" width="1" height="303" fill="rgb(0,0,0)" fill-opacity="0.32"/><rect x="300.4" y="0" width="1" height="303" fill="rgb(0,0,0)" fill-opacity="0.32"/><rect x="336.4" y="0" width="1" height="303" fill="rgb(0,0,0)" fill-opacity="0.32"/><rect x="372.3" y="0" width="1" height="303" fill="rgb(0,0,0)" fill-opacity="0.32"/><rect x="408.3" y="0" width="1" height="303" fill="rgb(0,0,0)" fill-opacity="0.32"/><rect x="444.2" y="0" width="1" height="303" fill="rgb(0,0,0)" fill-opacity="0.32"/><rect x="480.2" y="0" width="1" height="303" fill="rgb(0,0,0)" fill-opacity="0.32"/><rect x="516.1" y="0" width="1" height="303" fill="rgb(0,0,0)" fill-opacity="0.32"/><rect x="552.0" y="0" width="1" height="303" fill="rgb(0,0,0)" fill-opacity="0.32"/><rect x="588.0" y="0" width="1" height="303" fill="rgb(0,0,0)" fill-opacity="0.32"/><rect x="624.0" y="0" width="1" height="303" fill="rgb(0,0,0)" fill-opacity="0.32"/><rect x="659.9" y="0" width="1" height="303" fill="rgb(0,0,0)" fill-opacity="0.32"/><rect x="695.9" y="0" width="1" height="303" fill="rgb(0,0,0)" fill-opacity="0.32"/><path d="M0,73.8 H705" stroke="rgb(95,95,95)" stroke-width="1.5" stroke-dasharray="2.5 2 1.5 2.5 3 2"/><path d="M14.5,82 V302" stroke="rgb(78,78,78)" stroke-width="1"/><path d="M325,132 V282" stroke="rgb(62,62,62)" stroke-width="1"/><path d="M144,172 V292" stroke="rgb(55,55,55)" stroke-width="1"/><path d="M567,172 V292" stroke="rgb(50,50,50)" stroke-width="1"/><path d="M0.5,12 V302" stroke="rgb(60,60,60)" stroke-width="1"/><path d="M33.8,59.0 V281.0" stroke="rgb(88,88,88)" stroke-width="1.2"/><path d="M44.0,73.0 V283.0" stroke="rgb(76,76,76)" stroke-width="1.1"/><path d="M33.6,271.0 Q38.8,276.3 44.5,280.5" fill="none" stroke="rgb(68,68,68)" stroke-width="7.9" stroke-linecap="round" stroke-opacity="0.8"/><path d="M33.6,271.0 Q38.8,276.3 44.5,280.5" fill="none" stroke="rgb(94,94,94)" stroke-width="4.699999999999999" stroke-linecap="round"/><path d="M33.6,271.0 Q38.8,276.3 44.5,280.5" fill="none" stroke="rgb(152,152,152)" stroke-width="1.9" stroke-linecap="round"/><path d="M33.6,253.6 Q38.8,259.7 44.5,264.4" fill="none" stroke="rgb(80,80,80)" stroke-width="7.9" stroke-linecap="round" stroke-opacity="0.8"/><path d="M33.6,253.6 Q38.8,259.7 44.5,264.4" fill="none" stroke="rgb(110,110,110)" stroke-width="4.699999999999999" stroke-linecap="round"/><path d="M33.6,253.6 Q38.8,259.7 44.5,264.4" fill="none" stroke="rgb(178,178,178)" stroke-width="1.9" stroke-linecap="round"/><path d="M33.6,236.2 Q38.8,243.0 44.5,248.3" fill="none" stroke="rgb(95,95,95)" stroke-width="7.9" stroke-linecap="round" stroke-opacity="0.8"/><path d="M33.6,236.2 Q38.8,243.0 44.5,248.3" fill="none" stroke="rgb(131,131,131)" stroke-width="4.699999999999999" stroke-linecap="round"/><path d="M33.6,236.2 Q38.8,243.0 44.5,248.3" fill="none" stroke="rgb(212,212,212)" stroke-width="1.9" stroke-linecap="round"/><path d="M33.6,218.8 Q38.8,226.3 44.5,232.2" fill="none" stroke="rgb(74,74,74)" stroke-width="7.9" stroke-linecap="round" stroke-opacity="0.8"/><path d="M33.6,218.8 Q38.8,226.3 44.5,232.2" fill="none" stroke="rgb(102,102,102)" stroke-width="4.699999999999999" stroke-linecap="round"/><path d="M33.6,218.8 Q38.8,226.3 44.5,232.2" fill="none" stroke="rgb(165,165,165)" stroke-width="1.9" stroke-linecap="round"/><path d="M33.6,201.4 Q38.8,209.6 44.5,216.1" fill="none" stroke="rgb(67,67,67)" stroke-width="7.9" stroke-linecap="round" stroke-opacity="0.8"/><path d="M33.6,201.4 Q38.8,209.6 44.5,216.1" fill="none" stroke="rgb(93,93,93)" stroke-width="4.699999999999999" stroke-linecap="round"/><path d="M33.6,201.4 Q38.8,209.6 44.5,216.1" fill="none" stroke="rgb(150,150,150)" stroke-width="1.9" stroke-linecap="round"/><path d="M33.6,184.0 Q38.8,193.0 44.5,200.0" fill="none" stroke="rgb(66,66,66)" stroke-width="7.9" stroke-linecap="round" stroke-opacity="0.8"/><path d="M33.6,184.0 Q38.8,193.0 44.5,200.0" fill="none" stroke="rgb(91,91,91)" stroke-width="4.699999999999999" stroke-linecap="round"/><path d="M33.6,184.0 Q38.8,193.0 44.5,200.0" fill="none" stroke="rgb(148,148,148)" stroke-width="1.9" stroke-linecap="round"/><path d="M33.6,166.6 Q38.8,176.3 44.5,183.9" fill="none" stroke="rgb(66,66,66)" stroke-width="7.9" stroke-linecap="round" stroke-opacity="0.8"/><path d="M33.6,166.6 Q38.8,176.3 44.5,183.9" fill="none" stroke="rgb(91,91,91)" stroke-width="4.699999999999999" stroke-linecap="round"/><path d="M33.6,166.6 Q38.8,176.3 44.5,183.9" fill="none" stroke="rgb(148,148,148)" stroke-width="1.9" stroke-linecap="round"/><path d="M33.6,149.2 Q38.8,159.6 44.5,167.8" fill="none" stroke="rgb(66,66,66)" stroke-width="7.9" stroke-linecap="round" stroke-opacity="0.8"/><path d="M33.6,149.2 Q38.8,159.6 44.5,167.8" fill="none" stroke="rgb(91,91,91)" stroke-width="4.699999999999999" stroke-linecap="round"/><path d="M33.6,149.2 Q38.8,159.6 44.5,167.8" fill="none" stroke="rgb(148,148,148)" stroke-width="1.9" stroke-linecap="round"/><path d="M33.6,131.8 Q38.8,143.0 44.5,151.7" fill="none" stroke="rgb(66,66,66)" stroke-width="7.9" stroke-linecap="round" stroke-opacity="0.8"/><path d="M33.6,131.8 Q38.8,143.0 44.5,151.7" fill="none" stroke="rgb(91,91,91)" stroke-width="4.699999999999999" stroke-linecap="round"/><path d="M33.6,131.8 Q38.8,143.0 44.5,151.7" fill="none" stroke="rgb(148,148,148)" stroke-width="1.9" stroke-linecap="round"/><path d="M33.6,114.4 Q38.8,126.3 44.5,135.6" fill="none" stroke="rgb(56,56,56)" stroke-width="7.9" stroke-linecap="round" stroke-opacity="0.8"/><path d="M33.6,114.4 Q38.8,126.3 44.5,135.6" fill="none" stroke="rgb(77,77,77)" stroke-width="4.699999999999999" stroke-linecap="round"/><path d="M33.6,114.4 Q38.8,126.3 44.5,135.6" fill="none" stroke="rgb(125,125,125)" stroke-width="1.9" stroke-linecap="round"/><path d="M33.6,97.0 Q38.8,109.6 44.5,119.6" fill="none" stroke="rgb(56,56,56)" stroke-width="7.9" stroke-linecap="round" stroke-opacity="0.8"/><path d="M33.6,97.0 Q38.8,109.6 44.5,119.6" fill="none" stroke="rgb(77,77,77)" stroke-width="4.699999999999999" stroke-linecap="round"/><path d="M33.6,97.0 Q38.8,109.6 44.5,119.6" fill="none" stroke="rgb(125,125,125)" stroke-width="1.9" stroke-linecap="round"/><path d="M33.6,79.6 Q38.8,93.0 44.5,103.5" fill="none" stroke="rgb(71,71,71)" stroke-width="3.3" stroke-linecap="round"/><path d="M33.6,79.6 Q38.8,93.0 44.5,103.5" fill="none" stroke="rgb(96,96,96)" stroke-width="1.14" stroke-linecap="round"/><path d="M33.6,62.2 Q38.8,76.3 44.5,87.4" fill="none" stroke="rgb(71,71,71)" stroke-width="3.3" stroke-linecap="round"/><path d="M33.6,62.2 Q38.8,76.3 44.5,87.4" fill="none" stroke="rgb(96,96,96)" stroke-width="1.14" stroke-linecap="round"/><path d="M61.6,60.0 V281.0" stroke="rgb(88,88,88)" stroke-width="1.2"/><path d="M72.3,74.0 V283.0" stroke="rgb(76,76,76)" stroke-width="1.1"/><path d="M61.4,271.0 Q66.8,276.3 72.8,280.5" fill="none" stroke="rgb(68,68,68)" stroke-width="7.9" stroke-linecap="round" stroke-opacity="0.8"/><path d="M61.4,271.0 Q66.8,276.3 72.8,280.5" fill="none" stroke="rgb(94,94,94)" stroke-width="4.699999999999999" stroke-linecap="round"/><path d="M61.4,271.0 Q66.8,276.3 72.8,280.5" fill="none" stroke="rgb(152,152,152)" stroke-width="1.9" stroke-linecap="round"/><path d="M61.4,253.6 Q66.8,259.7 72.8,264.4" fill="none" stroke="rgb(80,80,80)" stroke-width="7.9" stroke-linecap="round" stroke-opacity="0.8"/><path d="M61.4,253.6 Q66.8,259.7 72.8,264.4" fill="none" stroke="rgb(110,110,110)" stroke-width="4.699999999999999" stroke-linecap="round"/><path d="M61.4,253.6 Q66.8,259.7 72.8,264.4" fill="none" stroke="rgb(178,178,178)" stroke-width="1.9" stroke-linecap="round"/><path d="M61.4,236.2 Q66.8,243.0 72.8,248.3" fill="none" stroke="rgb(95,95,95)" stroke-width="7.9" stroke-linecap="round" stroke-opacity="0.8"/><path d="M61.4,236.2 Q66.8,243.0 72.8,248.3" fill="none" stroke="rgb(131,131,131)" stroke-width="4.699999999999999" stroke-linecap="round"/><path d="M61.4,236.2 Q66.8,243.0 72.8,248.3" fill="none" stroke="rgb(212,212,212)" stroke-width="1.9" stroke-linecap="round"/><path d="M61.4,218.8 Q66.8,226.3 72.8,232.2" fill="none" stroke="rgb(74,74,74)" stroke-width="7.9" stroke-linecap="round" stroke-opacity="0.8"/><path d="M61.4,218.8 Q66.8,226.3 72.8,232.2" fill="none" stroke="rgb(102,102,102)" stroke-width="4.699999999999999" stroke-linecap="round"/><path d="M61.4,218.8 Q66.8,226.3 72.8,232.2" fill="none" stroke="rgb(165,165,165)" stroke-width="1.9" stroke-linecap="round"/><path d="M61.4,201.4 Q66.8,209.6 72.8,216.1" fill="none" stroke="rgb(67,67,67)" stroke-width="7.9" stroke-linecap="round" stroke-opacity="0.8"/><path d="M61.4,201.4 Q66.8,209.6 72.8,216.1" fill="none" stroke="rgb(93,93,93)" stroke-width="4.699999999999999" stroke-linecap="round"/><path d="M61.4,201.4 Q66.8,209.6 72.8,216.1" fill="none" stroke="rgb(150,150,150)" stroke-width="1.9" stroke-linecap="round"/><path d="M61.4,184.0 Q66.8,193.0 72.8,200.0" fill="none" stroke="rgb(66,66,66)" stroke-width="7.9" stroke-linecap="round" stroke-opacity="0.8"/><path d="M61.4,184.0 Q66.8,193.0 72.8,200.0" fill="none" stroke="rgb(91,91,91)" stroke-width="4.699999999999999" stroke-linecap="round"/><path d="M61.4,184.0 Q66.8,193.0 72.8,200.0" fill="none" stroke="rgb(148,148,148)" stroke-width="1.9" stroke-linecap="round"/><path d="M61.4,166.6 Q66.8,176.3 72.8,183.9" fill="none" stroke="rgb(66,66,66)" stroke-width="7.9" stroke-linecap="round" stroke-opacity="0.8"/><path d="M61.4,166.6 Q66.8,176.3 72.8,183.9" fill="none" stroke="rgb(91,91,91)" stroke-width="4.699999999999999" stroke-linecap="round"/><path d="M61.4,166.6 Q66.8,176.3 72.8,183.9" fill="none" stroke="rgb(148,148,148)" stroke-width="1.9" stroke-linecap="round"/><path d="M61.4,149.2 Q66.8,159.6 72.8,167.8" fill="none" stroke="rgb(66,66,66)" stroke-width="7.9" stroke-linecap="round" stroke-opacity="0.8"/><path d="M61.4,149.2 Q66.8,159.6 72.8,167.8" fill="none" stroke="rgb(91,91,91)" stroke-width="4.699999999999999" stroke-linecap="round"/><path d="M61.4,149.2 Q66.8,159.6 72.8,167.8" fill="none" stroke="rgb(148,148,148)" stroke-width="1.9" stroke-linecap="round"/><path d="M61.4,131.8 Q66.8,143.0 72.8,151.7" fill="none" stroke="rgb(66,66,66)" stroke-width="7.9" stroke-linecap="round" stroke-opacity="0.8"/><path d="M61.4,131.8 Q66.8,143.0 72.8,151.7" fill="none" stroke="rgb(91,91,91)" stroke-width="4.699999999999999" stroke-linecap="round"/><path d="M61.4,131.8 Q66.8,143.0 72.8,151.7" fill="none" stroke="rgb(148,148,148)" stroke-width="1.9" stroke-linecap="round"/><path d="M61.4,114.4 Q66.8,126.3 72.8,135.6" fill="none" stroke="rgb(56,56,56)" stroke-width="7.9" stroke-linecap="round" stroke-opacity="0.8"/><path d="M61.4,114.4 Q66.8,126.3 72.8,135.6" fill="none" stroke="rgb(77,77,77)" stroke-width="4.699999999999999" stroke-linecap="round"/><path d="M61.4,114.4 Q66.8,126.3 72.8,135.6" fill="none" stroke="rgb(125,125,125)" stroke-width="1.9" stroke-linecap="round"/><path d="M61.4,97.0 Q66.8,109.6 72.8,119.6" fill="none" stroke="rgb(56,56,56)" stroke-width="7.9" stroke-linecap="round" stroke-opacity="0.8"/><path d="M61.4,97.0 Q66.8,109.6 72.8,119.6" fill="none" stroke="rgb(77,77,77)" stroke-width="4.699999999999999" stroke-linecap="round"/><path d="M61.4,97.0 Q66.8,109.6 72.8,119.6" fill="none" stroke="rgb(125,125,125)" stroke-width="1.9" stroke-linecap="round"/><path d="M61.4,79.6 Q66.8,93.0 72.8,103.5" fill="none" stroke="rgb(71,71,71)" stroke-width="3.3" stroke-linecap="round"/><path d="M61.4,79.6 Q66.8,93.0 72.8,103.5" fill="none" stroke="rgb(96,96,96)" stroke-width="1.14" stroke-linecap="round"/><path d="M61.4,62.2 Q66.8,76.3 72.8,87.4" fill="none" stroke="rgb(71,71,71)" stroke-width="3.3" stroke-linecap="round"/><path d="M61.4,62.2 Q66.8,76.3 72.8,87.4" fill="none" stroke="rgb(96,96,96)" stroke-width="1.14" stroke-linecap="round"/><path d="M163.1,12.0 V281.0" stroke="rgb(88,88,88)" stroke-width="1.2"/><path d="M173.5,26.0 V283.0" stroke="rgb(76,76,76)" stroke-width="1.1"/><path d="M162.9,271.0 Q168.2,276.3 174.0,280.5" fill="none" stroke="rgb(67,67,67)" stroke-width="7.9" stroke-linecap="round" stroke-opacity="0.8"/><path d="M162.9,271.0 Q168.2,276.3 174.0,280.5" fill="none" stroke="rgb(93,93,93)" stroke-width="4.699999999999999" stroke-linecap="round"/><path d="M162.9,271.0 Q168.2,276.3 174.0,280.5" fill="none" stroke="rgb(150,150,150)" stroke-width="1.9" stroke-linecap="round"/><path d="M162.9,253.6 Q168.2,259.7 174.0,264.4" fill="none" stroke="rgb(83,83,83)" stroke-width="7.9" stroke-linecap="round" stroke-opacity="0.8"/><path d="M162.9,253.6 Q168.2,259.7 174.0,264.4" fill="none" stroke="rgb(114,114,114)" stroke-width="4.699999999999999" stroke-linecap="round"/><path d="M162.9,253.6 Q168.2,259.7 174.0,264.4" fill="none" stroke="rgb(185,185,185)" stroke-width="1.9" stroke-linecap="round"/><path d="M162.9,236.2 Q168.2,243.0 174.0,248.3" fill="none" stroke="rgb(95,95,95)" stroke-width="7.9" stroke-linecap="round" stroke-opacity="0.8"/><path d="M162.9,236.2 Q168.2,243.0 174.0,248.3" fill="none" stroke="rgb(131,131,131)" stroke-width="4.699999999999999" stroke-linecap="round"/><path d="M162.9,236.2 Q168.2,243.0 174.0,248.3" fill="none" stroke="rgb(212,212,212)" stroke-width="1.9" stroke-linecap="round"/><path d="M162.9,218.8 Q168.2,226.3 174.0,232.2" fill="none" stroke="rgb(67,67,67)" stroke-width="7.9" stroke-linecap="round" stroke-opacity="0.8"/><path d="M162.9,218.8 Q168.2,226.3 174.0,232.2" fill="none" stroke="rgb(93,93,93)" stroke-width="4.699999999999999" stroke-linecap="round"/><path d="M162.9,218.8 Q168.2,226.3 174.0,232.2" fill="none" stroke="rgb(150,150,150)" stroke-width="1.9" stroke-linecap="round"/><path d="M162.9,201.4 Q168.2,209.6 174.0,216.1" fill="none" stroke="rgb(63,63,63)" stroke-width="7.9" stroke-linecap="round" stroke-opacity="0.8"/><path d="M162.9,201.4 Q168.2,209.6 174.0,216.1" fill="none" stroke="rgb(86,86,86)" stroke-width="4.699999999999999" stroke-linecap="round"/><path d="M162.9,201.4 Q168.2,209.6 174.0,216.1" fill="none" stroke="rgb(140,140,140)" stroke-width="1.9" stroke-linecap="round"/><path d="M162.9,184.0 Q168.2,193.0 174.0,200.0" fill="none" stroke="rgb(66,66,66)" stroke-width="7.9" stroke-linecap="round" stroke-opacity="0.8"/><path d="M162.9,184.0 Q168.2,193.0 174.0,200.0" fill="none" stroke="rgb(91,91,91)" stroke-width="4.699999999999999" stroke-linecap="round"/><path d="M162.9,184.0 Q168.2,193.0 174.0,200.0" fill="none" stroke="rgb(148,148,148)" stroke-width="1.9" stroke-linecap="round"/><path d="M162.9,166.6 Q168.2,176.3 174.0,183.9" fill="none" stroke="rgb(66,66,66)" stroke-width="7.9" stroke-linecap="round" stroke-opacity="0.8"/><path d="M162.9,166.6 Q168.2,176.3 174.0,183.9" fill="none" stroke="rgb(91,91,91)" stroke-width="4.699999999999999" stroke-linecap="round"/><path d="M162.9,166.6 Q168.2,176.3 174.0,183.9" fill="none" stroke="rgb(148,148,148)" stroke-width="1.9" stroke-linecap="round"/><path d="M162.9,149.2 Q168.2,159.6 174.0,167.8" fill="none" stroke="rgb(66,66,66)" stroke-width="7.9" stroke-linecap="round" stroke-opacity="0.8"/><path d="M162.9,149.2 Q168.2,159.6 174.0,167.8" fill="none" stroke="rgb(91,91,91)" stroke-width="4.699999999999999" stroke-linecap="round"/><path d="M162.9,149.2 Q168.2,159.6 174.0,167.8" fill="none" stroke="rgb(148,148,148)" stroke-width="1.9" stroke-linecap="round"/><path d="M162.9,131.8 Q168.2,143.0 174.0,151.7" fill="none" stroke="rgb(66,66,66)" stroke-width="7.9" stroke-linecap="round" stroke-opacity="0.8"/><path d="M162.9,131.8 Q168.2,143.0 174.0,151.7" fill="none" stroke="rgb(91,91,91)" stroke-width="4.699999999999999" stroke-linecap="round"/><path d="M162.9,131.8 Q168.2,143.0 174.0,151.7" fill="none" stroke="rgb(148,148,148)" stroke-width="1.9" stroke-linecap="round"/><path d="M162.9,114.4 Q168.2,126.3 174.0,135.6" fill="none" stroke="rgb(56,56,56)" stroke-width="7.9" stroke-linecap="round" stroke-opacity="0.8"/><path d="M162.9,114.4 Q168.2,126.3 174.0,135.6" fill="none" stroke="rgb(77,77,77)" stroke-width="4.699999999999999" stroke-linecap="round"/><path d="M162.9,114.4 Q168.2,126.3 174.0,135.6" fill="none" stroke="rgb(125,125,125)" stroke-width="1.9" stroke-linecap="round"/><path d="M162.9,97.0 Q168.2,109.6 174.0,119.6" fill="none" stroke="rgb(56,56,56)" stroke-width="7.9" stroke-linecap="round" stroke-opacity="0.8"/><path d="M162.9,97.0 Q168.2,109.6 174.0,119.6" fill="none" stroke="rgb(77,77,77)" stroke-width="4.699999999999999" stroke-linecap="round"/><path d="M162.9,97.0 Q168.2,109.6 174.0,119.6" fill="none" stroke="rgb(125,125,125)" stroke-width="1.9" stroke-linecap="round"/><path d="M162.9,79.6 Q168.2,93.0 174.0,103.5" fill="none" stroke="rgb(71,71,71)" stroke-width="3.3" stroke-linecap="round"/><path d="M162.9,79.6 Q168.2,93.0 174.0,103.5" fill="none" stroke="rgb(96,96,96)" stroke-width="1.14" stroke-linecap="round"/><path d="M162.9,62.2 Q168.2,76.3 174.0,87.4" fill="none" stroke="rgb(71,71,71)" stroke-width="3.3" stroke-linecap="round"/><path d="M162.9,62.2 Q168.2,76.3 174.0,87.4" fill="none" stroke="rgb(96,96,96)" stroke-width="1.14" stroke-linecap="round"/><path d="M162.9,44.8 Q168.2,59.6 174.0,71.3" fill="none" stroke="rgb(71,71,71)" stroke-width="3.3" stroke-linecap="round"/><path d="M162.9,44.8 Q168.2,59.6 174.0,71.3" fill="none" stroke="rgb(96,96,96)" stroke-width="1.14" stroke-linecap="round"/><path d="M162.9,27.4 Q168.2,43.0 174.0,55.2" fill="none" stroke="rgb(71,71,71)" stroke-width="3.3" stroke-linecap="round"/><path d="M162.9,27.4 Q168.2,43.0 174.0,55.2" fill="none" stroke="rgb(96,96,96)" stroke-width="1.14" stroke-linecap="round"/><path d="M162.9,10.0 Q168.2,26.3 174.0,39.1" fill="none" stroke="rgb(71,71,71)" stroke-width="3.3" stroke-linecap="round"/><path d="M162.9,10.0 Q168.2,26.3 174.0,39.1" fill="none" stroke="rgb(96,96,96)" stroke-width="1.14" stroke-linecap="round"/><path d="M179.1,270.0 Q185.2,275.3 192.0,279.5" fill="none" stroke="rgb(63,63,63)" stroke-width="7.8" stroke-linecap="round" stroke-opacity="0.8"/><path d="M179.1,270.0 Q185.2,275.3 192.0,279.5" fill="none" stroke="rgb(86,86,86)" stroke-width="4.6" stroke-linecap="round"/><path d="M179.1,270.0 Q185.2,275.3 192.0,279.5" fill="none" stroke="rgb(140,140,140)" stroke-width="1.8" stroke-linecap="round"/><path d="M179.1,252.6 Q185.2,258.7 192.0,263.4" fill="none" stroke="rgb(74,74,74)" stroke-width="7.8" stroke-linecap="round" stroke-opacity="0.8"/><path d="M179.1,252.6 Q185.2,258.7 192.0,263.4" fill="none" stroke="rgb(102,102,102)" stroke-width="4.6" stroke-linecap="round"/><path d="M179.1,252.6 Q185.2,258.7 192.0,263.4" fill="none" stroke="rgb(165,165,165)" stroke-width="1.8" stroke-linecap="round"/><path d="M179.1,235.2 Q185.2,242.0 192.0,247.3" fill="none" stroke="rgb(85,85,85)" stroke-width="7.8" stroke-linecap="round" stroke-opacity="0.8"/><path d="M179.1,235.2 Q185.2,242.0 192.0,247.3" fill="none" stroke="rgb(117,117,117)" stroke-width="4.6" stroke-linecap="round"/><path d="M179.1,235.2 Q185.2,242.0 192.0,247.3" fill="none" stroke="rgb(190,190,190)" stroke-width="1.8" stroke-linecap="round"/><path d="M179.1,217.8 Q185.2,225.3 192.0,231.2" fill="none" stroke="rgb(57,57,57)" stroke-width="7.8" stroke-linecap="round" stroke-opacity="0.8"/><path d="M179.1,217.8 Q185.2,225.3 192.0,231.2" fill="none" stroke="rgb(79,79,79)" stroke-width="4.6" stroke-linecap="round"/><path d="M179.1,217.8 Q185.2,225.3 192.0,231.2" fill="none" stroke="rgb(128,128,128)" stroke-width="1.8" stroke-linecap="round"/><path d="M179.1,200.4 Q185.2,208.6 192.0,215.1" fill="none" stroke="rgb(57,57,57)" stroke-width="7.8" stroke-linecap="round" stroke-opacity="0.8"/><path d="M179.1,200.4 Q185.2,208.6 192.0,215.1" fill="none" stroke="rgb(79,79,79)" stroke-width="4.6" stroke-linecap="round"/><path d="M179.1,200.4 Q185.2,208.6 192.0,215.1" fill="none" stroke="rgb(128,128,128)" stroke-width="1.8" stroke-linecap="round"/><path d="M179.1,183.0 Q185.2,192.0 192.0,199.0" fill="none" stroke="rgb(57,57,57)" stroke-width="7.8" stroke-linecap="round" stroke-opacity="0.8"/><path d="M179.1,183.0 Q185.2,192.0 192.0,199.0" fill="none" stroke="rgb(79,79,79)" stroke-width="4.6" stroke-linecap="round"/><path d="M179.1,183.0 Q185.2,192.0 192.0,199.0" fill="none" stroke="rgb(128,128,128)" stroke-width="1.8" stroke-linecap="round"/><path d="M179.1,165.6 Q185.2,175.3 192.0,182.9" fill="none" stroke="rgb(57,57,57)" stroke-width="7.8" stroke-linecap="round" stroke-opacity="0.8"/><path d="M179.1,165.6 Q185.2,175.3 192.0,182.9" fill="none" stroke="rgb(79,79,79)" stroke-width="4.6" stroke-linecap="round"/><path d="M179.1,165.6 Q185.2,175.3 192.0,182.9" fill="none" stroke="rgb(128,128,128)" stroke-width="1.8" stroke-linecap="round"/><path d="M179.1,148.2 Q185.2,158.6 192.0,166.8" fill="none" stroke="rgb(57,57,57)" stroke-width="7.8" stroke-linecap="round" stroke-opacity="0.8"/><path d="M179.1,148.2 Q185.2,158.6 192.0,166.8" fill="none" stroke="rgb(79,79,79)" stroke-width="4.6" stroke-linecap="round"/><path d="M179.1,148.2 Q185.2,158.6 192.0,166.8" fill="none" stroke="rgb(128,128,128)" stroke-width="1.8" stroke-linecap="round"/><path d="M179.1,130.8 Q185.2,142.0 192.0,150.7" fill="none" stroke="rgb(57,57,57)" stroke-width="7.8" stroke-linecap="round" stroke-opacity="0.8"/><path d="M179.1,130.8 Q185.2,142.0 192.0,150.7" fill="none" stroke="rgb(79,79,79)" stroke-width="4.6" stroke-linecap="round"/><path d="M179.1,130.8 Q185.2,142.0 192.0,150.7" fill="none" stroke="rgb(128,128,128)" stroke-width="1.8" stroke-linecap="round"/><path d="M179.1,113.4 Q185.2,125.3 192.0,134.6" fill="none" stroke="rgb(51,51,51)" stroke-width="7.8" stroke-linecap="round" stroke-opacity="0.8"/><path d="M179.1,113.4 Q185.2,125.3 192.0,134.6" fill="none" stroke="rgb(70,70,70)" stroke-width="4.6" stroke-linecap="round"/><path d="M179.1,113.4 Q185.2,125.3 192.0,134.6" fill="none" stroke="rgb(114,114,114)" stroke-width="1.8" stroke-linecap="round"/><path d="M179.1,96.0 Q185.2,108.6 192.0,118.6" fill="none" stroke="rgb(79,79,79)" stroke-width="3.2" stroke-linecap="round"/><path d="M179.1,96.0 Q185.2,108.6 192.0,118.6" fill="none" stroke="rgb(108,108,108)" stroke-width="1.08" stroke-linecap="round"/><path d="M219.7,166.0 V281.5" stroke="rgb(88,88,88)" stroke-width="1.2"/><path d="M230.5,180.0 V283.5" stroke="rgb(76,76,76)" stroke-width="1.1"/><path d="M219.5,271.5 Q224.9,274.0 231.0,276.0" fill="none" stroke="rgb(53,53,53)" stroke-width="7.5" stroke-linecap="round" stroke-opacity="0.8"/><path d="M219.5,271.5 Q224.9,274.0 231.0,276.0" fill="none" stroke="rgb(73,73,73)" stroke-width="4.3" stroke-linecap="round"/><path d="M219.5,271.5 Q224.9,274.0 231.0,276.0" fill="none" stroke="rgb(118,118,118)" stroke-width="1.5" stroke-linecap="round"/><path d="M219.5,254.7 Q224.9,257.2 231.0,259.2" fill="none" stroke="rgb(67,67,67)" stroke-width="7.5" stroke-linecap="round" stroke-opacity="0.8"/><path d="M219.5,254.7 Q224.9,257.2 231.0,259.2" fill="none" stroke="rgb(93,93,93)" stroke-width="4.3" stroke-linecap="round"/><path d="M219.5,254.7 Q224.9,257.2 231.0,259.2" fill="none" stroke="rgb(150,150,150)" stroke-width="1.5" stroke-linecap="round"/><path d="M219.5,237.9 Q224.9,240.4 231.0,242.4" fill="none" stroke="rgb(80,80,80)" stroke-width="7.5" stroke-linecap="round" stroke-opacity="0.8"/><path d="M219.5,237.9 Q224.9,240.4 231.0,242.4" fill="none" stroke="rgb(110,110,110)" stroke-width="4.3" stroke-linecap="round"/><path d="M219.5,237.9 Q224.9,240.4 231.0,242.4" fill="none" stroke="rgb(178,178,178)" stroke-width="1.5" stroke-linecap="round"/><path d="M219.5,221.1 Q224.9,228.3 231.0,233.9" fill="none" stroke="rgb(47,47,47)" stroke-width="7.5" stroke-linecap="round" stroke-opacity="0.8"/><path d="M219.5,221.1 Q224.9,228.3 231.0,233.9" fill="none" stroke="rgb(65,65,65)" stroke-width="4.3" stroke-linecap="round"/><path d="M219.5,221.1 Q224.9,228.3 231.0,233.9" fill="none" stroke="rgb(106,106,106)" stroke-width="1.5" stroke-linecap="round"/><path d="M219.5,204.3 Q224.9,212.2 231.0,218.3" fill="none" stroke="rgb(47,47,47)" stroke-width="7.5" stroke-linecap="round" stroke-opacity="0.8"/><path d="M219.5,204.3 Q224.9,212.2 231.0,218.3" fill="none" stroke="rgb(65,65,65)" stroke-width="4.3" stroke-linecap="round"/><path d="M219.5,204.3 Q224.9,212.2 231.0,218.3" fill="none" stroke="rgb(106,106,106)" stroke-width="1.5" stroke-linecap="round"/><path d="M219.5,187.5 Q224.9,196.1 231.0,202.8" fill="none" stroke="rgb(47,47,47)" stroke-width="7.5" stroke-linecap="round" stroke-opacity="0.8"/><path d="M219.5,187.5 Q224.9,196.1 231.0,202.8" fill="none" stroke="rgb(65,65,65)" stroke-width="4.3" stroke-linecap="round"/><path d="M219.5,187.5 Q224.9,196.1 231.0,202.8" fill="none" stroke="rgb(106,106,106)" stroke-width="1.5" stroke-linecap="round"/><path d="M219.5,170.7 Q224.9,180.0 231.0,187.3" fill="none" stroke="rgb(47,47,47)" stroke-width="7.5" stroke-linecap="round" stroke-opacity="0.8"/><path d="M219.5,170.7 Q224.9,180.0 231.0,187.3" fill="none" stroke="rgb(65,65,65)" stroke-width="4.3" stroke-linecap="round"/><path d="M219.5,170.7 Q224.9,180.0 231.0,187.3" fill="none" stroke="rgb(106,106,106)" stroke-width="1.5" stroke-linecap="round"/><path d="M238.8,166.0 V281.5" stroke="rgb(88,88,88)" stroke-width="1.2"/><path d="M247.0,180.0 V283.5" stroke="rgb(76,76,76)" stroke-width="1.1"/><path d="M238.6,271.5 Q242.8,274.0 247.5,276.0" fill="none" stroke="rgb(53,53,53)" stroke-width="7.5" stroke-linecap="round" stroke-opacity="0.8"/><path d="M238.6,271.5 Q242.8,274.0 247.5,276.0" fill="none" stroke="rgb(73,73,73)" stroke-width="4.3" stroke-linecap="round"/><path d="M238.6,271.5 Q242.8,274.0 247.5,276.0" fill="none" stroke="rgb(118,118,118)" stroke-width="1.5" stroke-linecap="round"/><path d="M238.6,254.7 Q242.8,257.2 247.5,259.2" fill="none" stroke="rgb(67,67,67)" stroke-width="7.5" stroke-linecap="round" stroke-opacity="0.8"/><path d="M238.6,254.7 Q242.8,257.2 247.5,259.2" fill="none" stroke="rgb(93,93,93)" stroke-width="4.3" stroke-linecap="round"/><path d="M238.6,254.7 Q242.8,257.2 247.5,259.2" fill="none" stroke="rgb(150,150,150)" stroke-width="1.5" stroke-linecap="round"/><path d="M238.6,237.9 Q242.8,240.4 247.5,242.4" fill="none" stroke="rgb(80,80,80)" stroke-width="7.5" stroke-linecap="round" stroke-opacity="0.8"/><path d="M238.6,237.9 Q242.8,240.4 247.5,242.4" fill="none" stroke="rgb(110,110,110)" stroke-width="4.3" stroke-linecap="round"/><path d="M238.6,237.9 Q242.8,240.4 247.5,242.4" fill="none" stroke="rgb(178,178,178)" stroke-width="1.5" stroke-linecap="round"/><path d="M238.6,221.1 Q242.8,228.3 247.5,233.9" fill="none" stroke="rgb(47,47,47)" stroke-width="7.5" stroke-linecap="round" stroke-opacity="0.8"/><path d="M238.6,221.1 Q242.8,228.3 247.5,233.9" fill="none" stroke="rgb(65,65,65)" stroke-width="4.3" stroke-linecap="round"/><path d="M238.6,221.1 Q242.8,228.3 247.5,233.9" fill="none" stroke="rgb(106,106,106)" stroke-width="1.5" stroke-linecap="round"/><path d="M238.6,204.3 Q242.8,212.2 247.5,218.3" fill="none" stroke="rgb(47,47,47)" stroke-width="7.5" stroke-linecap="round" stroke-opacity="0.8"/><path d="M238.6,204.3 Q242.8,212.2 247.5,218.3" fill="none" stroke="rgb(65,65,65)" stroke-width="4.3" stroke-linecap="round"/><path d="M238.6,204.3 Q242.8,212.2 247.5,218.3" fill="none" stroke="rgb(106,106,106)" stroke-width="1.5" stroke-linecap="round"/><path d="M238.6,187.5 Q242.8,196.1 247.5,202.8" fill="none" stroke="rgb(47,47,47)" stroke-width="7.5" stroke-linecap="round" stroke-opacity="0.8"/><path d="M238.6,187.5 Q242.8,196.1 247.5,202.8" fill="none" stroke="rgb(65,65,65)" stroke-width="4.3" stroke-linecap="round"/><path d="M238.6,187.5 Q242.8,196.1 247.5,202.8" fill="none" stroke="rgb(106,106,106)" stroke-width="1.5" stroke-linecap="round"/><path d="M238.6,170.7 Q242.8,180.0 247.5,187.3" fill="none" stroke="rgb(47,47,47)" stroke-width="7.5" stroke-linecap="round" stroke-opacity="0.8"/><path d="M238.6,170.7 Q242.8,180.0 247.5,187.3" fill="none" stroke="rgb(65,65,65)" stroke-width="4.3" stroke-linecap="round"/><path d="M238.6,170.7 Q242.8,180.0 247.5,187.3" fill="none" stroke="rgb(106,106,106)" stroke-width="1.5" stroke-linecap="round"/><path d="M253.2,166.0 V281.5" stroke="rgb(88,88,88)" stroke-width="1.2"/><path d="M262.1,180.0 V283.5" stroke="rgb(76,76,76)" stroke-width="1.1"/><path d="M253.0,271.5 Q257.5,274.0 262.6,276.0" fill="none" stroke="rgb(53,53,53)" stroke-width="7.5" stroke-linecap="round" stroke-opacity="0.8"/><path d="M253.0,271.5 Q257.5,274.0 262.6,276.0" fill="none" stroke="rgb(73,73,73)" stroke-width="4.3" stroke-linecap="round"/><path d="M253.0,271.5 Q257.5,274.0 262.6,276.0" fill="none" stroke="rgb(118,118,118)" stroke-width="1.5" stroke-linecap="round"/><path d="M253.0,254.7 Q257.5,257.2 262.6,259.2" fill="none" stroke="rgb(67,67,67)" stroke-width="7.5" stroke-linecap="round" stroke-opacity="0.8"/><path d="M253.0,254.7 Q257.5,257.2 262.6,259.2" fill="none" stroke="rgb(93,93,93)" stroke-width="4.3" stroke-linecap="round"/><path d="M253.0,254.7 Q257.5,257.2 262.6,259.2" fill="none" stroke="rgb(150,150,150)" stroke-width="1.5" stroke-linecap="round"/><path d="M253.0,237.9 Q257.5,240.4 262.6,242.4" fill="none" stroke="rgb(80,80,80)" stroke-width="7.5" stroke-linecap="round" stroke-opacity="0.8"/><path d="M253.0,237.9 Q257.5,240.4 262.6,242.4" fill="none" stroke="rgb(110,110,110)" stroke-width="4.3" stroke-linecap="round"/><path d="M253.0,237.9 Q257.5,240.4 262.6,242.4" fill="none" stroke="rgb(178,178,178)" stroke-width="1.5" stroke-linecap="round"/><path d="M253.0,221.1 Q257.5,228.3 262.6,233.9" fill="none" stroke="rgb(47,47,47)" stroke-width="7.5" stroke-linecap="round" stroke-opacity="0.8"/><path d="M253.0,221.1 Q257.5,228.3 262.6,233.9" fill="none" stroke="rgb(65,65,65)" stroke-width="4.3" stroke-linecap="round"/><path d="M253.0,221.1 Q257.5,228.3 262.6,233.9" fill="none" stroke="rgb(106,106,106)" stroke-width="1.5" stroke-linecap="round"/><path d="M253.0,204.3 Q257.5,212.2 262.6,218.3" fill="none" stroke="rgb(47,47,47)" stroke-width="7.5" stroke-linecap="round" stroke-opacity="0.8"/><path d="M253.0,204.3 Q257.5,212.2 262.6,218.3" fill="none" stroke="rgb(65,65,65)" stroke-width="4.3" stroke-linecap="round"/><path d="M253.0,204.3 Q257.5,212.2 262.6,218.3" fill="none" stroke="rgb(106,106,106)" stroke-width="1.5" stroke-linecap="round"/><path d="M253.0,187.5 Q257.5,196.1 262.6,202.8" fill="none" stroke="rgb(47,47,47)" stroke-width="7.5" stroke-linecap="round" stroke-opacity="0.8"/><path d="M253.0,187.5 Q257.5,196.1 262.6,202.8" fill="none" stroke="rgb(65,65,65)" stroke-width="4.3" stroke-linecap="round"/><path d="M253.0,187.5 Q257.5,196.1 262.6,202.8" fill="none" stroke="rgb(106,106,106)" stroke-width="1.5" stroke-linecap="round"/><path d="M253.0,170.7 Q257.5,180.0 262.6,187.3" fill="none" stroke="rgb(47,47,47)" stroke-width="7.5" stroke-linecap="round" stroke-opacity="0.8"/><path d="M253.0,170.7 Q257.5,180.0 262.6,187.3" fill="none" stroke="rgb(65,65,65)" stroke-width="4.3" stroke-linecap="round"/><path d="M253.0,170.7 Q257.5,180.0 262.6,187.3" fill="none" stroke="rgb(106,106,106)" stroke-width="1.5" stroke-linecap="round"/><path d="M269.7,166.0 V281.5" stroke="rgb(88,88,88)" stroke-width="1.2"/><path d="M275.9,180.0 V283.5" stroke="rgb(76,76,76)" stroke-width="1.1"/><path d="M269.5,271.5 Q272.6,274.0 276.4,276.0" fill="none" stroke="rgb(53,53,53)" stroke-width="7.5" stroke-linecap="round" stroke-opacity="0.8"/><path d="M269.5,271.5 Q272.6,274.0 276.4,276.0" fill="none" stroke="rgb(73,73,73)" stroke-width="4.3" stroke-linecap="round"/><path d="M269.5,271.5 Q272.6,274.0 276.4,276.0" fill="none" stroke="rgb(118,118,118)" stroke-width="1.5" stroke-linecap="round"/><path d="M269.5,254.7 Q272.6,257.2 276.4,259.2" fill="none" stroke="rgb(67,67,67)" stroke-width="7.5" stroke-linecap="round" stroke-opacity="0.8"/><path d="M269.5,254.7 Q272.6,257.2 276.4,259.2" fill="none" stroke="rgb(93,93,93)" stroke-width="4.3" stroke-linecap="round"/><path d="M269.5,254.7 Q272.6,257.2 276.4,259.2" fill="none" stroke="rgb(150,150,150)" stroke-width="1.5" stroke-linecap="round"/><path d="M269.5,237.9 Q272.6,240.4 276.4,242.4" fill="none" stroke="rgb(80,80,80)" stroke-width="7.5" stroke-linecap="round" stroke-opacity="0.8"/><path d="M269.5,237.9 Q272.6,240.4 276.4,242.4" fill="none" stroke="rgb(110,110,110)" stroke-width="4.3" stroke-linecap="round"/><path d="M269.5,237.9 Q272.6,240.4 276.4,242.4" fill="none" stroke="rgb(178,178,178)" stroke-width="1.5" stroke-linecap="round"/><path d="M269.5,221.1 Q272.6,228.3 276.4,233.9" fill="none" stroke="rgb(47,47,47)" stroke-width="7.5" stroke-linecap="round" stroke-opacity="0.8"/><path d="M269.5,221.1 Q272.6,228.3 276.4,233.9" fill="none" stroke="rgb(65,65,65)" stroke-width="4.3" stroke-linecap="round"/><path d="M269.5,221.1 Q272.6,228.3 276.4,233.9" fill="none" stroke="rgb(106,106,106)" stroke-width="1.5" stroke-linecap="round"/><path d="M269.5,204.3 Q272.6,212.2 276.4,218.3" fill="none" stroke="rgb(47,47,47)" stroke-width="7.5" stroke-linecap="round" stroke-opacity="0.8"/><path d="M269.5,204.3 Q272.6,212.2 276.4,218.3" fill="none" stroke="rgb(65,65,65)" stroke-width="4.3" stroke-linecap="round"/><path d="M269.5,204.3 Q272.6,212.2 276.4,218.3" fill="none" stroke="rgb(106,106,106)" stroke-width="1.5" stroke-linecap="round"/><path d="M269.5,187.5 Q272.6,196.1 276.4,202.8" fill="none" stroke="rgb(47,47,47)" stroke-width="7.5" stroke-linecap="round" stroke-opacity="0.8"/><path d="M269.5,187.5 Q272.6,196.1 276.4,202.8" fill="none" stroke="rgb(65,65,65)" stroke-width="4.3" stroke-linecap="round"/><path d="M269.5,187.5 Q272.6,196.1 276.4,202.8" fill="none" stroke="rgb(106,106,106)" stroke-width="1.5" stroke-linecap="round"/><path d="M269.5,170.7 Q272.6,180.0 276.4,187.3" fill="none" stroke="rgb(47,47,47)" stroke-width="7.5" stroke-linecap="round" stroke-opacity="0.8"/><path d="M269.5,170.7 Q272.6,180.0 276.4,187.3" fill="none" stroke="rgb(65,65,65)" stroke-width="4.3" stroke-linecap="round"/><path d="M269.5,170.7 Q272.6,180.0 276.4,187.3" fill="none" stroke="rgb(106,106,106)" stroke-width="1.5" stroke-linecap="round"/><path d="M418.8,35.0 V281.0" stroke="rgb(88,88,88)" stroke-width="1.2"/><path d="M432.5,49.0 V283.0" stroke="rgb(76,76,76)" stroke-width="1.1"/><path d="M418.6,271.0 Q425.5,276.3 433.0,280.5" fill="none" stroke="rgb(68,68,68)" stroke-width="7.9" stroke-linecap="round" stroke-opacity="0.8"/><path d="M418.6,271.0 Q425.5,276.3 433.0,280.5" fill="none" stroke="rgb(94,94,94)" stroke-width="4.699999999999999" stroke-linecap="round"/><path d="M418.6,271.0 Q425.5,276.3 433.0,280.5" fill="none" stroke="rgb(152,152,152)" stroke-width="1.9" stroke-linecap="round"/><path d="M418.6,253.6 Q425.5,259.7 433.0,264.4" fill="none" stroke="rgb(80,80,80)" stroke-width="7.9" stroke-linecap="round" stroke-opacity="0.8"/><path d="M418.6,253.6 Q425.5,259.7 433.0,264.4" fill="none" stroke="rgb(110,110,110)" stroke-width="4.699999999999999" stroke-linecap="round"/><path d="M418.6,253.6 Q425.5,259.7 433.0,264.4" fill="none" stroke="rgb(178,178,178)" stroke-width="1.9" stroke-linecap="round"/><path d="M418.6,236.2 Q425.5,243.0 433.0,248.3" fill="none" stroke="rgb(95,95,95)" stroke-width="7.9" stroke-linecap="round" stroke-opacity="0.8"/><path d="M418.6,236.2 Q425.5,243.0 433.0,248.3" fill="none" stroke="rgb(131,131,131)" stroke-width="4.699999999999999" stroke-linecap="round"/><path d="M418.6,236.2 Q425.5,243.0 433.0,248.3" fill="none" stroke="rgb(212,212,212)" stroke-width="1.9" stroke-linecap="round"/><path d="M418.6,218.8 Q425.5,226.3 433.0,232.2" fill="none" stroke="rgb(74,74,74)" stroke-width="7.9" stroke-linecap="round" stroke-opacity="0.8"/><path d="M418.6,218.8 Q425.5,226.3 433.0,232.2" fill="none" stroke="rgb(102,102,102)" stroke-width="4.699999999999999" stroke-linecap="round"/><path d="M418.6,218.8 Q425.5,226.3 433.0,232.2" fill="none" stroke="rgb(165,165,165)" stroke-width="1.9" stroke-linecap="round"/><path d="M418.6,201.4 Q425.5,209.6 433.0,216.1" fill="none" stroke="rgb(67,67,67)" stroke-width="7.9" stroke-linecap="round" stroke-opacity="0.8"/><path d="M418.6,201.4 Q425.5,209.6 433.0,216.1" fill="none" stroke="rgb(93,93,93)" stroke-width="4.699999999999999" stroke-linecap="round"/><path d="M418.6,201.4 Q425.5,209.6 433.0,216.1" fill="none" stroke="rgb(150,150,150)" stroke-width="1.9" stroke-linecap="round"/><path d="M418.6,184.0 Q425.5,193.0 433.0,200.0" fill="none" stroke="rgb(66,66,66)" stroke-width="7.9" stroke-linecap="round" stroke-opacity="0.8"/><path d="M418.6,184.0 Q425.5,193.0 433.0,200.0" fill="none" stroke="rgb(91,91,91)" stroke-width="4.699999999999999" stroke-linecap="round"/><path d="M418.6,184.0 Q425.5,193.0 433.0,200.0" fill="none" stroke="rgb(148,148,148)" stroke-width="1.9" stroke-linecap="round"/><path d="M418.6,166.6 Q425.5,176.3 433.0,183.9" fill="none" stroke="rgb(66,66,66)" stroke-width="7.9" stroke-linecap="round" stroke-opacity="0.8"/><path d="M418.6,166.6 Q425.5,176.3 433.0,183.9" fill="none" stroke="rgb(91,91,91)" stroke-width="4.699999999999999" stroke-linecap="round"/><path d="M418.6,166.6 Q425.5,176.3 433.0,183.9" fill="none" stroke="rgb(148,148,148)" stroke-width="1.9" stroke-linecap="round"/><path d="M418.6,149.2 Q425.5,159.6 433.0,167.8" fill="none" stroke="rgb(66,66,66)" stroke-width="7.9" stroke-linecap="round" stroke-opacity="0.8"/><path d="M418.6,149.2 Q425.5,159.6 433.0,167.8" fill="none" stroke="rgb(91,91,91)" stroke-width="4.699999999999999" stroke-linecap="round"/><path d="M418.6,149.2 Q425.5,159.6 433.0,167.8" fill="none" stroke="rgb(148,148,148)" stroke-width="1.9" stroke-linecap="round"/><path d="M418.6,131.8 Q425.5,143.0 433.0,151.7" fill="none" stroke="rgb(66,66,66)" stroke-width="7.9" stroke-linecap="round" stroke-opacity="0.8"/><path d="M418.6,131.8 Q425.5,143.0 433.0,151.7" fill="none" stroke="rgb(91,91,91)" stroke-width="4.699999999999999" stroke-linecap="round"/><path d="M418.6,131.8 Q425.5,143.0 433.0,151.7" fill="none" stroke="rgb(148,148,148)" stroke-width="1.9" stroke-linecap="round"/><path d="M418.6,114.4 Q425.5,126.3 433.0,135.6" fill="none" stroke="rgb(56,56,56)" stroke-width="7.9" stroke-linecap="round" stroke-opacity="0.8"/><path d="M418.6,114.4 Q425.5,126.3 433.0,135.6" fill="none" stroke="rgb(77,77,77)" stroke-width="4.699999999999999" stroke-linecap="round"/><path d="M418.6,114.4 Q425.5,126.3 433.0,135.6" fill="none" stroke="rgb(125,125,125)" stroke-width="1.9" stroke-linecap="round"/><path d="M418.6,97.0 Q425.5,109.6 433.0,119.6" fill="none" stroke="rgb(56,56,56)" stroke-width="7.9" stroke-linecap="round" stroke-opacity="0.8"/><path d="M418.6,97.0 Q425.5,109.6 433.0,119.6" fill="none" stroke="rgb(77,77,77)" stroke-width="4.699999999999999" stroke-linecap="round"/><path d="M418.6,97.0 Q425.5,109.6 433.0,119.6" fill="none" stroke="rgb(125,125,125)" stroke-width="1.9" stroke-linecap="round"/><path d="M418.6,79.6 Q425.5,93.0 433.0,103.5" fill="none" stroke="rgb(71,71,71)" stroke-width="3.3" stroke-linecap="round"/><path d="M418.6,79.6 Q425.5,93.0 433.0,103.5" fill="none" stroke="rgb(96,96,96)" stroke-width="1.14" stroke-linecap="round"/><path d="M418.6,62.2 Q425.5,76.3 433.0,87.4" fill="none" stroke="rgb(71,71,71)" stroke-width="3.3" stroke-linecap="round"/><path d="M418.6,62.2 Q425.5,76.3 433.0,87.4" fill="none" stroke="rgb(96,96,96)" stroke-width="1.14" stroke-linecap="round"/><path d="M418.6,44.8 Q425.5,59.6 433.0,71.3" fill="none" stroke="rgb(71,71,71)" stroke-width="3.3" stroke-linecap="round"/><path d="M418.6,44.8 Q425.5,59.6 433.0,71.3" fill="none" stroke="rgb(96,96,96)" stroke-width="1.14" stroke-linecap="round"/><path d="M634.6,50.0 V281.0" stroke="rgb(88,88,88)" stroke-width="1.2"/><path d="M646.8,64.0 V283.0" stroke="rgb(76,76,76)" stroke-width="1.1"/><path d="M634.4,271.0 Q640.5,276.3 647.3,280.5" fill="none" stroke="rgb(68,68,68)" stroke-width="7.9" stroke-linecap="round" stroke-opacity="0.8"/><path d="M634.4,271.0 Q640.5,276.3 647.3,280.5" fill="none" stroke="rgb(94,94,94)" stroke-width="4.699999999999999" stroke-linecap="round"/><path d="M634.4,271.0 Q640.5,276.3 647.3,280.5" fill="none" stroke="rgb(152,152,152)" stroke-width="1.9" stroke-linecap="round"/><path d="M634.4,253.6 Q640.5,259.7 647.3,264.4" fill="none" stroke="rgb(80,80,80)" stroke-width="7.9" stroke-linecap="round" stroke-opacity="0.8"/><path d="M634.4,253.6 Q640.5,259.7 647.3,264.4" fill="none" stroke="rgb(110,110,110)" stroke-width="4.699999999999999" stroke-linecap="round"/><path d="M634.4,253.6 Q640.5,259.7 647.3,264.4" fill="none" stroke="rgb(178,178,178)" stroke-width="1.9" stroke-linecap="round"/><path d="M634.4,236.2 Q640.5,243.0 647.3,248.3" fill="none" stroke="rgb(95,95,95)" stroke-width="7.9" stroke-linecap="round" stroke-opacity="0.8"/><path d="M634.4,236.2 Q640.5,243.0 647.3,248.3" fill="none" stroke="rgb(131,131,131)" stroke-width="4.699999999999999" stroke-linecap="round"/><path d="M634.4,236.2 Q640.5,243.0 647.3,248.3" fill="none" stroke="rgb(212,212,212)" stroke-width="1.9" stroke-linecap="round"/><path d="M634.4,218.8 Q640.5,226.3 647.3,232.2" fill="none" stroke="rgb(74,74,74)" stroke-width="7.9" stroke-linecap="round" stroke-opacity="0.8"/><path d="M634.4,218.8 Q640.5,226.3 647.3,232.2" fill="none" stroke="rgb(102,102,102)" stroke-width="4.699999999999999" stroke-linecap="round"/><path d="M634.4,218.8 Q640.5,226.3 647.3,232.2" fill="none" stroke="rgb(165,165,165)" stroke-width="1.9" stroke-linecap="round"/><path d="M634.4,201.4 Q640.5,209.6 647.3,216.1" fill="none" stroke="rgb(67,67,67)" stroke-width="7.9" stroke-linecap="round" stroke-opacity="0.8"/><path d="M634.4,201.4 Q640.5,209.6 647.3,216.1" fill="none" stroke="rgb(93,93,93)" stroke-width="4.699999999999999" stroke-linecap="round"/><path d="M634.4,201.4 Q640.5,209.6 647.3,216.1" fill="none" stroke="rgb(150,150,150)" stroke-width="1.9" stroke-linecap="round"/><path d="M634.4,184.0 Q640.5,193.0 647.3,200.0" fill="none" stroke="rgb(66,66,66)" stroke-width="7.9" stroke-linecap="round" stroke-opacity="0.8"/><path d="M634.4,184.0 Q640.5,193.0 647.3,200.0" fill="none" stroke="rgb(91,91,91)" stroke-width="4.699999999999999" stroke-linecap="round"/><path d="M634.4,184.0 Q640.5,193.0 647.3,200.0" fill="none" stroke="rgb(148,148,148)" stroke-width="1.9" stroke-linecap="round"/><path d="M634.4,166.6 Q640.5,176.3 647.3,183.9" fill="none" stroke="rgb(66,66,66)" stroke-width="7.9" stroke-linecap="round" stroke-opacity="0.8"/><path d="M634.4,166.6 Q640.5,176.3 647.3,183.9" fill="none" stroke="rgb(91,91,91)" stroke-width="4.699999999999999" stroke-linecap="round"/><path d="M634.4,166.6 Q640.5,176.3 647.3,183.9" fill="none" stroke="rgb(148,148,148)" stroke-width="1.9" stroke-linecap="round"/><path d="M634.4,149.2 Q640.5,159.6 647.3,167.8" fill="none" stroke="rgb(66,66,66)" stroke-width="7.9" stroke-linecap="round" stroke-opacity="0.8"/><path d="M634.4,149.2 Q640.5,159.6 647.3,167.8" fill="none" stroke="rgb(91,91,91)" stroke-width="4.699999999999999" stroke-linecap="round"/><path d="M634.4,149.2 Q640.5,159.6 647.3,167.8" fill="none" stroke="rgb(148,148,148)" stroke-width="1.9" stroke-linecap="round"/><path d="M634.4,131.8 Q640.5,143.0 647.3,151.7" fill="none" stroke="rgb(66,66,66)" stroke-width="7.9" stroke-linecap="round" stroke-opacity="0.8"/><path d="M634.4,131.8 Q640.5,143.0 647.3,151.7" fill="none" stroke="rgb(91,91,91)" stroke-width="4.699999999999999" stroke-linecap="round"/><path d="M634.4,131.8 Q640.5,143.0 647.3,151.7" fill="none" stroke="rgb(148,148,148)" stroke-width="1.9" stroke-linecap="round"/><path d="M634.4,114.4 Q640.5,126.3 647.3,135.6" fill="none" stroke="rgb(56,56,56)" stroke-width="7.9" stroke-linecap="round" stroke-opacity="0.8"/><path d="M634.4,114.4 Q640.5,126.3 647.3,135.6" fill="none" stroke="rgb(77,77,77)" stroke-width="4.699999999999999" stroke-linecap="round"/><path d="M634.4,114.4 Q640.5,126.3 647.3,135.6" fill="none" stroke="rgb(125,125,125)" stroke-width="1.9" stroke-linecap="round"/><path d="M634.4,97.0 Q640.5,109.6 647.3,119.6" fill="none" stroke="rgb(56,56,56)" stroke-width="7.9" stroke-linecap="round" stroke-opacity="0.8"/><path d="M634.4,97.0 Q640.5,109.6 647.3,119.6" fill="none" stroke="rgb(77,77,77)" stroke-width="4.699999999999999" stroke-linecap="round"/><path d="M634.4,97.0 Q640.5,109.6 647.3,119.6" fill="none" stroke="rgb(125,125,125)" stroke-width="1.9" stroke-linecap="round"/><path d="M634.4,79.6 Q640.5,93.0 647.3,103.5" fill="none" stroke="rgb(71,71,71)" stroke-width="3.3" stroke-linecap="round"/><path d="M634.4,79.6 Q640.5,93.0 647.3,103.5" fill="none" stroke="rgb(96,96,96)" stroke-width="1.14" stroke-linecap="round"/><path d="M634.4,62.2 Q640.5,76.3 647.3,87.4" fill="none" stroke="rgb(71,71,71)" stroke-width="3.3" stroke-linecap="round"/><path d="M634.4,62.2 Q640.5,76.3 647.3,87.4" fill="none" stroke="rgb(96,96,96)" stroke-width="1.14" stroke-linecap="round"/><path d="M661.6,55.0 V281.0" stroke="rgb(88,88,88)" stroke-width="1.2"/><path d="M673.8,69.0 V283.0" stroke="rgb(76,76,76)" stroke-width="1.1"/><path d="M661.4,271.0 Q667.5,276.3 674.3,280.5" fill="none" stroke="rgb(68,68,68)" stroke-width="7.9" stroke-linecap="round" stroke-opacity="0.8"/><path d="M661.4,271.0 Q667.5,276.3 674.3,280.5" fill="none" stroke="rgb(94,94,94)" stroke-width="4.699999999999999" stroke-linecap="round"/><path d="M661.4,271.0 Q667.5,276.3 674.3,280.5" fill="none" stroke="rgb(152,152,152)" stroke-width="1.9" stroke-linecap="round"/><path d="M661.4,253.6 Q667.5,259.7 674.3,264.4" fill="none" stroke="rgb(80,80,80)" stroke-width="7.9" stroke-linecap="round" stroke-opacity="0.8"/><path d="M661.4,253.6 Q667.5,259.7 674.3,264.4" fill="none" stroke="rgb(110,110,110)" stroke-width="4.699999999999999" stroke-linecap="round"/><path d="M661.4,253.6 Q667.5,259.7 674.3,264.4" fill="none" stroke="rgb(178,178,178)" stroke-width="1.9" stroke-linecap="round"/><path d="M661.4,236.2 Q667.5,243.0 674.3,248.3" fill="none" stroke="rgb(95,95,95)" stroke-width="7.9" stroke-linecap="round" stroke-opacity="0.8"/><path d="M661.4,236.2 Q667.5,243.0 674.3,248.3" fill="none" stroke="rgb(131,131,131)" stroke-width="4.699999999999999" stroke-linecap="round"/><path d="M661.4,236.2 Q667.5,243.0 674.3,248.3" fill="none" stroke="rgb(212,212,212)" stroke-width="1.9" stroke-linecap="round"/><path d="M661.4,218.8 Q667.5,226.3 674.3,232.2" fill="none" stroke="rgb(74,74,74)" stroke-width="7.9" stroke-linecap="round" stroke-opacity="0.8"/><path d="M661.4,218.8 Q667.5,226.3 674.3,232.2" fill="none" stroke="rgb(102,102,102)" stroke-width="4.699999999999999" stroke-linecap="round"/><path d="M661.4,218.8 Q667.5,226.3 674.3,232.2" fill="none" stroke="rgb(165,165,165)" stroke-width="1.9" stroke-linecap="round"/><path d="M661.4,201.4 Q667.5,209.6 674.3,216.1" fill="none" stroke="rgb(67,67,67)" stroke-width="7.9" stroke-linecap="round" stroke-opacity="0.8"/><path d="M661.4,201.4 Q667.5,209.6 674.3,216.1" fill="none" stroke="rgb(93,93,93)" stroke-width="4.699999999999999" stroke-linecap="round"/><path d="M661.4,201.4 Q667.5,209.6 674.3,216.1" fill="none" stroke="rgb(150,150,150)" stroke-width="1.9" stroke-linecap="round"/><path d="M661.4,184.0 Q667.5,193.0 674.3,200.0" fill="none" stroke="rgb(66,66,66)" stroke-width="7.9" stroke-linecap="round" stroke-opacity="0.8"/><path d="M661.4,184.0 Q667.5,193.0 674.3,200.0" fill="none" stroke="rgb(91,91,91)" stroke-width="4.699999999999999" stroke-linecap="round"/><path d="M661.4,184.0 Q667.5,193.0 674.3,200.0" fill="none" stroke="rgb(148,148,148)" stroke-width="1.9" stroke-linecap="round"/><path d="M661.4,166.6 Q667.5,176.3 674.3,183.9" fill="none" stroke="rgb(66,66,66)" stroke-width="7.9" stroke-linecap="round" stroke-opacity="0.8"/><path d="M661.4,166.6 Q667.5,176.3 674.3,183.9" fill="none" stroke="rgb(91,91,91)" stroke-width="4.699999999999999" stroke-linecap="round"/><path d="M661.4,166.6 Q667.5,176.3 674.3,183.9" fill="none" stroke="rgb(148,148,148)" stroke-width="1.9" stroke-linecap="round"/><path d="M661.4,149.2 Q667.5,159.6 674.3,167.8" fill="none" stroke="rgb(66,66,66)" stroke-width="7.9" stroke-linecap="round" stroke-opacity="0.8"/><path d="M661.4,149.2 Q667.5,159.6 674.3,167.8" fill="none" stroke="rgb(91,91,91)" stroke-width="4.699999999999999" stroke-linecap="round"/><path d="M661.4,149.2 Q667.5,159.6 674.3,167.8" fill="none" stroke="rgb(148,148,148)" stroke-width="1.9" stroke-linecap="round"/><path d="M661.4,131.8 Q667.5,143.0 674.3,151.7" fill="none" stroke="rgb(66,66,66)" stroke-width="7.9" stroke-linecap="round" stroke-opacity="0.8"/><path d="M661.4,131.8 Q667.5,143.0 674.3,151.7" fill="none" stroke="rgb(91,91,91)" stroke-width="4.699999999999999" stroke-linecap="round"/><path d="M661.4,131.8 Q667.5,143.0 674.3,151.7" fill="none" stroke="rgb(148,148,148)" stroke-width="1.9" stroke-linecap="round"/><path d="M661.4,114.4 Q667.5,126.3 674.3,135.6" fill="none" stroke="rgb(56,56,56)" stroke-width="7.9" stroke-linecap="round" stroke-opacity="0.8"/><path d="M661.4,114.4 Q667.5,126.3 674.3,135.6" fill="none" stroke="rgb(77,77,77)" stroke-width="4.699999999999999" stroke-linecap="round"/><path d="M661.4,114.4 Q667.5,126.3 674.3,135.6" fill="none" stroke="rgb(125,125,125)" stroke-width="1.9" stroke-linecap="round"/><path d="M661.4,97.0 Q667.5,109.6 674.3,119.6" fill="none" stroke="rgb(56,56,56)" stroke-width="7.9" stroke-linecap="round" stroke-opacity="0.8"/><path d="M661.4,97.0 Q667.5,109.6 674.3,119.6" fill="none" stroke="rgb(77,77,77)" stroke-width="4.699999999999999" stroke-linecap="round"/><path d="M661.4,97.0 Q667.5,109.6 674.3,119.6" fill="none" stroke="rgb(125,125,125)" stroke-width="1.9" stroke-linecap="round"/><path d="M661.4,79.6 Q667.5,93.0 674.3,103.5" fill="none" stroke="rgb(71,71,71)" stroke-width="3.3" stroke-linecap="round"/><path d="M661.4,79.6 Q667.5,93.0 674.3,103.5" fill="none" stroke="rgb(96,96,96)" stroke-width="1.14" stroke-linecap="round"/><path d="M661.4,62.2 Q667.5,76.3 674.3,87.4" fill="none" stroke="rgb(71,71,71)" stroke-width="3.3" stroke-linecap="round"/><path d="M661.4,62.2 Q667.5,76.3 674.3,87.4" fill="none" stroke="rgb(96,96,96)" stroke-width="1.14" stroke-linecap="round"/><path d="M217,240 H283" stroke="rgb(120,120,120)" stroke-width="2.5" stroke-opacity="0.35" stroke-dasharray="5 3 8 2"/><path d="M217,256 H283" stroke="rgb(110,110,110)" stroke-width="2" stroke-opacity="0.3" stroke-dasharray="6 3 4 3"/><rect x="0" y="302.6" width="705" height="1.4" fill="rgb(150,150,150)"/><rect x="0" y="304" width="705" height="2.6" fill="rgb(192,192,192)"/></g></svg>
</body></html>
